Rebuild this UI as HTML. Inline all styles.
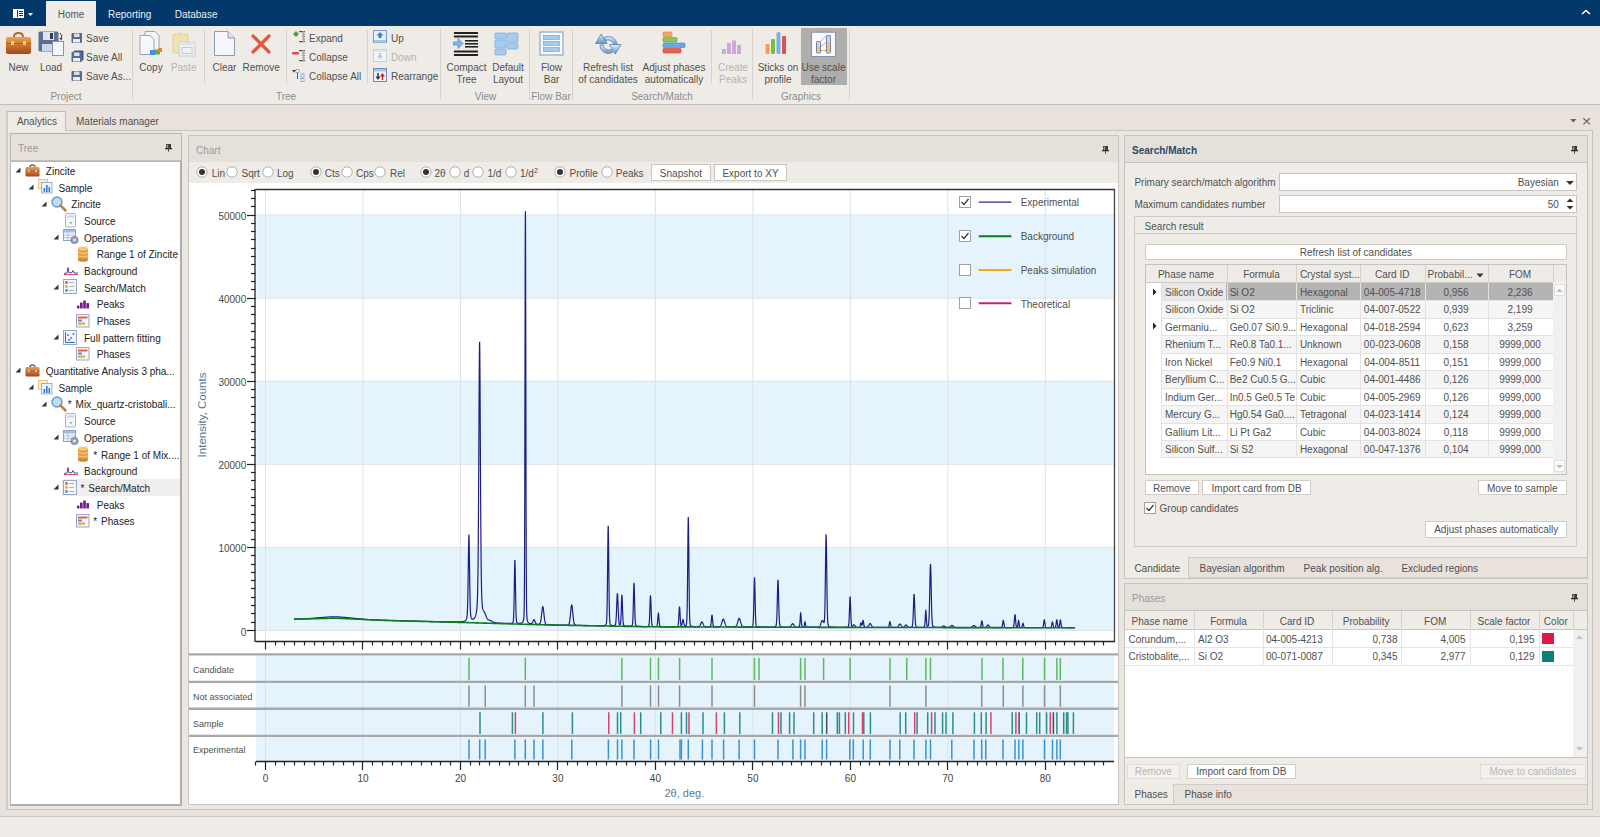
<!DOCTYPE html><html><head><meta charset="utf-8"><style>
*{margin:0;padding:0;box-sizing:border-box}
html,body{width:1600px;height:837px;overflow:hidden;background:#efece7;font-family:"Liberation Sans",sans-serif;font-size:10px;}
.r{position:absolute}
.t{position:absolute;white-space:nowrap;line-height:12px}
</style></head><body>
<div class="r" style="left:0px;top:0px;width:1600px;height:26px;background:#02386a"></div>
<svg class="r" style="left:12px;top:8px;" width="22" height="12" viewBox="0 0 22 12"><rect x="1" y="1" width="11" height="9" fill="#fff"/><rect x="5" y="2" width="1" height="7" fill="#02386a"/><rect x="7" y="3" width="4" height="1" fill="#02386a"/><rect x="7" y="5" width="4" height="1" fill="#02386a"/><rect x="7" y="7" width="4" height="1" fill="#02386a"/><path d="M16 5 L21 5 L18.5 8 Z" fill="#fff"/></svg>
<div class="r" style="left:46px;top:1px;width:50px;height:25px;background:#efece7"></div>
<div class="t" style="left:57.7px;top:9.43px;color:#4e5866;font-size:10px;">Home</div>
<div class="t" style="left:108.0px;top:9.43px;color:#e8eef4;font-size:10px;">Reporting</div>
<div class="t" style="left:174.7px;top:9.43px;color:#e8eef4;font-size:10px;">Database</div>
<svg class="r" style="left:1580px;top:8px;" width="12" height="8" viewBox="0 0 12 8"><path d="M2 6 L6 2.5 L10 6" stroke="#fff" stroke-width="1.6" fill="none"/></svg>
<div class="r" style="left:0px;top:26px;width:1600px;height:78px;background:#efece7"></div>
<div class="r" style="left:0px;top:104px;width:1600px;height:1px;background:#c2c0bc"></div>
<div class="r" style="left:132px;top:30px;width:1px;height:70px;background:#d6d2cd"></div>
<div class="r" style="left:204px;top:30px;width:1px;height:54px;background:#d6d2cd"></div>
<div class="r" style="left:286px;top:30px;width:1px;height:54px;background:#d6d2cd"></div>
<div class="r" style="left:367px;top:30px;width:1px;height:54px;background:#d6d2cd"></div>
<div class="r" style="left:440px;top:29px;width:1px;height:71px;background:#d6d2cd"></div>
<div class="r" style="left:529px;top:29px;width:1px;height:71px;background:#d6d2cd"></div>
<div class="r" style="left:572px;top:29px;width:1px;height:71px;background:#d6d2cd"></div>
<div class="r" style="left:711px;top:30px;width:1px;height:54px;background:#d6d2cd"></div>
<div class="r" style="left:752px;top:29px;width:1px;height:71px;background:#d6d2cd"></div>
<div class="r" style="left:849px;top:29px;width:1px;height:71px;background:#d6d2cd"></div>
<div class="t" style="left:-34.0px;width:200px;text-align:center;top:91.44px;color:#8c8c8c;font-size:10px;">Project</div>
<div class="t" style="left:186.0px;width:200px;text-align:center;top:91.44px;color:#8c8c8c;font-size:10px;">Tree</div>
<div class="t" style="left:385.5px;width:200px;text-align:center;top:91.44px;color:#8c8c8c;font-size:10px;">View</div>
<div class="t" style="left:451.0px;width:200px;text-align:center;top:91.44px;color:#8c8c8c;font-size:10px;">Flow Bar</div>
<div class="t" style="left:562.0px;width:200px;text-align:center;top:91.44px;color:#8c8c8c;font-size:10px;">Search/Match</div>
<div class="t" style="left:701.0px;width:200px;text-align:center;top:91.44px;color:#8c8c8c;font-size:10px;">Graphics</div>
<div class="t" style="left:-81.5px;width:200px;text-align:center;top:62.44px;color:#505050;font-size:10px;">New</div>
<div class="t" style="left:-49.0px;width:200px;text-align:center;top:62.44px;color:#505050;font-size:10px;">Load</div>
<div class="t" style="left:51.0px;width:200px;text-align:center;top:62.44px;color:#505050;font-size:10px;">Copy</div>
<div class="t" style="left:83.7px;width:200px;text-align:center;top:62.44px;color:#b5b3b0;font-size:10px;">Paste</div>
<div class="t" style="left:124.5px;width:200px;text-align:center;top:62.44px;color:#505050;font-size:10px;">Clear</div>
<div class="t" style="left:161.2px;width:200px;text-align:center;top:62.44px;color:#505050;font-size:10px;">Remove</div>
<div class="t" style="left:366.5px;width:200px;text-align:center;top:62.44px;color:#505050;font-size:10px;">Compact</div><div class="t" style="left:366.5px;width:200px;text-align:center;top:74.44px;color:#505050;font-size:10px;">Tree</div>
<div class="t" style="left:408.0px;width:200px;text-align:center;top:62.44px;color:#505050;font-size:10px;">Default</div><div class="t" style="left:408.0px;width:200px;text-align:center;top:74.44px;color:#505050;font-size:10px;">Layout</div>
<div class="t" style="left:451.5px;width:200px;text-align:center;top:62.44px;color:#505050;font-size:10px;">Flow</div><div class="t" style="left:451.5px;width:200px;text-align:center;top:74.44px;color:#505050;font-size:10px;">Bar</div>
<div class="t" style="left:508.0px;width:200px;text-align:center;top:62.44px;color:#505050;font-size:10px;">Refresh list</div><div class="t" style="left:508.0px;width:200px;text-align:center;top:74.44px;color:#505050;font-size:10px;">of candidates</div>
<div class="t" style="left:574.0px;width:200px;text-align:center;top:62.44px;color:#505050;font-size:10px;">Adjust phases</div><div class="t" style="left:574.0px;width:200px;text-align:center;top:74.44px;color:#505050;font-size:10px;">automatically</div>
<div class="r" style="left:801px;top:28px;width:46px;height:57px;background:#afaeac"></div>
<div class="t" style="left:633.0px;width:200px;text-align:center;top:62.44px;color:#b5b3b0;font-size:10px;">Create</div><div class="t" style="left:633.0px;width:200px;text-align:center;top:74.44px;color:#b5b3b0;font-size:10px;">Peaks</div>
<div class="t" style="left:678.0px;width:200px;text-align:center;top:62.44px;color:#505050;font-size:10px;">Sticks on</div><div class="t" style="left:678.0px;width:200px;text-align:center;top:74.44px;color:#505050;font-size:10px;">profile</div>
<div class="t" style="left:723.5px;width:200px;text-align:center;top:62.44px;color:#505050;font-size:10px;">Use scale</div><div class="t" style="left:723.5px;width:200px;text-align:center;top:74.44px;color:#505050;font-size:10px;">factor</div>
<div class="t" style="left:86.0px;top:33.14px;color:#505050;font-size:10px;">Save</div>
<div class="t" style="left:86.0px;top:52.23px;color:#505050;font-size:10px;">Save All</div>
<div class="t" style="left:86.0px;top:70.94px;color:#505050;font-size:10px;">Save As...</div>
<div class="t" style="left:309.0px;top:32.94px;color:#505050;font-size:10px;">Expand</div>
<div class="t" style="left:309.0px;top:52.44px;color:#505050;font-size:10px;">Collapse</div>
<div class="t" style="left:309.0px;top:71.44px;color:#505050;font-size:10px;">Collapse All</div>
<div class="t" style="left:391.0px;top:32.94px;color:#505050;font-size:10px;">Up</div>
<div class="t" style="left:391.0px;top:52.44px;color:#b5b3b0;font-size:10px;">Down</div>
<div class="t" style="left:391.0px;top:71.44px;color:#505050;font-size:10px;">Rearrange</div>
<svg class="r" style="left:5px;top:31px;" width="27" height="25" viewBox="0 0 27 25"><defs><linearGradient id="bc" x1="0" y1="0" x2="0" y2="1"><stop offset="0" stop-color="#f0a050"/><stop offset="1" stop-color="#a04818"/></linearGradient></defs>
<path d="M9 6 Q9 2 13.5 2 Q18 2 18 6" stroke="#b06a30" stroke-width="2" fill="none"/>
<rect x="1" y="6" width="25" height="17" rx="2" fill="url(#bc)"/>
<rect x="1" y="12" width="25" height="1" fill="#8a4010" opacity="0.5"/>
<rect x="6" y="10" width="3" height="4" fill="#ffd060"/><rect x="18" y="10" width="3" height="4" fill="#ffd060"/></svg>
<svg class="r" style="left:38px;top:31px;" width="26" height="25" viewBox="0 0 26 25"><rect x="0.5" y="0.5" width="20" height="20" rx="1.5" fill="#5c6e94"/>
<rect x="5" y="1" width="11" height="8" fill="#dfe6f0"/><rect x="12" y="2" width="3" height="6" fill="#2c3a5a"/>
<rect x="4" y="13" width="13" height="7" fill="#c8d8ec"/>
<path d="M22 2 Q25 4 23 8" stroke="#333" stroke-width="1" fill="none"/><path d="M21.5 7 L24.5 7 L23 9.5Z" fill="#333"/>
<rect x="14.5" y="10.5" width="11" height="14" fill="#f4f6fa" stroke="#8a96b0" stroke-width="1"/></svg>
<svg class="r" style="left:71px;top:31px;" width="13" height="13" viewBox="0 0 13 13"><rect x="0.5" y="2" width="10.5" height="10" rx="1" fill="#5a6a8e"/><rect x="3" y="2.5" width="5.5" height="3.5" fill="#d8e0ec"/><rect x="2" y="8" width="7" height="3.5" fill="#e8eef6"/></svg>
<svg class="r" style="left:71px;top:50px;" width="13" height="13" viewBox="0 0 13 13"><rect x="2.5" y="0.5" width="10" height="10" rx="1" fill="#48587a"/><rect x="0.5" y="2" width="10.5" height="10" rx="1" fill="#5a6a8e"/><rect x="3" y="2.5" width="5.5" height="3.5" fill="#d8e0ec"/><rect x="2" y="8" width="7" height="3.5" fill="#e8eef6"/></svg>
<svg class="r" style="left:71px;top:69px;" width="13" height="13" viewBox="0 0 13 13"><rect x="0.5" y="2" width="10.5" height="10" rx="1" fill="#5a6a8e"/><rect x="3" y="2.5" width="5.5" height="3.5" fill="#d8e0ec"/><rect x="2" y="8" width="7" height="3.5" fill="#e8eef6"/></svg>
<svg class="r" style="left:139px;top:31px;" width="24" height="26" viewBox="0 0 24 26"><path d="M6 0.5 L16 0.5 L20 4.5 L20 19.5 L6 19.5Z" fill="#f2f4f8" stroke="#9aa4b8"/>
<path d="M1 4.5 L11 4.5 L15 8.5 L15 23.5 L1 23.5Z" fill="#f6f8fb" stroke="#9aa4b8"/>
<rect x="11" y="19" width="5" height="5" fill="#4a90d8"/><rect x="16" y="18.5" width="5" height="5" fill="#58b030"/><rect x="19" y="17" width="4" height="4" fill="#e08a30"/></svg>
<svg class="r" style="left:172px;top:31px;" width="24" height="26" viewBox="0 0 24 26"><rect x="1" y="3" width="15" height="19" rx="1.5" fill="#f2e2b0" stroke="#e0d0a0"/>
<path d="M5 3 Q8.5 -1 12 3 Z" fill="#d8dce4"/>
<rect x="7" y="11" width="16" height="14" fill="#eef0f4" stroke="#c8ccd4"/><rect x="7" y="11" width="16" height="3" fill="#dfe3ea"/>
<rect x="10" y="16.5" width="10" height="6" fill="none" stroke="#c8ccd4"/></svg>
<svg class="r" style="left:213px;top:31px;" width="23" height="26" viewBox="0 0 23 26"><path d="M1.5 0.5 L15 0.5 L21.5 7 L21.5 24.5 L1.5 24.5Z" fill="#f4f6fa" stroke="#8e9ab0"/><path d="M15 0.5 L15 7 L21.5 7" fill="#e0e6f0" stroke="#8e9ab0"/></svg>
<svg class="r" style="left:251px;top:34px;" width="20" height="20" viewBox="0 0 20 20"><path d="M2 2 L18 18 M18 2 L2 18" stroke="#e05a3a" stroke-width="3.2" stroke-linecap="round"/></svg>
<svg class="r" style="left:292px;top:30px;" width="15" height="14" viewBox="0 0 15 14"><path d="M4 1 L7 4 L4 7 L1 4Z" fill="#4aa040"/><rect x="7" y="1" width="6" height="1.2" fill="#555"/><rect x="10" y="3.5" width="3" height="1" fill="#888"/><rect x="10" y="6" width="3" height="1" fill="#888"/><rect x="10" y="8.5" width="3" height="1" fill="#888"/><rect x="7" y="11" width="6" height="1.2" fill="#555"/><rect x="11" y="1" width="1.2" height="11" fill="#aaa"/></svg>
<svg class="r" style="left:292px;top:49px;" width="15" height="14" viewBox="0 0 15 14"><rect x="0" y="3" width="7" height="2.5" rx="1" fill="#e04848"/><rect x="7" y="1" width="6" height="1.2" fill="#555"/><rect x="10" y="3.5" width="3" height="1" fill="#888"/><rect x="10" y="6" width="3" height="1" fill="#888"/><rect x="10" y="8.5" width="3" height="1" fill="#888"/><rect x="7" y="11" width="6" height="1.2" fill="#555"/><rect x="11" y="1" width="1.2" height="11" fill="#aaa"/></svg>
<svg class="r" style="left:292px;top:69px;" width="15" height="14" viewBox="0 0 15 14"><path d="M0 1 L4 1 L2 3.5Z" fill="#333"/><rect x="4" y="0.5" width="3" height="3" fill="#fff" stroke="#7a9ac8" stroke-width="0.8"/><rect x="5" y="4" width="1" height="6" fill="#555"/><rect x="9" y="5" width="3" height="3" fill="#fff" stroke="#7a9ac8" stroke-width="0.8"/><rect x="9" y="9.5" width="3" height="3" fill="#fff" stroke="#7a9ac8" stroke-width="0.8"/></svg>
<svg class="r" style="left:373px;top:30px;" width="15" height="14" viewBox="0 0 15 14"><rect x="0.5" y="0.5" width="13" height="12" fill="#e8f0fa" stroke="#7a9ac8"/><rect x="1" y="10" width="12" height="2.5" fill="#a8c4e8"/><path d="M7 2 L10.5 5.5 L8.5 5.5 L8.5 8 L5.5 8 L5.5 5.5 L3.5 5.5Z" fill="#3a80d0"/></svg>
<svg class="r" style="left:373px;top:49px;" width="15" height="14" viewBox="0 0 15 14"><rect x="0.5" y="0.5" width="13" height="12" fill="#f2f4f8" stroke="#c4d0e0"/><rect x="1" y="1" width="12" height="2" fill="#dde6f2"/><path d="M7 10 L10 7 L8.3 7 L8.3 4 L5.7 4 L5.7 7 L4 7Z" fill="#b8cce4"/></svg>
<svg class="r" style="left:373px;top:68px;" width="15" height="15" viewBox="0 0 15 15"><rect x="0.5" y="0.5" width="13" height="13" fill="#eef3fa" stroke="#6a8cc0"/><rect x="1" y="1" width="12" height="2.5" fill="#a8c4e8"/><path d="M5 12 L2.5 8.5 L4.3 8.5 L4.3 5 L5.7 5 L5.7 8.5 L7.5 8.5Z" fill="#20305a"/><path d="M9.5 5 L12 8.5 L10.2 8.5 L10.2 12 L8.8 12 L8.8 8.5 L7 8.5Z" fill="#d02020"/></svg>
<svg class="r" style="left:453px;top:32px;" width="26" height="25" viewBox="0 0 26 25"><rect x="1" y="0" width="24" height="2" fill="#222"/><rect x="1" y="3.5" width="24" height="2" fill="#222"/><rect x="12" y="8" width="13" height="1.6" fill="#222"/><rect x="12" y="11" width="13" height="1.6" fill="#222"/><rect x="12" y="14" width="13" height="1.6" fill="#222"/><rect x="1" y="18.5" width="24" height="2" fill="#222"/><rect x="1" y="22" width="24" height="2" fill="#222"/><path d="M0 10 L5 10 L5 6.5 L10 11.5 L5 16.5 L5 13 L0 13Z" fill="#80b8e8" stroke="#4a88c8" stroke-width="0.7"/></svg>
<svg class="r" style="left:494px;top:32px;" width="27" height="25" viewBox="0 0 27 25"><g fill="#a6cbef" stroke="#7eaee0" stroke-width="0.8"><rect x="1" y="1" width="11" height="6" rx="1"/><rect x="1" y="8" width="11" height="8" rx="1"/><rect x="1" y="17" width="11" height="6" rx="1"/><rect x="13" y="1" width="11" height="9" rx="1"/><rect x="13" y="11" width="11" height="6" rx="1"/></g></svg>
<svg class="r" style="left:539px;top:31px;" width="25" height="26" viewBox="0 0 25 26"><rect x="1" y="1" width="23" height="23" fill="#f8fafc" stroke="#8aa8d0" stroke-width="1.2"/><g fill="#a6cbef" stroke="#7eaee0" stroke-width="0.8"><rect x="4.5" y="4.5" width="16" height="4"/><rect x="4.5" y="10.5" width="16" height="4"/><rect x="4.5" y="16.5" width="16" height="4"/></g></svg>
<svg class="r" style="left:594px;top:33px;" width="28" height="22" viewBox="0 0 28 22"><defs><linearGradient id="rf" x1="0" y1="0" x2="0" y2="1"><stop offset="0" stop-color="#d8effc"/><stop offset="1" stop-color="#5c98d6"/></linearGradient></defs>
<g fill="url(#rf)" stroke="#5a7ea8" stroke-width="0.8" stroke-linejoin="round">
<path d="M10.25 4.64 A8.5 8.5 0 0 1 23 12 L19.5 12 A5 5 0 0 0 12 7.67 Z"/>
<path d="M15.5 11.5 L27 11.5 L21.25 21 Z"/>
<path d="M6 12 A8.5 8.5 0 0 0 18.75 19.36 L17 16.33 A5 5 0 0 1 9.5 12 Z"/>
<path d="M1.5 10.5 L13 10.5 L7.25 1 Z"/>
</g></svg>
<svg class="r" style="left:662px;top:31px;" width="24" height="26" viewBox="0 0 24 26"><rect x="1" y="1" width="9" height="4.5" rx="1" fill="#f0a860" stroke="#d08840" stroke-width="0.6"/><rect x="1" y="6.5" width="14" height="4.5" rx="1" fill="#8cc850" stroke="#60a030" stroke-width="0.6"/><rect x="1" y="12" width="22" height="4.5" rx="1" fill="#6aa8e8" stroke="#3a80d0" stroke-width="0.6"/><rect x="1" y="17.5" width="18" height="4.5" rx="1" fill="#e86050" stroke="#c03a30" stroke-width="0.6"/></svg>
<svg class="r" style="left:721px;top:40px;" width="24" height="15" viewBox="0 0 24 15"><g fill="#cda8d8"><rect x="1" y="9" width="4" height="5"/><rect x="6" y="3" width="4" height="11"/><rect x="11" y="0.5" width="4" height="13.5"/><rect x="16" y="5" width="4" height="9"/></g></svg>
<svg class="r" style="left:764px;top:31px;" width="26" height="24" viewBox="0 0 26 24"><rect x="1.5" y="13" width="4" height="10" rx="1" fill="#f0a050"/><rect x="7" y="8" width="4" height="15" rx="1" fill="#78c040"/><rect x="12.5" y="1" width="4" height="22" rx="1.5" fill="#7ab0e8"/><rect x="18" y="5" width="4" height="18" rx="1" fill="#e05050"/></svg>
<svg class="r" style="left:810px;top:31px;" width="27" height="27" viewBox="0 0 27 27"><rect x="1.5" y="1.2" width="24" height="24.3" fill="#f8f9fc" stroke="#8890a8" stroke-width="1"/>
<path d="M10.5 10.5 L16.5 4.5 M10.5 16 L16.5 11 M10.5 19.5 L16.5 19.5" stroke="#e0a060" stroke-width="0.9"/>
<rect x="6.5" y="10.5" width="4" height="11.5" rx="0.8" fill="#c8d4ec" stroke="#7880a0" stroke-width="1"/>
<rect x="7" y="15.5" width="3" height="4.5" fill="#f4c070"/>
<rect x="16.5" y="4.5" width="4" height="17.5" rx="0.8" fill="#c8d4ec" stroke="#7880a0" stroke-width="1"/>
<rect x="17" y="11.5" width="3" height="8.5" fill="#f4c070"/></svg>
<div class="r" style="left:0px;top:105px;width:1600px;height:711px;background:#e8e1dc"></div>
<div class="r" style="left:0px;top:105px;width:1600px;height:1px;background:#e2dfdb"></div>
<div class="r" style="left:6px;top:111px;width:60px;height:20px;background:#efece7;border:1px solid #c0bcb7;border-left:2px solid #cdc9c4;border-bottom:none"></div>
<div class="t" style="left:16.9px;top:116.44px;color:#505050;font-size:10px;">Analytics</div>
<div class="t" style="left:76.0px;top:116.44px;color:#505050;font-size:10px;">Materials manager</div>
<svg class="r" style="left:1567px;top:117px;" width="12" height="8" viewBox="0 0 12 8"><path d="M3 2 L9.5 2 L6.25 5.5Z" fill="#666"/></svg>
<svg class="r" style="left:1580px;top:115px;" width="12" height="12" viewBox="0 0 12 12"><path d="M3.4 3.2 L9.9 9.4 M9.9 3.2 L3.4 9.4" stroke="#666" stroke-width="1.2"/></svg>
<div class="r" style="left:6px;top:130px;width:1587px;height:680px;background:#eae6e1;border:1px solid #c6c2bd;border-left:2px solid #cdc9c4"></div>
<div class="r" style="left:8px;top:130px;width:57px;height:2px;background:#efece7"></div>
<div class="r" style="left:0px;top:810px;width:1600px;height:6px;background:#e8e1dc"></div>
<div class="r" style="left:0px;top:816px;width:1600px;height:1px;background:#c9c5c0"></div>
<div class="r" style="left:0px;top:817px;width:1600px;height:20px;background:#efece7"></div>
<div class="r" style="left:10px;top:133px;width:172px;height:673px;background:#efece7;border:1px solid #b9b6b2"></div><div class="r" style="left:11px;top:134px;width:170px;height:27px;background:#e6e0db;border-bottom:1px solid #c4c0bb"></div><div class="t" style="left:18.0px;top:142.94px;color:#9a9a9a;font-size:10px;">Tree</div><svg class="r" style="left:164.5px;top:144px;" width="7" height="9" viewBox="0 0 7 9"><rect x="1" y="0" width="5" height="4.2" fill="#3a3a3a"/><rect x="1.6" y="0.6" width="1.6" height="3.4" fill="#999"/><rect x="0" y="4" width="7" height="1.3" fill="#333"/><rect x="3" y="5" width="1" height="2.6" fill="#444"/></svg>
<div class="r" style="left:11px;top:161px;width:169px;height:644px;background:#fff;border-top:1px solid #b8b4b0"></div>
<div class="r" style="left:180px;top:161px;width:2px;height:645px;background:#b0aeac"></div>
<div class="r" style="left:10px;top:804px;width:172px;height:2px;background:#b0aeac"></div>
<svg class="r" style="left:15.2px;top:167.2px;" width="6" height="6" viewBox="0 0 6 6"><path d="M5.5 0.5 L5.5 5.5 L0.5 5.5Z" fill="#333"/></svg>
<svg class="r" style="left:25px;top:164px;" width="15" height="13" viewBox="0 0 15 13"><defs><linearGradient id="tb" x1="0" y1="0" x2="0" y2="1"><stop offset="0" stop-color="#e8a060"/><stop offset="1" stop-color="#a04a1c"/></linearGradient></defs><path d="M5 3 Q5 0.8 7.5 0.8 Q10 0.8 10 3" stroke="#8a5028" stroke-width="1.3" fill="none"/><rect x="0.5" y="3" width="14" height="9.5" rx="1.2" fill="url(#tb)"/><rect x="0.5" y="6.6" width="14" height="0.8" fill="#7a3a10" opacity="0.5"/><rect x="3" y="6" width="1.6" height="2" fill="#ffd070"/><rect x="10.4" y="6" width="1.6" height="2" fill="#ffd070"/></svg>
<div class="t" style="left:45.8px;top:165.94px;color:#222;font-size:10px;">Zincite</div>
<svg class="r" style="left:27.950000000000003px;top:183.88px;" width="6" height="6" viewBox="0 0 6 6"><path d="M5.5 0.5 L5.5 5.5 L0.5 5.5Z" fill="#333"/></svg>
<svg class="r" style="left:38px;top:179px;" width="15" height="15" viewBox="0 0 15 15"><rect x="0.5" y="0.5" width="9" height="9" fill="#f8f0d8" stroke="#d8b868" stroke-width="0.8"/><rect x="3.5" y="3.5" width="10.5" height="10.5" fill="#eef4fc" stroke="#8aaad0" stroke-width="0.9"/><rect x="5.5" y="9" width="1.6" height="4" fill="#3a78c8"/><rect x="8" y="6" width="1.6" height="7" fill="#3a78c8"/><rect x="10.5" y="8" width="1.6" height="5" fill="#3a78c8"/></svg>
<div class="t" style="left:58.5px;top:182.62px;color:#222;font-size:10px;">Sample</div>
<svg class="r" style="left:40.7px;top:200.56px;" width="6" height="6" viewBox="0 0 6 6"><path d="M5.5 0.5 L5.5 5.5 L0.5 5.5Z" fill="#333"/></svg>
<svg class="r" style="left:51px;top:196px;" width="16" height="16" viewBox="0 0 16 16"><circle cx="6" cy="6" r="5" fill="#bcdcf4" stroke="#6a9ac8" stroke-width="1.4"/><path d="M9.5 9.5 L14.5 14.5" stroke="#c08040" stroke-width="2.5" stroke-linecap="round"/></svg>
<div class="t" style="left:71.3px;top:199.30px;color:#222;font-size:10px;">Zincite</div>
<svg class="r" style="left:64px;top:213px;" width="13" height="15" viewBox="0 0 13 15"><rect x="1.5" y="0.5" width="10" height="13.5" rx="1" fill="#f2f5f9" stroke="#a8b4c4"/><rect x="3" y="2.5" width="7" height="2" fill="#c8d4e4"/><rect x="6" y="9" width="1.5" height="1.5" fill="#4a9a4a"/></svg>
<div class="t" style="left:84.0px;top:215.97px;color:#222;font-size:10px;">Source</div>
<svg class="r" style="left:53.45px;top:233.92px;" width="6" height="6" viewBox="0 0 6 6"><path d="M5.5 0.5 L5.5 5.5 L0.5 5.5Z" fill="#333"/></svg>
<svg class="r" style="left:63px;top:229px;" width="16" height="15" viewBox="0 0 16 15"><rect x="0.5" y="0.5" width="12" height="11" fill="#eef3fa" stroke="#8aa4c8"/><rect x="1" y="1" width="11" height="2.5" fill="#a8c0e0"/><path d="M1 6 L12 6 M1 8.5 L12 8.5 M5 3.5 L5 11" stroke="#a8b8d0" stroke-width="0.7"/><circle cx="11.5" cy="11" r="3.6" fill="#9aa6b8" stroke="#6a7688" stroke-width="0.8"/><circle cx="11.5" cy="11" r="1.3" fill="#e8ecf2"/></svg>
<div class="t" style="left:84.0px;top:232.66px;color:#222;font-size:10px;">Operations</div>
<svg class="r" style="left:77px;top:246px;" width="12" height="16" viewBox="0 0 12 16"><rect x="1" y="2" width="10" height="12" fill="#e8a040"/><ellipse cx="6" cy="2.5" rx="5" ry="2" fill="#f8c870"/><ellipse cx="6" cy="14" rx="5" ry="1.8" fill="#d08830"/><path d="M1 6.5 Q6 8.5 11 6.5 M1 10 Q6 12 11 10" stroke="#f8d090" stroke-width="0.9" fill="none"/></svg>
<div class="t" style="left:96.8px;top:249.33px;color:#222;font-size:10px;">Range 1 of Zincite</div>
<svg class="r" style="left:63px;top:266px;" width="16" height="10" viewBox="0 0 16 10"><path d="M1 8.5 L15 8.5" stroke="#d04060" stroke-width="0.9"/><path d="M1 7.5 L4 7 L5 1.5 L6 7 L9 6.5 L10 4.5 L11 7 L15 7" stroke="#3a3a8a" stroke-width="0.9" fill="none"/></svg>
<div class="t" style="left:84.0px;top:266.01px;color:#222;font-size:10px;">Background</div>
<svg class="r" style="left:53.45px;top:283.96px;" width="6" height="6" viewBox="0 0 6 6"><path d="M5.5 0.5 L5.5 5.5 L0.5 5.5Z" fill="#333"/></svg>
<svg class="r" style="left:63px;top:279px;" width="14" height="15" viewBox="0 0 14 15"><rect x="0.5" y="0.5" width="13" height="14" fill="#f4f6fa" stroke="#98a8c0"/><circle cx="3.5" cy="3.5" r="1.4" fill="#e06030"/><circle cx="3.5" cy="7.5" r="1.4" fill="#e0b030"/><circle cx="3.5" cy="11.5" r="1.4" fill="#5a8ad0"/><path d="M6 3.5 L11 3.5 M6 7.5 L11 7.5 M6 11.5 L11 11.5" stroke="#a0aabb" stroke-width="0.9"/></svg>
<div class="t" style="left:84.0px;top:282.69px;color:#222;font-size:10px;">Search/Match</div>
<svg class="r" style="left:76px;top:300px;" width="15" height="9" viewBox="0 0 15 9"><g fill="#6a1a8a"><rect x="1" y="5.5" width="2.4" height="3" rx="0.5"/><rect x="4" y="2.5" width="2.6" height="6" rx="0.5"/><rect x="7.2" y="0.5" width="2.6" height="8" rx="0.5"/><rect x="10.4" y="3" width="2.6" height="5.5" rx="0.5"/></g></svg>
<div class="t" style="left:96.8px;top:299.38px;color:#222;font-size:10px;">Peaks</div>
<svg class="r" style="left:76px;top:314px;" width="14" height="14" viewBox="0 0 14 14"><rect x="0.5" y="0.5" width="12.5" height="12.5" fill="#f4f6fa" stroke="#98a8c0"/><rect x="2" y="2.5" width="9.5" height="2" fill="#e86040"/><rect x="2" y="5.5" width="4" height="2" fill="#5a8ad0"/><rect x="2" y="8.5" width="7" height="2.2" fill="#e8a850"/></svg>
<div class="t" style="left:96.8px;top:316.06px;color:#222;font-size:10px;">Phases</div>
<svg class="r" style="left:53.45px;top:334.0px;" width="6" height="6" viewBox="0 0 6 6"><path d="M5.5 0.5 L5.5 5.5 L0.5 5.5Z" fill="#333"/></svg>
<svg class="r" style="left:63px;top:330px;" width="14" height="15" viewBox="0 0 14 15"><rect x="0.5" y="0.5" width="13" height="14" fill="#f4f6fa" stroke="#98a8c0"/><path d="M2.5 2 L2.5 12.5 L12 12.5" stroke="#3a6ac0" stroke-width="1" fill="none"/><circle cx="5" cy="5" r="0.9" fill="#3a6ac0"/><circle cx="8" cy="8" r="0.9" fill="#3a6ac0"/><circle cx="10.5" cy="4" r="0.9" fill="#3a6ac0"/><circle cx="6" cy="10" r="0.9" fill="#3a6ac0"/></svg>
<div class="t" style="left:84.0px;top:332.74px;color:#222;font-size:10px;">Full pattern fitting</div>
<svg class="r" style="left:76px;top:347px;" width="14" height="14" viewBox="0 0 14 14"><rect x="0.5" y="0.5" width="12.5" height="12.5" fill="#f4f6fa" stroke="#98a8c0"/><rect x="2" y="2.5" width="9.5" height="2" fill="#e86040"/><rect x="2" y="5.5" width="4" height="2" fill="#5a8ad0"/><rect x="2" y="8.5" width="7" height="2.2" fill="#e8a850"/></svg>
<div class="t" style="left:96.8px;top:349.41px;color:#222;font-size:10px;">Phases</div>
<svg class="r" style="left:15.2px;top:367.36px;" width="6" height="6" viewBox="0 0 6 6"><path d="M5.5 0.5 L5.5 5.5 L0.5 5.5Z" fill="#333"/></svg>
<svg class="r" style="left:25px;top:364px;" width="15" height="13" viewBox="0 0 15 13"><defs><linearGradient id="tb" x1="0" y1="0" x2="0" y2="1"><stop offset="0" stop-color="#e8a060"/><stop offset="1" stop-color="#a04a1c"/></linearGradient></defs><path d="M5 3 Q5 0.8 7.5 0.8 Q10 0.8 10 3" stroke="#8a5028" stroke-width="1.3" fill="none"/><rect x="0.5" y="3" width="14" height="9.5" rx="1.2" fill="url(#tb)"/><rect x="0.5" y="6.6" width="14" height="0.8" fill="#7a3a10" opacity="0.5"/><rect x="3" y="6" width="1.6" height="2" fill="#ffd070"/><rect x="10.4" y="6" width="1.6" height="2" fill="#ffd070"/></svg>
<div class="t" style="left:45.8px;top:366.10px;color:#222;font-size:10px;">Quantitative Analysis 3 pha...</div>
<svg class="r" style="left:27.950000000000003px;top:384.03999999999996px;" width="6" height="6" viewBox="0 0 6 6"><path d="M5.5 0.5 L5.5 5.5 L0.5 5.5Z" fill="#333"/></svg>
<svg class="r" style="left:38px;top:380px;" width="15" height="15" viewBox="0 0 15 15"><rect x="0.5" y="0.5" width="9" height="9" fill="#f8f0d8" stroke="#d8b868" stroke-width="0.8"/><rect x="3.5" y="3.5" width="10.5" height="10.5" fill="#eef4fc" stroke="#8aaad0" stroke-width="0.9"/><rect x="5.5" y="9" width="1.6" height="4" fill="#3a78c8"/><rect x="8" y="6" width="1.6" height="7" fill="#3a78c8"/><rect x="10.5" y="8" width="1.6" height="5" fill="#3a78c8"/></svg>
<div class="t" style="left:58.5px;top:382.77px;color:#222;font-size:10px;">Sample</div>
<svg class="r" style="left:40.7px;top:400.71999999999997px;" width="6" height="6" viewBox="0 0 6 6"><path d="M5.5 0.5 L5.5 5.5 L0.5 5.5Z" fill="#333"/></svg>
<svg class="r" style="left:51px;top:396px;" width="16" height="16" viewBox="0 0 16 16"><circle cx="6" cy="6" r="5" fill="#bcdcf4" stroke="#6a9ac8" stroke-width="1.4"/><path d="M9.5 9.5 L14.5 14.5" stroke="#c08040" stroke-width="2.5" stroke-linecap="round"/></svg>
<div class="t" style="left:67.8px;top:399.45px;color:#222;font-size:10px;">*</div>
<div class="t" style="left:75.6px;top:399.45px;color:#222;font-size:10px;">Mix_quartz-cristobali...</div>
<svg class="r" style="left:64px;top:413px;" width="13" height="15" viewBox="0 0 13 15"><rect x="1.5" y="0.5" width="10" height="13.5" rx="1" fill="#f2f5f9" stroke="#a8b4c4"/><rect x="3" y="2.5" width="7" height="2" fill="#c8d4e4"/><rect x="6" y="9" width="1.5" height="1.5" fill="#4a9a4a"/></svg>
<div class="t" style="left:84.0px;top:416.13px;color:#222;font-size:10px;">Source</div>
<svg class="r" style="left:53.45px;top:434.08px;" width="6" height="6" viewBox="0 0 6 6"><path d="M5.5 0.5 L5.5 5.5 L0.5 5.5Z" fill="#333"/></svg>
<svg class="r" style="left:63px;top:430px;" width="16" height="15" viewBox="0 0 16 15"><rect x="0.5" y="0.5" width="12" height="11" fill="#eef3fa" stroke="#8aa4c8"/><rect x="1" y="1" width="11" height="2.5" fill="#a8c0e0"/><path d="M1 6 L12 6 M1 8.5 L12 8.5 M5 3.5 L5 11" stroke="#a8b8d0" stroke-width="0.7"/><circle cx="11.5" cy="11" r="3.6" fill="#9aa6b8" stroke="#6a7688" stroke-width="0.8"/><circle cx="11.5" cy="11" r="1.3" fill="#e8ecf2"/></svg>
<div class="t" style="left:84.0px;top:432.81px;color:#222;font-size:10px;">Operations</div>
<svg class="r" style="left:77px;top:446px;" width="12" height="16" viewBox="0 0 12 16"><rect x="1" y="2" width="10" height="12" fill="#e8a040"/><ellipse cx="6" cy="2.5" rx="5" ry="2" fill="#f8c870"/><ellipse cx="6" cy="14" rx="5" ry="1.8" fill="#d08830"/><path d="M1 6.5 Q6 8.5 11 6.5 M1 10 Q6 12 11 10" stroke="#f8d090" stroke-width="0.9" fill="none"/></svg>
<div class="t" style="left:93.3px;top:449.50px;color:#222;font-size:10px;">*</div>
<div class="t" style="left:101.1px;top:449.50px;color:#222;font-size:10px;">Range 1 of Mix....</div>
<svg class="r" style="left:63px;top:466px;" width="16" height="10" viewBox="0 0 16 10"><path d="M1 8.5 L15 8.5" stroke="#d04060" stroke-width="0.9"/><path d="M1 7.5 L4 7 L5 1.5 L6 7 L9 6.5 L10 4.5 L11 7 L15 7" stroke="#3a3a8a" stroke-width="0.9" fill="none"/></svg>
<div class="t" style="left:84.0px;top:466.18px;color:#222;font-size:10px;">Background</div>
<div class="r" style="left:62px;top:479px;width:118px;height:17px;background:#efefef"></div>
<svg class="r" style="left:53.45px;top:484.12px;" width="6" height="6" viewBox="0 0 6 6"><path d="M5.5 0.5 L5.5 5.5 L0.5 5.5Z" fill="#333"/></svg>
<svg class="r" style="left:63px;top:480px;" width="14" height="15" viewBox="0 0 14 15"><rect x="0.5" y="0.5" width="13" height="14" fill="#f4f6fa" stroke="#98a8c0"/><circle cx="3.5" cy="3.5" r="1.4" fill="#e06030"/><circle cx="3.5" cy="7.5" r="1.4" fill="#e0b030"/><circle cx="3.5" cy="11.5" r="1.4" fill="#5a8ad0"/><path d="M6 3.5 L11 3.5 M6 7.5 L11 7.5 M6 11.5 L11 11.5" stroke="#a0aabb" stroke-width="0.9"/></svg>
<div class="t" style="left:80.5px;top:482.86px;color:#222;font-size:10px;">*</div>
<div class="t" style="left:88.3px;top:482.86px;color:#222;font-size:10px;">Search/Match</div>
<svg class="r" style="left:76px;top:500px;" width="15" height="9" viewBox="0 0 15 9"><g fill="#6a1a8a"><rect x="1" y="5.5" width="2.4" height="3" rx="0.5"/><rect x="4" y="2.5" width="2.6" height="6" rx="0.5"/><rect x="7.2" y="0.5" width="2.6" height="8" rx="0.5"/><rect x="10.4" y="3" width="2.6" height="5.5" rx="0.5"/></g></svg>
<div class="t" style="left:96.8px;top:499.54px;color:#222;font-size:10px;">Peaks</div>
<svg class="r" style="left:76px;top:514px;" width="14" height="14" viewBox="0 0 14 14"><rect x="0.5" y="0.5" width="12.5" height="12.5" fill="#f4f6fa" stroke="#98a8c0"/><rect x="2" y="2.5" width="9.5" height="2" fill="#e86040"/><rect x="2" y="5.5" width="4" height="2" fill="#5a8ad0"/><rect x="2" y="8.5" width="7" height="2.2" fill="#e8a850"/></svg>
<div class="t" style="left:93.3px;top:516.21px;color:#222;font-size:10px;">*</div>
<div class="t" style="left:101.1px;top:516.21px;color:#222;font-size:10px;">Phases</div>
<div class="r" style="left:188px;top:135px;width:931px;height:670px;background:#efece7;border:1px solid #c8c5c0"></div><div class="r" style="left:189px;top:136px;width:929px;height:27px;background:#e6e0db;border-bottom:1px solid #c4c0bb"></div><div class="t" style="left:196.0px;top:144.94px;color:#9a9a9a;font-size:10px;">Chart</div><svg class="r" style="left:1101.5px;top:146px;" width="7" height="9" viewBox="0 0 7 9"><rect x="1" y="0" width="5" height="4.2" fill="#3a3a3a"/><rect x="1.6" y="0.6" width="1.6" height="3.4" fill="#999"/><rect x="0" y="4" width="7" height="1.3" fill="#333"/><rect x="3" y="5" width="1" height="2.6" fill="#444"/></svg>
<div class="r" style="left:189px;top:162px;width:929px;height:21px;background:#efece7"></div>
<div class="r" style="left:189px;top:183px;width:929px;height:621px;background:#fff"></div>
<svg class="r" style="left:196px;top:166px;" width="12" height="12" viewBox="0 0 12 12"><circle cx="6" cy="6" r="5.2" fill="#fff" stroke="#a8a8a8" stroke-width="0.9"/><circle cx="6" cy="6" r="3" fill="#333"/></svg>
<div class="t" style="left:211.7px;top:168.03px;color:#505050;font-size:10px;">Lin</div>
<svg class="r" style="left:226px;top:166px;" width="12" height="12" viewBox="0 0 12 12"><circle cx="6" cy="6" r="5.2" fill="#fff" stroke="#a8a8a8" stroke-width="0.9"/></svg>
<div class="t" style="left:241.5px;top:168.03px;color:#505050;font-size:10px;">Sqrt</div>
<svg class="r" style="left:262px;top:166px;" width="12" height="12" viewBox="0 0 12 12"><circle cx="6" cy="6" r="5.2" fill="#fff" stroke="#a8a8a8" stroke-width="0.9"/></svg>
<div class="t" style="left:277.0px;top:168.03px;color:#505050;font-size:10px;">Log</div>
<svg class="r" style="left:310px;top:166px;" width="12" height="12" viewBox="0 0 12 12"><circle cx="6" cy="6" r="5.2" fill="#fff" stroke="#a8a8a8" stroke-width="0.9"/><circle cx="6" cy="6" r="3" fill="#333"/></svg>
<div class="t" style="left:324.8px;top:168.03px;color:#505050;font-size:10px;">Cts</div>
<svg class="r" style="left:341px;top:166px;" width="12" height="12" viewBox="0 0 12 12"><circle cx="6" cy="6" r="5.2" fill="#fff" stroke="#a8a8a8" stroke-width="0.9"/></svg>
<div class="t" style="left:356.0px;top:168.03px;color:#505050;font-size:10px;">Cps</div>
<svg class="r" style="left:374px;top:166px;" width="12" height="12" viewBox="0 0 12 12"><circle cx="6" cy="6" r="5.2" fill="#fff" stroke="#a8a8a8" stroke-width="0.9"/></svg>
<div class="t" style="left:390.0px;top:168.03px;color:#505050;font-size:10px;">Rel</div>
<svg class="r" style="left:420px;top:166px;" width="12" height="12" viewBox="0 0 12 12"><circle cx="6" cy="6" r="5.2" fill="#fff" stroke="#a8a8a8" stroke-width="0.9"/><circle cx="6" cy="6" r="3" fill="#333"/></svg>
<div class="t" style="left:434.5px;top:168.03px;color:#505050;font-size:10px;">2θ</div>
<svg class="r" style="left:449px;top:166px;" width="12" height="12" viewBox="0 0 12 12"><circle cx="6" cy="6" r="5.2" fill="#fff" stroke="#a8a8a8" stroke-width="0.9"/></svg>
<div class="t" style="left:463.8px;top:168.03px;color:#505050;font-size:10px;">d</div>
<svg class="r" style="left:472px;top:166px;" width="12" height="12" viewBox="0 0 12 12"><circle cx="6" cy="6" r="5.2" fill="#fff" stroke="#a8a8a8" stroke-width="0.9"/></svg>
<div class="t" style="left:487.5px;top:168.03px;color:#505050;font-size:10px;">1/d</div>
<svg class="r" style="left:505px;top:166px;" width="12" height="12" viewBox="0 0 12 12"><circle cx="6" cy="6" r="5.2" fill="#fff" stroke="#a8a8a8" stroke-width="0.9"/></svg>
<div class="t" style="left:520.0px;top:168.03px;color:#505050;font-size:10px;">1/d<span style="font-size:7px;position:relative;top:-4px">2</span></div>
<svg class="r" style="left:554px;top:166px;" width="12" height="12" viewBox="0 0 12 12"><circle cx="6" cy="6" r="5.2" fill="#fff" stroke="#a8a8a8" stroke-width="0.9"/><circle cx="6" cy="6" r="3" fill="#333"/></svg>
<div class="t" style="left:569.5px;top:168.03px;color:#505050;font-size:10px;">Profile</div>
<svg class="r" style="left:601px;top:166px;" width="12" height="12" viewBox="0 0 12 12"><circle cx="6" cy="6" r="5.2" fill="#fff" stroke="#a8a8a8" stroke-width="0.9"/></svg>
<div class="t" style="left:615.8px;top:168.03px;color:#505050;font-size:10px;">Peaks</div>
<div class="r" style="left:651px;top:164px;width:60px;height:17px;background:#fff;border:1px solid #c9c6c2"></div><div class="t" style="left:581.0px;width:200px;text-align:center;top:167.53px;color:#505050;font-size:10px;">Snapshot</div>
<div class="r" style="left:714px;top:164px;width:73px;height:17px;background:#fff;border:1px solid #c9c6c2"></div><div class="t" style="left:650.5px;width:200px;text-align:center;top:167.53px;color:#505050;font-size:10px;">Export to XY</div>
<svg class="r" style="left:189px;top:183px" width="929" height="621" viewBox="0 0 929 621"><rect x="67.50" y="364.40" width="858.00" height="83.10" fill="#e5f3fd"/><rect x="67.50" y="198.20" width="858.00" height="83.10" fill="#e5f3fd"/><rect x="67.50" y="32.00" width="858.00" height="83.10" fill="#e5f3fd"/><line x1="66.50" y1="447.50" x2="925.50" y2="447.50" stroke="#dde3e8" stroke-width="1"/><line x1="66.50" y1="364.40" x2="925.50" y2="364.40" stroke="#dde3e8" stroke-width="1"/><line x1="66.50" y1="281.30" x2="925.50" y2="281.30" stroke="#dde3e8" stroke-width="1"/><line x1="66.50" y1="198.20" x2="925.50" y2="198.20" stroke="#dde3e8" stroke-width="1"/><line x1="66.50" y1="115.10" x2="925.50" y2="115.10" stroke="#dde3e8" stroke-width="1"/><line x1="66.50" y1="32.00" x2="925.50" y2="32.00" stroke="#dde3e8" stroke-width="1"/><line x1="76.50" y1="7.00" x2="76.50" y2="458.50" stroke="#dfe2e5" stroke-width="1"/><line x1="173.98" y1="7.00" x2="173.98" y2="458.50" stroke="#dfe2e5" stroke-width="1"/><line x1="271.45" y1="7.00" x2="271.45" y2="458.50" stroke="#dfe2e5" stroke-width="1"/><line x1="368.92" y1="7.00" x2="368.92" y2="458.50" stroke="#dfe2e5" stroke-width="1"/><line x1="466.40" y1="7.00" x2="466.40" y2="458.50" stroke="#dfe2e5" stroke-width="1"/><line x1="563.88" y1="7.00" x2="563.88" y2="458.50" stroke="#dfe2e5" stroke-width="1"/><line x1="661.35" y1="7.00" x2="661.35" y2="458.50" stroke="#dfe2e5" stroke-width="1"/><line x1="758.83" y1="7.00" x2="758.83" y2="458.50" stroke="#dfe2e5" stroke-width="1"/><line x1="856.30" y1="7.00" x2="856.30" y2="458.50" stroke="#dfe2e5" stroke-width="1"/><polyline points="105.00,436.06 105.25,436.06 105.50,436.06 105.75,436.05 106.00,436.05 106.25,436.05 106.50,436.05 106.75,436.04 107.00,436.04 107.25,436.03 107.50,436.03 107.75,436.03 108.00,436.02 108.25,436.02 108.50,436.01 108.75,436.01 109.00,436.00 109.25,436.00 109.50,435.99 109.75,435.98 110.00,435.98 110.25,435.97 110.50,435.97 110.75,435.96 111.00,435.95 111.25,435.95 111.50,435.94 111.75,435.93 112.00,435.92 112.25,435.91 112.50,435.91 112.75,435.90 113.00,435.89 113.25,435.88 113.50,435.87 113.75,435.86 114.00,435.85 114.25,435.84 114.50,435.83 114.75,435.82 115.00,435.81 115.25,435.80 115.50,435.79 115.75,435.78 116.00,435.76 116.25,435.75 116.50,435.74 116.75,435.73 117.00,435.71 117.25,435.70 117.50,435.69 117.75,435.67 118.00,435.66 118.25,435.65 118.50,435.63 118.75,435.62 119.00,435.60 119.25,435.59 119.50,435.57 119.75,435.55 120.00,435.54 120.25,435.52 120.50,435.50 120.75,435.49 121.00,435.47 121.25,435.45 121.50,435.43 121.75,435.42 122.00,435.40 122.25,435.38 122.50,435.36 122.75,435.34 123.00,435.32 123.25,435.30 123.50,435.28 123.75,435.26 124.00,435.24 124.25,435.22 124.50,435.20 124.75,435.18 125.00,435.16 125.25,435.14 125.50,435.12 125.75,435.10 126.00,435.08 126.25,435.06 126.50,435.03 126.75,435.01 127.00,434.99 127.25,434.97 127.50,434.95 127.75,434.92 128.00,434.90 128.25,434.88 128.50,434.86 128.75,434.84 129.00,434.81 129.25,434.79 129.50,434.77 129.75,434.75 130.00,434.72 130.25,434.70 130.50,434.68 130.75,434.66 131.00,434.63 131.25,434.61 131.50,434.59 131.75,434.57 132.00,434.54 132.25,434.52 132.50,434.50 132.75,434.48 133.00,434.46 133.25,434.44 133.50,434.41 133.75,434.39 134.00,434.37 134.25,434.35 134.50,434.33 134.75,434.31 135.00,434.29 135.25,434.27 135.50,434.25 135.75,434.23 136.00,434.22 136.25,434.20 136.50,434.18 136.75,434.16 137.00,434.14 137.25,434.13 137.50,434.11 137.75,434.10 138.00,434.08 138.25,434.06 138.50,434.05 138.75,434.04 139.00,434.02 139.25,434.01 139.50,433.99 139.75,433.98 140.00,433.97 140.25,433.96 140.50,433.95 140.75,433.94 141.00,433.93 141.25,433.92 141.50,433.91 141.75,433.90 142.00,433.89 142.25,433.89 142.50,433.88 142.75,433.87 143.00,433.87 143.25,433.86 143.50,433.86 143.75,433.85 144.00,433.85 144.25,433.85 144.50,433.85 144.75,433.85 145.00,433.84 145.25,433.84 145.50,433.85 145.75,433.85 146.00,433.85 146.25,433.85 146.50,433.85 146.75,433.86 147.00,433.86 147.25,433.87 147.50,433.87 147.75,433.88 148.00,433.89 148.25,433.89 148.50,433.90 148.75,433.91 149.00,433.92 149.25,433.93 149.50,433.94 149.75,433.95 150.00,433.96 150.25,433.97 150.50,433.99 150.75,434.00 151.00,434.01 151.25,434.03 151.50,434.04 151.75,434.06 152.00,434.07 152.25,434.09 152.50,434.11 152.75,434.12 153.00,434.14 153.25,434.16 153.50,434.18 153.75,434.20 154.00,434.22 154.25,434.24 154.50,434.26 154.75,434.28 155.00,434.30 155.25,434.32 155.50,434.34 155.75,434.37 156.00,434.39 156.25,434.41 156.50,434.43 156.75,434.46 157.00,434.48 157.25,434.51 157.50,434.53 157.75,434.55 158.00,434.58 158.25,434.60 158.50,434.63 158.75,434.65 159.00,434.68 159.25,434.71 159.50,434.73 159.75,434.76 160.00,434.78 160.25,434.81 160.50,434.84 160.75,434.86 161.00,434.89 161.25,434.92 161.50,434.94 161.75,434.97 162.00,435.00 162.25,435.02 162.50,435.05 162.75,435.08 163.00,435.10 163.25,435.13 163.50,435.16 163.75,435.19 164.00,435.21 164.25,435.24 164.50,435.26 164.75,435.29 165.00,435.32 165.25,435.34 165.50,435.37 165.75,435.40 166.00,435.42 166.25,435.45 166.50,435.47 166.75,435.50 167.00,435.52 167.25,435.55 167.50,435.57 167.75,435.60 168.00,435.62 168.25,435.65 168.50,435.67 168.75,435.69 169.00,435.72 169.25,435.74 169.50,435.76 169.75,435.79 170.00,435.81 170.25,435.83 170.50,435.86 170.75,435.88 171.00,435.90 171.25,435.92 171.50,435.94 171.75,435.96 172.00,435.98 172.25,436.00 172.50,436.02 172.75,436.04 173.00,436.06 173.25,436.08 173.50,436.10 173.75,436.12 174.00,436.14 174.25,436.16 174.50,436.19 174.75,436.21 175.00,436.23 175.25,436.25 175.50,436.27 175.75,436.29 176.00,436.31 176.25,436.34 176.50,436.36 176.75,436.38 177.00,436.40 177.25,436.42 177.50,436.43 177.75,436.45 178.00,436.47 178.25,436.49 178.50,436.51 178.75,436.53 179.00,436.55 179.25,436.56 179.50,436.58 179.75,436.60 180.00,436.61 180.25,436.63 180.50,436.65 180.75,436.66 181.00,436.68 181.25,436.70 181.50,436.71 181.75,436.73 182.00,436.74 182.25,436.76 182.50,436.77 182.75,436.78 183.00,436.80 183.25,436.81 183.50,436.83 183.75,436.84 184.00,436.85 184.25,436.87 184.50,436.88 184.75,436.89 185.00,436.91 185.25,436.92 185.50,436.93 185.75,436.94 186.00,436.95 186.25,436.97 186.50,436.98 186.75,436.99 187.00,437.00 187.25,437.01 187.50,437.02 187.75,437.03 188.00,437.05 188.25,437.06 188.50,437.07 188.75,437.08 189.00,437.09 189.25,437.10 189.50,437.11 189.75,437.12 190.00,437.13 190.25,437.14 190.50,437.15 190.75,437.16 191.00,437.17 191.25,437.18 191.50,437.19 191.75,437.19 192.00,437.20 192.25,437.21 192.50,437.22 192.75,437.23 193.00,437.24 193.25,437.25 193.50,437.26 193.75,437.27 194.00,437.27 194.25,437.28 194.50,437.29 194.75,437.30 195.00,437.31 195.25,437.32 195.50,437.32 195.75,437.33 196.00,437.34 196.25,437.35 196.50,437.36 196.75,437.36 197.00,437.37 197.25,437.38 197.50,437.39 197.75,437.39 198.00,437.40 198.25,437.41 198.50,437.42 198.75,437.42 199.00,437.43 199.25,437.44 199.50,437.45 199.75,437.45 200.00,437.46 200.25,437.47 200.50,437.48 200.75,437.48 201.00,437.49 201.25,437.50 201.50,437.50 201.75,437.51 202.00,437.52 202.25,437.53 202.50,437.53 202.75,437.54 203.00,437.55 203.25,437.55 203.50,437.56 203.75,437.57 204.00,437.58 204.25,437.58 204.50,437.59 204.75,437.60 205.00,437.60 205.25,437.61 205.50,437.62 205.75,437.62 206.00,437.63 206.25,437.64 206.50,437.64 206.75,437.65 207.00,437.66 207.25,437.66 207.50,437.67 207.75,437.68 208.00,437.68 208.25,437.69 208.50,437.70 208.75,437.70 209.00,437.71 209.25,437.72 209.50,437.72 209.75,437.73 210.00,437.74 210.25,437.74 210.50,437.75 210.75,437.76 211.00,437.76 211.25,437.77 211.50,437.78 211.75,437.78 212.00,437.79 212.25,437.80 212.50,437.80 212.75,437.81 213.00,437.82 213.25,437.82 213.50,437.83 213.75,437.84 214.00,437.84 214.25,437.85 214.50,437.86 214.75,437.86 215.00,437.87 215.25,437.88 215.50,437.88 215.75,437.89 216.00,437.90 216.25,437.90 216.50,437.91 216.75,437.92 217.00,437.92 217.25,437.93 217.50,437.94 217.75,437.94 218.00,437.95 218.25,437.96 218.50,437.96 218.75,437.97 219.00,437.97 219.25,437.98 219.50,437.99 219.75,437.99 220.00,438.00 220.25,438.01 220.50,438.01 220.75,438.02 221.00,438.03 221.25,438.03 221.50,438.04 221.75,438.05 222.00,438.05 222.25,438.06 222.50,438.07 222.75,438.07 223.00,438.08 223.25,438.08 223.50,438.09 223.75,438.10 224.00,438.10 224.25,438.11 224.50,438.12 224.75,438.12 225.00,438.13 225.25,438.14 225.50,438.14 225.75,438.15 226.00,438.16 226.25,438.16 226.50,438.17 226.75,438.17 227.00,438.18 227.25,438.19 227.50,438.19 227.75,438.20 228.00,438.21 228.25,438.21 228.50,438.22 228.75,438.23 229.00,438.23 229.25,438.24 229.50,438.25 229.75,438.25 230.00,438.26 230.25,438.26 230.50,438.27 230.75,438.28 231.00,438.28 231.25,438.29 231.50,438.30 231.75,438.30 232.00,438.31 232.25,438.31 232.50,438.32 232.75,438.33 233.00,438.33 233.25,438.34 233.50,438.35 233.75,438.35 234.00,438.36 234.25,438.37 234.50,438.37 234.75,438.38 235.00,438.38 235.25,438.39 235.50,438.40 235.75,438.40 236.00,438.41 236.25,438.41 236.50,438.42 236.75,438.43 237.00,438.43 237.25,438.44 237.50,438.45 237.75,438.45 238.00,438.46 238.25,438.46 238.50,438.47 238.75,438.48 239.00,438.48 239.25,438.49 239.50,438.49 239.75,438.50 240.00,438.51 240.25,438.51 240.50,438.52 240.75,438.53 241.00,438.53 241.25,438.54 241.50,438.54 241.75,438.55 242.00,438.56 242.25,438.56 242.50,438.57 242.75,438.57 243.00,438.58 243.25,438.59 243.50,438.59 243.75,438.60 244.00,438.60 244.25,438.61 244.50,438.61 244.75,438.62 245.00,438.63 245.25,438.63 245.50,438.64 245.75,438.64 246.00,438.65 246.25,438.66 246.50,438.66 246.75,438.67 247.00,438.67 247.25,438.68 247.50,438.68 247.75,438.69 248.00,438.70 248.25,438.70 248.50,438.71 248.75,438.71 249.00,438.72 249.25,438.72 249.50,438.73 249.75,438.73 250.00,438.74 250.25,438.75 250.50,438.75 250.75,438.76 251.00,438.76 251.25,438.77 251.50,438.77 251.75,438.78 252.00,438.78 252.25,438.79 252.50,438.79 252.75,438.80 253.00,438.80 253.25,438.81 253.50,438.81 253.75,438.82 254.00,438.82 254.25,438.83 254.50,438.83 254.75,438.84 255.00,438.84 255.25,438.85 255.50,438.85 255.75,438.86 256.00,438.86 256.25,438.87 256.50,438.87 256.75,438.88 257.00,438.88 257.25,438.88 257.50,438.89 257.75,438.89 258.00,438.90 258.25,438.90 258.50,438.90 258.75,438.91 259.00,438.91 259.25,438.92 259.50,438.92 259.75,438.92 260.00,438.93 260.25,438.93 260.50,438.93 260.75,438.94 261.00,438.94 261.25,438.94 261.50,438.95 261.75,438.95 262.00,438.95 262.25,438.95 262.50,438.96 262.75,438.96 263.00,438.96 263.25,438.96 263.50,438.96 263.75,438.97 264.00,438.97 264.25,438.97 264.50,438.97 264.75,438.97 265.00,438.97 265.25,438.97 265.50,438.97 265.75,438.97 266.00,438.97 266.25,438.97 266.50,438.97 266.75,438.97 267.00,438.96 267.25,438.96 267.50,438.96 267.75,438.96 268.00,438.95 268.25,438.95 268.50,438.94 268.75,438.94 269.00,438.93 269.25,438.93 269.50,438.92 269.75,438.91 270.00,438.90 270.25,438.89 270.50,438.88 270.75,438.87 271.00,438.86 271.25,438.84 271.50,438.83 271.75,438.81 272.00,438.79 272.25,438.77 272.50,438.75 272.75,438.72 273.00,438.69 273.25,438.66 273.50,438.62 273.75,438.58 274.00,438.53 274.25,438.48 274.50,438.42 274.75,438.36 275.00,438.28 275.25,438.19 275.50,438.09 275.75,437.97 276.00,437.82 276.25,437.65 276.50,437.45 276.75,437.20 277.00,436.89 277.25,436.49 277.50,435.95 277.75,435.13 278.00,433.72 278.25,431.09 278.50,426.15 278.75,417.51 279.00,404.17 279.25,386.58 279.50,367.83 279.75,354.19 279.90,351.58 280.00,352.73 280.25,364.34 280.50,382.58 280.75,400.66 281.00,414.88 281.25,424.32 281.50,429.80 281.75,432.70 282.00,434.19 282.25,434.99 282.50,435.46 282.75,435.76 283.00,435.96 283.25,436.08 283.50,436.14 283.75,436.14 284.00,436.11 284.25,436.02 284.50,435.90 284.75,435.73 285.00,435.52 285.25,435.26 285.50,434.95 285.75,434.57 286.00,434.11 286.25,433.57 286.50,432.92 286.75,432.14 287.00,431.19 287.25,430.03 287.50,428.55 287.75,426.62 288.00,423.93 288.25,419.89 288.50,413.49 288.75,403.10 289.00,386.57 289.25,361.61 289.50,326.74 289.75,282.60 290.00,233.36 290.25,188.28 290.50,161.41 290.60,158.79 290.75,164.59 291.00,196.22 291.25,243.06 291.50,291.73 291.75,334.08 292.00,366.76 292.25,389.66 292.50,404.51 292.75,413.62 293.00,419.07 293.25,422.35 293.50,424.39 293.75,425.73 294.00,426.63 294.25,427.27 294.50,427.74 294.75,428.11 295.00,428.46 295.25,428.82 295.50,429.23 295.75,429.70 296.00,430.25 296.25,430.86 296.50,431.53 296.75,432.21 297.00,432.90 297.25,433.56 297.50,434.19 297.75,434.76 298.00,435.26 298.25,435.69 298.50,436.05 298.75,436.33 299.00,436.56 299.25,436.72 299.50,436.85 299.75,436.94 300.00,437.00 300.25,437.06 300.50,437.12 300.75,437.18 301.00,437.25 301.25,437.34 301.50,437.44 301.75,437.56 302.00,437.70 302.25,437.85 302.50,438.01 302.75,438.17 303.00,438.33 303.25,438.49 303.50,438.65 303.75,438.80 304.00,438.94 304.25,439.08 304.50,439.20 304.75,439.30 305.00,439.40 305.25,439.49 305.50,439.56 305.75,439.63 306.00,439.69 306.25,439.74 306.50,439.78 306.75,439.82 307.00,439.86 307.25,439.89 307.50,439.92 307.75,439.94 308.00,439.97 308.25,439.99 308.50,440.01 308.75,440.03 309.00,440.05 309.25,440.07 309.50,440.09 309.75,440.10 310.00,440.12 310.25,440.13 310.50,440.15 310.75,440.16 311.00,440.18 311.25,440.19 311.50,440.21 311.75,440.22 312.00,440.23 312.25,440.25 312.50,440.26 312.75,440.27 313.00,440.28 313.25,440.29 313.50,440.31 313.75,440.32 314.00,440.33 314.25,440.34 314.50,440.35 314.75,440.36 315.00,440.37 315.25,440.38 315.50,440.38 315.75,440.39 316.00,440.40 316.25,440.41 316.50,440.42 316.75,440.42 317.00,440.43 317.25,440.44 317.50,440.44 317.75,440.45 318.00,440.45 318.25,440.46 318.50,440.46 318.75,440.46 319.00,440.47 319.25,440.47 319.50,440.47 319.75,440.47 320.00,440.46 320.25,440.46 320.50,440.45 320.75,440.45 321.00,440.44 321.25,440.42 321.50,440.41 321.75,440.39 322.00,440.36 322.25,440.33 322.50,440.28 322.75,440.23 323.00,440.16 323.25,440.07 323.50,439.95 323.75,439.75 324.00,439.34 324.25,438.38 324.50,436.00 324.75,430.78 325.00,421.17 325.25,406.96 325.50,390.95 325.75,379.17 325.90,376.94 326.00,377.95 326.25,388.03 326.50,403.75 326.75,418.67 327.00,429.26 327.25,435.26 327.50,438.07 327.75,439.23 328.00,439.71 328.25,439.93 328.50,440.07 328.75,440.16 329.00,440.23 329.25,440.28 329.50,440.32 329.75,440.34 330.00,440.35 330.25,440.36 330.50,440.36 330.75,440.34 331.00,440.32 331.25,440.30 331.50,440.26 331.75,440.20 332.00,440.14 332.25,440.06 332.50,439.96 332.75,439.83 333.00,439.67 333.25,439.47 333.50,439.21 333.75,438.88 334.00,438.44 334.25,437.84 334.50,436.99 334.75,435.64 335.00,432.63 335.25,422.86 335.50,390.99 335.75,311.88 336.00,180.08 336.25,54.88 336.40,28.16 336.50,40.32 336.75,151.31 337.00,289.01 337.25,379.78 337.50,419.06 337.75,431.61 338.00,435.36 338.25,436.90 338.50,437.84 338.75,438.50 339.00,438.98 339.25,439.35 339.50,439.64 339.75,439.87 340.00,440.05 340.25,440.21 340.50,440.33 340.75,440.43 341.00,440.52 341.25,440.59 341.50,440.64 341.75,440.68 342.00,440.70 342.25,440.68 342.50,440.61 342.75,440.48 343.00,440.26 343.25,439.93 343.50,439.49 343.75,438.94 344.00,438.33 344.25,437.70 344.50,437.16 344.75,436.79 345.00,436.66 345.25,436.82 345.50,437.23 345.75,437.81 346.00,438.46 346.25,439.12 346.50,439.70 346.75,440.18 347.00,440.55 347.25,440.81 347.50,440.98 347.75,441.10 348.00,441.17 348.25,441.21 348.50,441.23 348.75,441.24 349.00,441.24 349.25,441.24 349.50,441.23 349.75,441.21 350.00,441.17 350.25,441.10 350.50,440.98 350.75,440.77 351.00,440.44 351.25,439.92 351.50,439.14 351.75,438.04 352.00,436.57 352.25,434.72 352.50,432.54 352.75,430.18 353.00,427.82 353.25,425.75 353.50,424.26 353.75,423.60 353.80,423.58 354.00,423.90 354.25,425.11 354.50,427.00 354.75,429.29 355.00,431.70 355.25,433.99 355.50,436.00 355.75,437.65 356.00,438.92 356.25,439.83 356.50,440.47 356.75,440.89 357.00,441.16 357.25,441.33 357.50,441.44 357.75,441.52 358.00,441.57 358.25,441.61 358.50,441.64 358.75,441.67 359.00,441.69 359.25,441.71 359.50,441.74 359.75,441.75 360.00,441.77 360.25,441.79 360.50,441.80 360.75,441.82 361.00,441.83 361.25,441.84 361.50,441.85 361.75,441.86 362.00,441.87 362.25,441.88 362.50,441.89 362.75,441.90 363.00,441.91 363.25,441.91 363.50,441.92 363.75,441.93 364.00,441.94 364.25,441.94 364.50,441.95 364.75,441.96 365.00,441.96 365.25,441.97 365.50,441.97 365.75,441.98 366.00,441.99 366.25,441.99 366.50,442.00 366.75,442.00 367.00,442.01 367.25,442.01 367.50,442.02 367.75,442.02 368.00,442.03 368.25,442.03 368.50,442.04 368.75,442.04 369.00,442.05 369.25,442.05 369.50,442.06 369.75,442.06 370.00,442.06 370.25,442.07 370.50,442.07 370.75,442.08 371.00,442.08 371.25,442.08 371.50,442.09 371.75,442.09 372.00,442.09 372.25,442.10 372.50,442.10 372.75,442.10 373.00,442.10 373.25,442.11 373.50,442.11 373.75,442.11 374.00,442.11 374.25,442.11 374.50,442.11 374.75,442.11 375.00,442.11 375.25,442.11 375.50,442.11 375.75,442.11 376.00,442.11 376.25,442.10 376.50,442.10 376.75,442.09 377.00,442.08 377.25,442.07 377.50,442.06 377.75,442.05 378.00,442.03 378.25,442.01 378.50,441.98 378.75,441.93 379.00,441.87 379.25,441.76 379.50,441.58 379.75,441.29 380.00,440.83 380.25,440.13 380.50,439.10 380.75,437.69 381.00,435.85 381.25,433.60 381.50,431.03 381.75,428.33 382.00,425.76 382.25,423.64 382.50,422.30 382.70,421.96 382.75,421.98 383.00,422.74 383.25,424.44 383.50,426.78 383.75,429.45 384.00,432.14 384.25,434.60 384.50,436.71 384.75,438.38 385.00,439.64 385.25,440.54 385.50,441.14 385.75,441.53 386.00,441.78 386.25,441.94 386.50,442.04 386.75,442.11 387.00,442.15 387.25,442.19 387.50,442.22 387.75,442.24 388.00,442.27 388.25,442.29 388.50,442.30 388.75,442.32 389.00,442.33 389.25,442.35 389.50,442.36 389.75,442.37 390.00,442.38 390.25,442.39 390.50,442.40 390.75,442.41 391.00,442.42 391.25,442.43 391.50,442.44 391.75,442.45 392.00,442.46 392.25,442.46 392.50,442.47 392.75,442.48 393.00,442.49 393.25,442.49 393.50,442.50 393.75,442.50 394.00,442.51 394.25,442.52 394.50,442.52 394.75,442.53 395.00,442.53 395.25,442.54 395.50,442.55 395.75,442.55 396.00,442.56 396.25,442.56 396.50,442.57 396.75,442.57 397.00,442.58 397.25,442.58 397.50,442.59 397.75,442.59 398.00,442.60 398.25,442.60 398.50,442.61 398.75,442.61 399.00,442.62 399.25,442.62 399.50,442.63 399.75,442.63 400.00,442.63 400.25,442.64 400.50,442.64 400.75,442.65 401.00,442.65 401.25,442.66 401.50,442.66 401.75,442.67 402.00,442.67 402.25,442.67 402.50,442.68 402.75,442.68 403.00,442.69 403.25,442.69 403.50,442.69 403.75,442.70 404.00,442.70 404.25,442.70 404.50,442.71 404.75,442.71 405.00,442.71 405.25,442.72 405.50,442.72 405.75,442.72 406.00,442.73 406.25,442.73 406.50,442.73 406.75,442.74 407.00,442.74 407.25,442.74 407.50,442.74 407.75,442.74 408.00,442.75 408.25,442.75 408.50,442.75 408.75,442.75 409.00,442.75 409.25,442.75 409.50,442.75 409.75,442.75 410.00,442.75 410.25,442.75 410.50,442.75 410.75,442.75 411.00,442.75 411.25,442.75 411.50,442.74 411.75,442.74 412.00,442.73 412.25,442.73 412.50,442.72 412.75,442.71 413.00,442.70 413.25,442.69 413.50,442.68 413.75,442.66 414.00,442.64 414.25,442.62 414.50,442.59 414.75,442.56 415.00,442.52 415.25,442.48 415.50,442.42 415.75,442.35 416.00,442.26 416.25,442.15 416.50,442.01 416.75,441.82 417.00,441.54 417.25,441.00 417.50,439.73 417.75,436.59 418.00,429.50 418.25,415.91 418.50,394.87 418.75,369.68 419.00,348.96 419.20,342.82 419.25,343.22 419.50,356.00 419.75,379.81 420.00,404.10 420.25,422.27 420.50,432.99 420.75,438.20 421.00,440.40 421.25,441.29 421.50,441.70 421.75,441.94 422.00,442.10 422.25,442.23 422.50,442.33 422.75,442.40 423.00,442.46 423.25,442.51 423.50,442.55 423.75,442.57 424.00,442.59 424.25,442.60 424.50,442.60 424.75,442.60 425.00,442.58 425.25,442.55 425.50,442.51 425.75,442.43 426.00,442.27 426.25,441.95 426.50,441.27 426.75,439.91 427.00,437.44 427.25,433.48 427.50,427.95 427.75,421.42 428.00,415.21 428.25,411.12 428.40,410.38 428.50,410.71 428.75,414.15 429.00,420.09 429.25,426.67 429.50,432.45 429.75,436.72 430.00,439.44 430.25,440.96 430.50,441.69 430.75,441.98 431.00,441.98 431.25,441.62 431.50,440.52 431.75,438.01 432.00,433.34 432.25,426.40 432.50,418.58 432.75,412.83 432.90,411.75 433.00,412.25 433.25,417.22 433.50,424.95 433.75,432.28 434.00,437.50 434.25,440.45 434.50,441.85 434.75,442.43 435.00,442.68 435.25,442.80 435.50,442.88 435.75,442.94 436.00,442.98 436.25,443.02 436.50,443.05 436.75,443.08 437.00,443.10 437.25,443.12 437.50,443.13 437.75,443.15 438.00,443.16 438.25,443.17 438.50,443.18 438.75,443.18 439.00,443.19 439.25,443.19 439.50,443.19 439.75,443.19 440.00,443.19 440.25,443.19 440.50,443.18 440.75,443.17 441.00,443.16 441.25,443.14 441.50,443.11 441.75,443.08 442.00,443.04 442.25,442.99 442.50,442.92 442.75,442.81 443.00,442.61 443.25,442.15 443.50,441.01 443.75,438.36 444.00,433.07 444.25,424.50 444.50,413.64 444.75,403.83 445.00,399.74 445.25,403.84 445.50,413.66 445.75,424.54 446.00,433.12 446.25,438.41 446.50,441.08 446.75,442.23 447.00,442.70 447.25,442.91 447.50,443.03 447.75,443.11 448.00,443.18 448.25,443.23 448.50,443.27 448.75,443.31 449.00,443.34 449.25,443.36 449.50,443.38 449.75,443.40 450.00,443.42 450.25,443.44 450.50,443.45 450.75,443.46 451.00,443.47 451.25,443.48 451.50,443.49 451.75,443.50 452.00,443.51 452.25,443.52 452.50,443.53 452.75,443.53 453.00,443.54 453.25,443.54 453.50,443.55 453.75,443.55 454.00,443.56 454.25,443.56 454.50,443.57 454.75,443.57 455.00,443.57 455.25,443.57 455.50,443.57 455.75,443.57 456.00,443.57 456.25,443.57 456.50,443.57 456.75,443.57 457.00,443.56 457.25,443.55 457.50,443.54 457.75,443.53 458.00,443.51 458.25,443.49 458.50,443.46 458.75,443.42 459.00,443.37 459.25,443.29 459.50,443.15 459.75,442.82 460.00,442.00 460.25,440.08 460.50,436.28 460.75,430.10 461.00,422.27 461.25,415.20 461.50,412.24 461.75,415.20 462.00,422.27 462.25,430.11 462.50,436.29 462.75,440.10 463.00,442.02 463.25,442.84 463.50,443.17 463.75,443.32 464.00,443.40 464.25,443.46 464.50,443.50 464.75,443.53 465.00,443.55 465.25,443.57 465.50,443.58 465.75,443.59 466.00,443.59 466.25,443.59 466.50,443.58 466.75,443.57 467.00,443.55 467.25,443.52 467.50,443.44 467.75,443.24 468.00,442.74 468.25,441.65 468.50,439.63 468.75,436.64 469.00,433.27 469.25,430.80 469.40,430.33 469.50,430.54 469.75,432.67 470.00,435.98 470.25,439.12 470.50,441.35 470.75,442.62 471.00,443.21 471.25,443.46 471.50,443.56 471.75,443.61 472.00,443.64 472.25,443.67 472.50,443.68 472.75,443.70 473.00,443.71 473.25,443.72 473.50,443.73 473.75,443.74 474.00,443.74 474.25,443.75 474.50,443.75 474.75,443.76 475.00,443.76 475.25,443.76 475.50,443.77 475.75,443.77 476.00,443.77 476.25,443.77 476.50,443.78 476.75,443.78 477.00,443.78 477.25,443.78 477.50,443.78 477.75,443.78 478.00,443.78 478.25,443.79 478.50,443.79 478.75,443.79 479.00,443.79 479.25,443.79 479.50,443.79 479.75,443.79 480.00,443.79 480.25,443.79 480.50,443.79 480.75,443.79 481.00,443.79 481.25,443.79 481.50,443.79 481.75,443.79 482.00,443.79 482.25,443.78 482.50,443.78 482.75,443.78 483.00,443.78 483.25,443.78 483.50,443.78 483.75,443.77 484.00,443.77 484.25,443.77 484.50,443.76 484.75,443.76 485.00,443.76 485.25,443.75 485.50,443.74 485.75,443.74 486.00,443.73 486.25,443.72 486.50,443.71 486.75,443.69 487.00,443.68 487.25,443.66 487.50,443.63 487.75,443.60 488.00,443.56 488.25,443.51 488.50,443.41 488.75,443.19 489.00,442.65 489.25,441.42 489.50,438.97 489.75,435.00 490.00,429.97 490.25,425.42 490.50,423.52 490.75,425.40 491.00,429.91 491.25,434.91 491.50,438.84 491.75,441.22 492.00,442.33 492.25,442.63 492.50,442.42 492.75,441.79 493.00,440.79 493.25,439.48 493.50,438.11 493.75,437.02 494.00,436.59 494.25,437.00 494.50,438.07 494.75,439.43 495.00,440.72 495.25,441.72 495.50,442.37 495.75,442.72 496.00,442.86 496.25,442.86 496.50,442.78 496.75,442.62 497.00,442.38 497.25,441.94 497.50,440.98 497.75,438.59 498.00,432.89 498.25,421.15 498.50,401.25 498.75,374.64 499.00,348.56 499.25,334.56 499.30,334.13 499.50,340.86 499.75,363.56 500.00,391.17 500.25,414.23 500.50,429.12 500.75,436.90 501.00,440.34 501.25,441.73 501.50,442.33 501.75,442.65 502.00,442.86 502.25,443.02 502.50,443.14 502.75,443.24 503.00,443.32 503.25,443.39 503.50,443.45 503.75,443.49 504.00,443.53 504.25,443.57 504.50,443.60 504.75,443.62 505.00,443.64 505.25,443.66 505.50,443.68 505.75,443.69 506.00,443.71 506.25,443.72 506.50,443.73 506.75,443.73 507.00,443.74 507.25,443.75 507.50,443.75 507.75,443.75 508.00,443.76 508.25,443.75 508.50,443.75 508.75,443.74 509.00,443.73 509.25,443.71 509.50,443.66 509.75,443.60 510.00,443.49 510.25,443.34 510.50,443.12 510.75,442.81 511.00,442.42 511.25,441.94 511.50,441.38 511.75,440.78 512.00,440.18 512.25,439.63 512.50,439.21 512.75,438.96 512.90,438.92 513.00,438.94 513.25,439.15 513.50,439.54 513.75,440.07 514.00,440.68 514.25,441.29 514.50,441.86 514.75,442.36 515.00,442.77 515.25,443.10 515.50,443.34 515.75,443.51 516.00,443.63 516.25,443.71 516.50,443.76 516.75,443.79 517.00,443.81 517.25,443.82 517.50,443.83 517.75,443.84 518.00,443.84 518.25,443.84 518.50,443.84 518.75,443.84 519.00,443.84 519.25,443.84 519.50,443.83 519.75,443.83 520.00,443.82 520.25,443.80 520.50,443.78 520.75,443.75 521.00,443.70 521.25,443.57 521.50,443.26 521.75,442.53 522.00,441.08 522.25,438.73 522.50,435.75 522.75,433.05 523.00,431.93 523.25,433.05 523.50,435.75 523.75,438.73 524.00,441.09 524.25,442.54 524.50,443.27 524.75,443.58 525.00,443.71 525.25,443.77 525.50,443.80 525.75,443.82 526.00,443.83 526.25,443.84 526.50,443.85 526.75,443.86 527.00,443.86 527.25,443.87 527.50,443.87 527.75,443.87 528.00,443.87 528.25,443.87 528.50,443.86 528.75,443.86 529.00,443.85 529.25,443.84 529.50,443.83 529.75,443.80 530.00,443.77 530.25,443.72 530.50,443.65 530.75,443.55 531.00,443.39 531.25,443.17 531.50,442.88 531.75,442.49 532.00,441.99 532.25,441.39 532.50,440.68 532.75,439.89 533.00,439.05 533.25,438.21 533.50,437.44 533.75,436.80 534.00,436.35 534.25,436.16 534.30,436.16 534.50,436.25 534.75,436.60 535.00,437.17 535.25,437.90 535.50,438.72 535.75,439.56 536.00,440.38 536.25,441.13 536.50,441.78 536.75,442.32 537.00,442.75 537.25,443.09 537.50,443.33 537.75,443.51 538.00,443.64 538.25,443.72 538.50,443.78 538.75,443.82 539.00,443.85 539.25,443.87 539.50,443.88 539.75,443.89 540.00,443.90 540.25,443.91 540.50,443.91 540.75,443.92 541.00,443.92 541.25,443.93 541.50,443.93 541.75,443.93 542.00,443.93 542.25,443.93 542.50,443.93 542.75,443.93 543.00,443.93 543.25,443.93 543.50,443.93 543.75,443.92 544.00,443.92 544.25,443.92 544.50,443.91 544.75,443.90 545.00,443.89 545.25,443.88 545.50,443.86 545.75,443.83 546.00,443.79 546.25,443.72 546.50,443.63 546.75,443.49 547.00,443.29 547.25,443.02 547.50,442.65 547.75,442.17 548.00,441.57 548.25,440.85 548.50,440.03 548.75,439.13 549.00,438.19 549.25,437.28 549.50,436.47 549.75,435.84 550.00,435.45 550.20,435.36 550.25,435.36 550.50,435.58 550.75,436.07 551.00,436.78 551.25,437.64 551.50,438.57 551.75,439.50 552.00,440.38 552.25,441.17 552.50,441.84 552.75,442.39 553.00,442.83 553.25,443.16 553.50,443.40 553.75,443.57 554.00,443.69 554.25,443.77 554.50,443.83 554.75,443.87 555.00,443.89 555.25,443.91 555.50,443.92 555.75,443.93 556.00,443.94 556.25,443.95 556.50,443.95 556.75,443.96 557.00,443.96 557.25,443.96 557.50,443.97 557.75,443.97 558.00,443.97 558.25,443.97 558.50,443.97 558.75,443.96 559.00,443.96 559.25,443.96 559.50,443.95 559.75,443.95 560.00,443.94 560.25,443.93 560.50,443.92 560.75,443.91 561.00,443.89 561.25,443.87 561.50,443.85 561.75,443.83 562.00,443.79 562.25,443.75 562.50,443.70 562.75,443.63 563.00,443.55 563.25,443.42 563.50,443.18 563.75,442.66 564.00,441.35 564.25,438.32 564.50,432.29 564.75,422.51 565.00,410.12 565.25,398.93 565.50,394.26 565.75,398.94 566.00,410.13 566.25,422.52 566.50,432.30 566.75,438.33 567.00,441.36 567.25,442.67 567.50,443.20 567.75,443.44 568.00,443.57 568.25,443.66 568.50,443.73 568.75,443.78 569.00,443.83 569.25,443.86 569.50,443.89 569.75,443.92 570.00,443.94 570.25,443.96 570.50,443.97 570.75,443.98 571.00,444.00 571.25,444.01 571.50,444.02 571.75,444.02 572.00,444.03 572.25,444.04 572.50,444.04 572.75,444.05 573.00,444.05 573.25,444.06 573.50,444.06 573.75,444.07 574.00,444.07 574.25,444.07 574.50,444.07 574.75,444.08 575.00,444.08 575.25,444.08 575.50,444.08 575.75,444.09 576.00,444.09 576.25,444.09 576.50,444.09 576.75,444.09 577.00,444.09 577.25,444.09 577.50,444.09 577.75,444.09 578.00,444.09 578.25,444.09 578.50,444.09 578.75,444.09 579.00,444.09 579.25,444.09 579.50,444.09 579.75,444.09 580.00,444.09 580.25,444.09 580.50,444.08 580.75,444.08 581.00,444.08 581.25,444.08 581.50,444.07 581.75,444.07 582.00,444.06 582.25,444.06 582.50,444.05 582.75,444.05 583.00,444.04 583.25,444.03 583.50,444.02 583.75,444.01 584.00,443.99 584.25,443.97 584.50,443.96 584.75,443.93 585.00,443.90 585.25,443.87 585.50,443.83 585.75,443.78 586.00,443.72 586.25,443.64 586.50,443.52 586.75,443.31 587.00,442.89 587.25,441.95 587.50,439.90 587.75,435.92 588.00,429.25 588.25,419.87 588.50,409.23 588.75,400.33 589.00,396.77 589.25,400.33 589.50,409.23 589.75,419.87 590.00,429.25 590.25,435.93 590.50,439.91 590.75,441.96 591.00,442.90 591.25,443.33 591.50,443.53 591.75,443.65 592.00,443.74 592.25,443.80 592.50,443.85 592.75,443.89 593.00,443.93 593.25,443.96 593.50,443.98 593.75,444.00 594.00,444.02 594.25,444.03 594.50,444.05 594.75,444.06 595.00,444.07 595.25,444.08 595.50,444.09 595.75,444.09 596.00,444.10 596.25,444.10 596.50,444.11 596.75,444.11 597.00,444.12 597.25,444.12 597.50,444.12 597.75,444.12 598.00,444.12 598.25,444.13 598.50,444.12 598.75,444.12 599.00,444.12 599.25,444.12 599.50,444.11 599.75,444.10 600.00,444.08 600.25,444.06 600.50,444.01 600.75,443.94 601.00,443.84 601.25,443.69 601.50,443.48 601.75,443.22 602.00,442.88 602.25,442.49 602.50,442.07 602.75,441.63 603.00,441.23 603.25,440.90 603.50,440.70 603.70,440.65 603.75,440.65 604.00,440.76 604.25,441.02 604.50,441.38 604.75,441.81 605.00,442.24 605.25,442.66 605.50,443.03 605.75,443.34 606.00,443.58 606.25,443.76 606.50,443.89 606.75,443.98 607.00,444.04 607.25,444.08 607.50,444.10 607.75,444.11 608.00,444.11 608.25,444.11 608.50,444.11 608.75,444.10 609.00,444.09 609.25,444.07 609.50,444.05 609.75,444.01 610.00,443.92 610.25,443.70 610.50,443.07 610.75,441.57 611.00,438.74 611.25,434.82 611.50,431.25 611.70,430.13 611.75,430.21 612.00,432.49 612.25,436.46 612.50,440.04 612.75,442.31 613.00,443.39 613.25,443.81 613.50,443.96 613.75,444.01 614.00,444.03 614.25,444.03 614.50,443.98 614.75,443.80 615.00,443.33 615.25,442.38 615.50,440.97 615.75,439.54 616.00,438.91 616.25,439.55 616.50,440.99 616.75,442.41 617.00,443.38 617.25,443.86 617.50,444.06 617.75,444.13 618.00,444.16 618.25,444.17 618.50,444.18 618.75,444.19 619.00,444.20 619.25,444.20 619.50,444.21 619.75,444.21 620.00,444.21 620.25,444.22 620.50,444.22 620.75,444.22 621.00,444.22 621.25,444.22 621.50,444.22 621.75,444.22 622.00,444.22 622.25,444.22 622.50,444.22 622.75,444.22 623.00,444.22 623.25,444.22 623.50,444.22 623.75,444.22 624.00,444.22 624.25,444.21 624.50,444.21 624.75,444.21 625.00,444.21 625.25,444.20 625.50,444.20 625.75,444.20 626.00,444.19 626.25,444.19 626.50,444.18 626.75,444.18 627.00,444.17 627.25,444.16 627.50,444.15 627.75,444.14 628.00,444.13 628.25,444.12 628.50,444.11 628.75,444.09 629.00,444.06 629.25,444.02 629.50,443.97 629.75,443.90 630.00,443.79 630.25,443.64 630.50,443.42 630.75,443.13 631.00,442.75 631.25,442.26 631.50,441.67 631.75,440.99 632.00,440.25 632.25,439.49 632.50,438.76 632.75,438.14 633.00,437.68 633.25,437.44 633.30,437.42 633.50,437.45 633.75,437.67 634.00,438.08 634.25,438.59 634.50,439.11 634.75,439.52 635.00,439.60 635.25,438.87 635.50,436.41 635.75,430.75 636.00,420.23 636.25,404.07 636.50,383.85 636.75,364.33 637.00,352.52 637.10,351.39 637.25,354.00 637.50,368.04 637.75,388.37 638.00,408.25 638.25,423.57 638.50,433.35 638.75,438.66 639.00,441.21 639.25,442.36 639.50,442.89 639.75,443.18 640.00,443.36 640.25,443.51 640.50,443.62 640.75,443.71 641.00,443.78 641.25,443.85 641.50,443.90 641.75,443.94 642.00,443.98 642.25,444.02 642.50,444.05 642.75,444.07 643.00,444.10 643.25,444.12 643.50,444.13 643.75,444.15 644.00,444.16 644.25,444.18 644.50,444.19 644.75,444.20 645.00,444.21 645.25,444.22 645.50,444.23 645.75,444.24 646.00,444.24 646.25,444.25 646.50,444.26 646.75,444.26 647.00,444.27 647.25,444.27 647.50,444.28 647.75,444.28 648.00,444.28 648.25,444.29 648.50,444.29 648.75,444.29 649.00,444.30 649.25,444.30 649.50,444.30 649.75,444.31 650.00,444.31 650.25,444.31 650.50,444.31 650.75,444.31 651.00,444.31 651.25,444.32 651.50,444.32 651.75,444.32 652.00,444.32 652.25,444.32 652.50,444.32 652.75,444.32 653.00,444.32 653.25,444.32 653.50,444.31 653.75,444.31 654.00,444.31 654.25,444.31 654.50,444.31 654.75,444.30 655.00,444.30 655.25,444.30 655.50,444.29 655.75,444.29 656.00,444.28 656.25,444.27 656.50,444.26 656.75,444.25 657.00,444.24 657.25,444.22 657.50,444.20 657.75,444.18 658.00,444.15 658.25,444.11 658.50,444.06 658.75,443.99 659.00,443.88 659.25,443.65 659.50,443.09 659.75,441.73 660.00,438.84 660.25,433.74 660.50,426.55 660.75,418.98 661.00,414.12 661.10,413.63 661.25,414.71 661.50,420.37 661.75,428.07 662.00,434.89 662.25,439.49 662.50,441.95 662.75,443.00 663.00,443.33 663.25,443.34 663.50,443.18 663.75,442.94 664.00,442.65 664.25,442.34 664.50,442.06 664.75,441.88 665.00,441.82 665.25,441.91 665.50,442.14 665.75,442.45 666.00,442.80 666.25,443.15 666.50,443.46 666.75,443.72 667.00,443.92 667.25,444.06 667.50,444.15 667.75,444.21 668.00,444.25 668.25,444.27 668.50,444.28 668.75,444.28 669.00,444.29 669.25,444.28 669.50,444.28 669.75,444.27 670.00,444.25 670.25,444.20 670.50,444.08 670.75,443.81 671.00,443.27 671.25,442.39 671.50,441.28 671.75,440.27 672.00,439.83 672.25,440.20 672.50,441.07 672.75,441.88 673.00,442.12 673.25,441.54 673.50,440.23 673.75,438.69 674.00,437.67 674.10,437.57 674.25,437.82 674.50,439.07 674.75,440.77 675.00,442.28 675.25,443.30 675.50,443.85 675.75,444.11 676.00,444.21 676.25,444.25 676.50,444.27 676.75,444.28 677.00,444.28 677.25,444.27 677.50,444.25 677.75,444.22 678.00,444.17 678.25,444.08 678.50,443.95 678.75,443.77 679.00,443.52 679.25,443.21 679.50,442.82 679.75,442.38 680.00,441.91 680.25,441.45 680.50,441.04 680.75,440.73 681.00,440.58 681.10,440.56 681.25,440.60 681.50,440.79 681.75,441.12 682.00,441.55 682.25,442.02 682.50,442.49 682.75,442.92 683.00,443.30 683.25,443.61 683.50,443.85 683.75,444.02 684.00,444.15 684.25,444.23 684.50,444.29 684.75,444.32 685.00,444.35 685.25,444.36 685.50,444.37 685.75,444.38 686.00,444.39 686.25,444.39 686.50,444.40 686.75,444.40 687.00,444.40 687.25,444.41 687.50,444.41 687.75,444.41 688.00,444.41 688.25,444.42 688.50,444.42 688.75,444.42 689.00,444.42 689.25,444.42 689.50,444.42 689.75,444.42 690.00,444.43 690.25,444.43 690.50,444.43 690.75,444.43 691.00,444.43 691.25,444.43 691.50,444.43 691.75,444.43 692.00,444.43 692.25,444.43 692.50,444.43 692.75,444.43 693.00,444.43 693.25,444.43 693.50,444.43 693.75,444.43 694.00,444.43 694.25,444.43 694.50,444.43 694.75,444.43 695.00,444.43 695.25,444.43 695.50,444.43 695.75,444.43 696.00,444.43 696.25,444.43 696.50,444.43 696.75,444.42 697.00,444.42 697.25,444.42 697.50,444.41 697.75,444.41 698.00,444.40 698.25,444.39 698.50,444.38 698.75,444.36 699.00,444.33 699.25,444.24 699.50,444.02 699.75,443.55 700.00,442.68 700.25,441.39 700.50,439.94 700.75,438.87 700.90,438.67 701.00,438.76 701.25,439.67 701.50,441.10 701.75,442.45 702.00,443.41 702.25,443.95 702.50,444.21 702.75,444.31 703.00,444.36 703.25,444.38 703.50,444.39 703.75,444.40 704.00,444.40 704.25,444.41 704.50,444.41 704.75,444.41 705.00,444.41 705.25,444.41 705.50,444.41 705.75,444.41 706.00,444.41 706.25,444.40 706.50,444.40 706.75,444.39 707.00,444.38 707.25,444.36 707.50,444.33 707.75,444.28 708.00,444.20 708.25,444.09 708.50,443.93 708.75,443.71 709.00,443.43 709.25,443.09 709.50,442.70 709.75,442.27 710.00,441.84 710.25,441.45 710.50,441.15 710.75,440.98 710.90,440.95 711.00,440.96 711.25,441.10 711.50,441.38 711.75,441.75 712.00,442.17 712.25,442.60 712.50,443.00 712.75,443.35 713.00,443.64 713.25,443.86 713.50,444.02 713.75,444.13 714.00,444.19 714.25,444.20 714.50,444.18 714.75,444.11 715.00,443.98 715.25,443.79 715.50,443.53 715.75,443.22 716.00,442.87 716.25,442.51 716.50,442.20 716.75,441.98 717.00,441.90 717.25,441.98 717.50,442.20 717.75,442.51 718.00,442.86 718.25,443.21 718.50,443.53 718.75,443.79 719.00,443.98 719.25,444.11 719.50,444.20 719.75,444.25 720.00,444.28 720.25,444.29 720.50,444.29 720.75,444.29 721.00,444.27 721.25,444.25 721.50,444.23 721.75,444.20 722.00,444.16 722.25,444.11 722.50,444.04 722.75,443.93 723.00,443.71 723.25,443.23 723.50,442.16 723.75,439.98 724.00,436.07 724.25,430.17 724.50,422.82 724.75,415.75 725.00,411.46 725.10,411.05 725.25,411.98 725.50,417.02 725.75,424.34 726.00,431.50 726.25,437.01 726.50,440.53 726.75,442.45 727.00,443.36 727.25,443.77 727.50,443.96 727.75,444.06 728.00,444.13 728.25,444.17 728.50,444.21 728.75,444.24 729.00,444.27 729.25,444.29 729.50,444.30 729.75,444.31 730.00,444.32 730.25,444.33 730.50,444.34 730.75,444.34 731.00,444.35 731.25,444.35 731.50,444.35 731.75,444.35 732.00,444.35 732.25,444.34 732.50,444.34 732.75,444.33 733.00,444.32 733.25,444.31 733.50,444.29 733.75,444.28 734.00,444.26 734.25,444.23 734.50,444.19 734.75,444.14 735.00,444.06 735.25,443.87 735.50,443.36 735.75,442.06 736.00,439.36 736.25,435.09 736.50,430.38 736.75,427.65 736.80,427.56 737.00,428.85 737.25,433.03 737.50,437.63 737.75,440.92 738.00,442.63 738.25,443.29 738.50,443.45 738.75,443.40 739.00,443.20 739.25,442.75 739.50,441.77 739.75,439.74 740.00,435.90 740.25,429.40 740.50,419.80 740.75,407.63 741.00,394.89 741.25,384.83 741.50,380.94 741.75,384.84 742.00,394.91 742.25,407.66 742.50,419.84 742.75,429.46 743.00,435.97 743.25,439.83 743.50,441.88 743.75,442.88 744.00,443.37 744.25,443.63 744.50,443.78 744.75,443.89 745.00,443.98 745.25,444.04 745.50,444.10 745.75,444.15 746.00,444.19 746.25,444.22 746.50,444.25 746.75,444.28 747.00,444.30 747.25,444.32 747.50,444.34 747.75,444.35 748.00,444.37 748.25,444.38 748.50,444.39 748.75,444.40 749.00,444.40 749.25,444.41 749.50,444.42 749.75,444.42 750.00,444.43 750.25,444.43 750.50,444.43 750.75,444.42 751.00,444.42 751.25,444.40 751.50,444.38 751.75,444.34 752.00,444.29 752.25,444.21 752.50,444.11 752.75,443.99 753.00,443.84 753.25,443.68 753.50,443.50 753.75,443.32 754.00,443.16 754.25,443.03 754.50,442.96 754.70,442.94 754.75,442.94 755.00,442.98 755.25,443.09 755.50,443.23 755.75,443.40 756.00,443.58 756.25,443.76 756.50,443.93 756.75,444.07 757.00,444.18 757.25,444.28 757.50,444.34 757.75,444.39 758.00,444.43 758.25,444.45 758.50,444.46 758.75,444.47 759.00,444.47 759.25,444.46 759.50,444.44 759.75,444.41 760.00,444.36 760.25,444.29 760.50,444.20 760.75,444.07 761.00,443.91 761.25,443.72 761.50,443.50 761.75,443.26 762.00,443.03 762.25,442.81 762.50,442.63 762.75,442.51 763.00,442.47 763.25,442.51 763.50,442.63 763.75,442.81 764.00,443.04 764.25,443.28 764.50,443.51 764.75,443.74 765.00,443.93 765.25,444.09 765.50,444.22 765.75,444.32 766.00,444.39 766.25,444.44 766.50,444.48 766.75,444.50 767.00,444.52 767.25,444.53 767.50,444.54 767.75,444.54 768.00,444.55 768.25,444.55 768.50,444.55 768.75,444.56 769.00,444.56 769.25,444.56 769.50,444.56 769.75,444.56 770.00,444.57 770.25,444.57 770.50,444.57 770.75,444.57 771.00,444.57 771.25,444.57 771.50,444.57 771.75,444.57 772.00,444.57 772.25,444.58 772.50,444.58 772.75,444.58 773.00,444.58 773.25,444.58 773.50,444.58 773.75,444.58 774.00,444.58 774.25,444.58 774.50,444.58 774.75,444.58 775.00,444.58 775.25,444.58 775.50,444.58 775.75,444.58 776.00,444.58 776.25,444.58 776.50,444.58 776.75,444.58 777.00,444.58 777.25,444.58 777.50,444.58 777.75,444.58 778.00,444.58 778.25,444.58 778.50,444.58 778.75,444.58 779.00,444.58 779.25,444.58 779.50,444.58 779.75,444.57 780.00,444.57 780.25,444.57 780.50,444.56 780.75,444.55 781.00,444.54 781.25,444.52 781.50,444.48 781.75,444.44 782.00,444.37 782.25,444.27 782.50,444.15 782.75,443.99 783.00,443.80 783.25,443.58 783.50,443.34 783.75,443.10 784.00,442.87 784.25,442.67 784.50,442.54 784.75,442.48 784.80,442.48 785.00,442.51 785.25,442.61 785.50,442.79 785.75,443.00 786.00,443.25 786.25,443.49 786.50,443.72 786.75,443.92 787.00,444.09 787.25,444.23 787.50,444.33 787.75,444.41 788.00,444.46 788.25,444.50 788.50,444.52 788.75,444.53 789.00,444.54 789.25,444.55 789.50,444.55 789.75,444.54 790.00,444.54 790.25,444.53 790.50,444.52 790.75,444.50 791.00,444.46 791.25,444.36 791.50,444.11 791.75,443.57 792.00,442.57 792.25,441.09 792.50,439.42 792.75,438.19 792.90,437.96 793.00,438.07 793.25,439.12 793.50,440.75 793.75,442.30 794.00,443.41 794.25,444.03 794.50,444.32 794.75,444.44 795.00,444.48 795.25,444.50 795.50,444.50 795.75,444.49 796.00,444.46 796.25,444.41 796.50,444.33 796.75,444.22 797.00,444.05 797.25,443.82 797.50,443.54 797.75,443.22 798.00,442.87 798.25,442.53 798.50,442.24 798.75,442.04 799.00,441.97 799.25,442.05 799.50,442.24 799.75,442.54 800.00,442.88 800.25,443.23 800.50,443.56 800.75,443.84 801.00,444.07 801.25,444.25 801.50,444.37 801.75,444.46 802.00,444.52 802.25,444.55 802.50,444.57 802.75,444.59 803.00,444.60 803.25,444.60 803.50,444.61 803.75,444.61 804.00,444.61 804.25,444.62 804.50,444.62 804.75,444.62 805.00,444.62 805.25,444.63 805.50,444.63 805.75,444.63 806.00,444.63 806.25,444.63 806.50,444.63 806.75,444.63 807.00,444.63 807.25,444.63 807.50,444.63 807.75,444.63 808.00,444.63 808.25,444.63 808.50,444.63 808.75,444.63 809.00,444.63 809.25,444.63 809.50,444.63 809.75,444.63 810.00,444.62 810.25,444.62 810.50,444.62 810.75,444.61 811.00,444.61 811.25,444.60 811.50,444.59 811.75,444.58 812.00,444.56 812.25,444.54 812.50,444.47 812.75,444.31 813.00,443.94 813.25,443.17 813.50,441.87 813.75,440.13 814.00,438.42 814.25,437.51 814.30,437.48 814.50,437.92 814.75,439.41 815.00,441.21 815.25,442.72 815.50,443.69 815.75,444.20 816.00,444.43 816.25,444.52 816.50,444.56 816.75,444.58 817.00,444.59 817.25,444.60 817.50,444.61 817.75,444.62 818.00,444.62 818.25,444.62 818.50,444.63 818.75,444.63 819.00,444.63 819.25,444.63 819.50,444.63 819.75,444.63 820.00,444.63 820.25,444.63 820.50,444.63 820.75,444.63 821.00,444.63 821.25,444.62 821.50,444.62 821.75,444.61 822.00,444.61 822.25,444.60 822.50,444.59 822.75,444.58 823.00,444.57 823.25,444.55 823.50,444.52 823.75,444.49 824.00,444.43 824.25,444.29 824.50,443.94 824.75,443.12 825.00,441.51 825.25,438.90 825.50,435.59 825.75,432.61 826.00,431.36 826.25,432.60 826.50,435.58 826.75,438.88 827.00,441.48 827.25,443.08 827.50,443.87 827.75,444.19 828.00,444.27 828.25,444.16 828.50,443.74 828.75,442.75 829.00,441.07 829.25,439.05 829.50,437.65 829.60,437.51 829.75,437.83 830.00,439.47 830.25,441.50 830.50,443.07 830.75,443.95 831.00,444.33 831.25,444.47 831.50,444.52 831.75,444.54 832.00,444.53 832.25,444.50 832.50,444.40 832.75,444.15 833.00,443.65 833.25,442.83 833.50,441.79 833.75,440.85 834.00,440.46 834.25,440.86 834.50,441.80 834.75,442.85 835.00,443.68 835.25,444.19 835.50,444.45 835.75,444.57 836.00,444.61 836.25,444.63 836.50,444.65 836.75,444.65 837.00,444.66 837.25,444.67 837.50,444.67 837.75,444.68 838.00,444.68 838.25,444.68 838.50,444.69 838.75,444.69 839.00,444.69 839.25,444.69 839.50,444.69 839.75,444.69 840.00,444.70 840.25,444.70 840.50,444.70 840.75,444.70 841.00,444.70 841.25,444.70 841.50,444.70 841.75,444.70 842.00,444.70 842.25,444.71 842.50,444.71 842.75,444.71 843.00,444.71 843.25,444.71 843.50,444.71 843.75,444.71 844.00,444.71 844.25,444.71 844.50,444.71 844.75,444.71 845.00,444.71 845.25,444.71 845.50,444.71 845.75,444.71 846.00,444.71 846.25,444.71 846.50,444.71 846.75,444.71 847.00,444.71 847.25,444.71 847.50,444.71 847.75,444.71 848.00,444.71 848.25,444.71 848.50,444.71 848.75,444.71 849.00,444.71 849.25,444.71 849.50,444.71 849.75,444.71 850.00,444.71 850.25,444.71 850.50,444.70 850.75,444.70 851.00,444.70 851.25,444.70 851.50,444.69 851.75,444.69 852.00,444.68 852.25,444.67 852.50,444.66 852.75,444.65 853.00,444.63 853.25,444.60 853.50,444.53 853.75,444.36 854.00,443.96 854.25,443.13 854.50,441.72 854.75,439.84 855.00,438.00 855.25,437.01 855.30,436.98 855.50,437.46 855.75,439.06 856.00,441.01 856.25,442.64 856.50,443.69 856.75,444.24 857.00,444.48 857.25,444.58 857.50,444.62 857.75,444.64 858.00,444.65 858.25,444.66 858.50,444.67 858.75,444.68 859.00,444.68 859.25,444.68 859.50,444.68 859.75,444.68 860.00,444.68 860.25,444.68 860.50,444.67 860.75,444.66 861.00,444.65 861.25,444.63 861.50,444.60 861.75,444.51 862.00,444.30 862.25,443.82 862.50,442.95 862.75,441.67 863.00,440.22 863.25,439.15 863.40,438.95 863.50,439.04 863.75,439.95 864.00,441.36 864.25,442.71 864.50,443.66 864.75,444.19 865.00,444.43 865.25,444.53 865.50,444.55 865.75,444.54 866.00,444.48 866.25,444.32 866.50,443.92 866.75,443.09 867.00,441.69 867.25,439.80 867.50,437.95 867.75,436.96 867.80,436.93 868.00,437.40 868.25,439.01 868.50,440.95 868.75,442.58 869.00,443.62 869.25,444.14 869.50,444.34 869.75,444.32 870.00,444.07 870.25,443.46 870.50,442.31 870.75,440.58 871.00,438.64 871.25,437.22 871.40,436.95 871.50,437.07 871.75,438.31 872.00,440.23 872.25,442.05 872.50,443.35 872.75,444.08 873.00,444.43 873.25,444.57 873.50,444.63 873.75,444.66 874.00,444.68 874.25,444.69 874.50,444.70 874.75,444.71 875.00,444.72 875.25,444.73 875.50,444.73 875.75,444.74 876.00,444.74 876.25,444.75 876.50,444.75 876.75,444.75 877.00,444.75 877.25,444.76 877.50,444.76 877.75,444.76 878.00,444.76 878.25,444.76 878.50,444.77 878.75,444.77 879.00,444.77 879.25,444.77 879.50,444.77 879.75,444.77 880.00,444.77 880.25,444.77 880.50,444.78 880.75,444.78 881.00,444.78 881.25,444.78 881.50,444.78 881.75,444.78 882.00,444.78 882.25,444.78 882.50,444.78 882.75,444.78 883.00,444.78 883.25,444.78 883.50,444.79 883.75,444.79 884.00,444.79 884.25,444.79 884.50,444.79 884.75,444.79 885.00,444.79 885.25,444.79 885.50,444.79 885.75,444.79 886.00,444.79 886.25,444.79" fill="none" stroke="#1c1c86" stroke-width="1.2"/><polyline points="105.00,436.11 107.00,436.10 109.00,436.09 111.00,436.07 113.00,436.04 115.00,436.01 117.00,435.97 119.00,435.92 121.00,435.86 123.00,435.80 125.00,435.73 127.00,435.66 129.00,435.59 131.00,435.52 133.00,435.45 135.00,435.39 137.00,435.34 139.00,435.29 141.00,435.26 143.00,435.25 145.00,435.25 147.00,435.27 149.00,435.30 151.00,435.35 153.00,435.42 155.00,435.49 157.00,435.58 159.00,435.68 161.00,435.78 163.00,435.89 165.00,435.99 167.00,436.10 169.00,436.20 171.00,436.30 173.00,436.39 175.00,436.49 177.00,436.60 179.00,436.71 181.00,436.80 183.00,436.90 185.00,436.98 187.00,437.06 189.00,437.13 191.00,437.20 193.00,437.27 195.00,437.33 197.00,437.40 199.00,437.46 201.00,437.51 203.00,437.57 205.00,437.63 207.00,437.68 209.00,437.74 211.00,437.79 213.00,437.84 215.00,437.90 217.00,437.95 219.00,438.01 221.00,438.06 223.00,438.11 225.00,438.17 227.00,438.22 229.00,438.27 231.00,438.33 233.00,438.38 235.00,438.44 237.00,438.49 239.00,438.54 241.00,438.60 243.00,438.65 245.00,438.70 247.00,438.76 249.00,438.81 251.00,438.86 253.00,438.92 255.00,438.97 257.00,439.02 259.00,439.08 261.00,439.13 263.00,439.19 265.00,439.24 267.00,439.29 269.00,439.35 271.00,439.40 273.00,439.46 275.00,439.52 277.00,439.57 279.00,439.63 280.75,439.68 282.75,439.74 284.75,439.80 286.75,439.86 288.75,439.91 290.60,439.97 292.50,440.02 294.50,440.08 296.50,440.14 298.50,440.19 300.50,440.25 302.50,440.31 304.50,440.37 306.50,440.43 308.50,440.48 310.50,440.54 312.50,440.60 314.50,440.66 316.50,440.71 318.50,440.77 320.50,440.83 322.50,440.89 324.50,440.95 326.25,441.00 328.25,441.05 330.25,441.11 332.25,441.17 334.25,441.23 336.25,441.28 338.00,441.34 340.00,441.39 342.00,441.45 344.00,441.51 346.00,441.57 348.00,441.62 350.00,441.68 352.00,441.74 353.80,441.79 355.75,441.85 357.75,441.91 359.75,441.96 361.75,442.01 363.75,442.05 365.75,442.09 367.75,442.12 369.75,442.16 371.75,442.19 373.75,442.23 375.75,442.27 377.75,442.30 379.75,442.34 381.75,442.37 383.50,442.40 385.50,442.44 387.50,442.48 389.50,442.51 391.50,442.55 393.50,442.59 395.50,442.62 397.50,442.66 399.50,442.69 401.50,442.73 403.50,442.76 405.50,442.80 407.50,442.84 409.50,442.87 411.50,442.91 413.50,442.94 415.50,442.98 417.50,443.02 419.25,443.05 421.25,443.08 423.25,443.12 425.25,443.16 427.25,443.19 429.00,443.22 431.00,443.26 432.90,443.29 434.75,443.33 436.75,443.36 438.75,443.40 440.75,443.44 442.75,443.47 444.75,443.51 446.75,443.54 448.75,443.58 450.75,443.62 452.75,443.65 454.75,443.69 456.75,443.72 458.75,443.76 460.75,443.80 462.75,443.81 464.75,443.81 466.75,443.82 468.75,443.82 470.50,443.83 472.50,443.84 474.50,443.84 476.50,443.85 478.50,443.86 480.50,443.86 482.50,443.87 484.50,443.87 486.50,443.88 488.50,443.89 490.50,443.89 492.50,443.90 494.50,443.91 496.50,443.91 498.50,443.92 500.25,443.92 502.25,443.93 504.25,443.94 506.25,443.94 508.25,443.95 510.25,443.96 512.25,443.96 514.00,443.97 516.00,443.97 518.00,443.98 520.00,443.99 522.00,443.99 524.00,444.00 526.00,444.01 528.00,444.01 530.00,444.02 532.00,444.02 534.00,444.03 535.75,444.04 537.75,444.04 539.75,444.05 541.75,444.05 543.75,444.06 545.75,444.07 547.75,444.07 549.75,444.08 551.50,444.09 553.50,444.09 555.50,444.10 557.50,444.10 559.50,444.11 561.50,444.12 563.50,444.12 565.50,444.13 567.50,444.14 569.50,444.14 571.50,444.15 573.50,444.16 575.50,444.16 577.50,444.17 579.50,444.17 581.50,444.18 583.50,444.19 585.50,444.19 587.50,444.20 589.50,444.21 591.50,444.21 593.50,444.22 595.50,444.22 597.50,444.23 599.50,444.24 601.50,444.24 603.50,444.25 605.25,444.26 607.25,444.26 609.25,444.27 611.25,444.27 613.00,444.28 615.00,444.29 617.00,444.29 619.00,444.30 621.00,444.31 623.00,444.31 625.00,444.32 627.00,444.32 629.00,444.33 631.00,444.34 633.00,444.34 634.75,444.35 636.75,444.36 638.50,444.36 640.50,444.37 642.50,444.37 644.50,444.38 646.50,444.39 648.50,444.39 650.50,444.40 652.50,444.40 654.50,444.41 656.50,444.41 658.50,444.41 660.50,444.42 662.25,444.42 664.25,444.42 666.25,444.43 668.25,444.43 670.25,444.43 672.25,444.44 674.10,444.44 676.00,444.44 678.00,444.45 680.00,444.45 681.75,444.45 683.75,444.46 685.75,444.46 687.75,444.46 689.75,444.47 691.75,444.47 693.75,444.47 695.75,444.48 697.75,444.48 699.75,444.48 701.50,444.49 703.50,444.49 705.50,444.49 707.50,444.50 709.50,444.50 711.25,444.50 713.25,444.51 715.25,444.51 717.25,444.51 719.25,444.52 721.25,444.52 723.25,444.52 725.10,444.53 727.00,444.53 729.00,444.53 731.00,444.54 733.00,444.54 735.00,444.54 736.80,444.55 738.75,444.55 740.75,444.55 742.75,444.56 744.75,444.56 746.75,444.56 748.75,444.57 750.75,444.57 752.75,444.57 754.70,444.58 756.50,444.58 758.50,444.58 760.50,444.59 762.50,444.59 764.50,444.59 766.50,444.60 768.50,444.60 770.50,444.60 772.50,444.61 774.50,444.61 776.50,444.61 778.50,444.62 780.50,444.62 782.50,444.62 784.50,444.63 786.25,444.63 788.25,444.63 790.25,444.64 792.25,444.64 794.00,444.64 796.00,444.65 798.00,444.65 800.00,444.65 802.00,444.66 804.00,444.66 806.00,444.66 808.00,444.67 810.00,444.67 812.00,444.67 814.00,444.68 815.75,444.68 817.75,444.68 819.75,444.69 821.75,444.69 823.75,444.69 825.75,444.70 827.75,444.70 829.60,444.70 831.50,444.71 833.50,444.71 835.50,444.71 837.50,444.72 839.50,444.72 841.50,444.72 843.50,444.73 845.50,444.73 847.50,444.73 849.50,444.74 851.50,444.74 853.50,444.74 855.30,444.75 857.25,444.75 859.25,444.75 861.25,444.76 863.25,444.76 865.00,444.76 867.00,444.77 868.75,444.77 870.75,444.77 872.50,444.78 874.50,444.78 876.50,444.78 878.50,444.79 880.50,444.79 882.50,444.79 884.50,444.80" fill="none" stroke="#0a7a1a" stroke-width="1.6"/><line x1="66.50" y1="6.50" x2="926.00" y2="6.50" stroke="#333" stroke-width="1.3"/><line x1="925.50" y1="7.00" x2="925.50" y2="458.50" stroke="#444" stroke-width="1.3"/><line x1="66.00" y1="6.00" x2="66.00" y2="459.00" stroke="#222" stroke-width="1.3"/><line x1="66.50" y1="458.50" x2="926.00" y2="458.50" stroke="#222" stroke-width="1.3"/><line x1="58.00" y1="447.50" x2="66.50" y2="447.50" stroke="#222" stroke-width="1.2"/><line x1="62.00" y1="439.50" x2="66.50" y2="439.50" stroke="#222" stroke-width="1.2"/><line x1="62.00" y1="430.50" x2="66.50" y2="430.50" stroke="#222" stroke-width="1.2"/><line x1="62.00" y1="422.50" x2="66.50" y2="422.50" stroke="#222" stroke-width="1.2"/><line x1="62.00" y1="414.50" x2="66.50" y2="414.50" stroke="#222" stroke-width="1.2"/><line x1="62.00" y1="405.50" x2="66.50" y2="405.50" stroke="#222" stroke-width="1.2"/><line x1="62.00" y1="397.50" x2="66.50" y2="397.50" stroke="#222" stroke-width="1.2"/><line x1="62.00" y1="389.50" x2="66.50" y2="389.50" stroke="#222" stroke-width="1.2"/><line x1="62.00" y1="381.50" x2="66.50" y2="381.50" stroke="#222" stroke-width="1.2"/><line x1="62.00" y1="372.50" x2="66.50" y2="372.50" stroke="#222" stroke-width="1.2"/><line x1="58.00" y1="364.50" x2="66.50" y2="364.50" stroke="#222" stroke-width="1.2"/><line x1="62.00" y1="356.50" x2="66.50" y2="356.50" stroke="#222" stroke-width="1.2"/><line x1="62.00" y1="347.50" x2="66.50" y2="347.50" stroke="#222" stroke-width="1.2"/><line x1="62.00" y1="339.50" x2="66.50" y2="339.50" stroke="#222" stroke-width="1.2"/><line x1="62.00" y1="331.50" x2="66.50" y2="331.50" stroke="#222" stroke-width="1.2"/><line x1="62.00" y1="322.50" x2="66.50" y2="322.50" stroke="#222" stroke-width="1.2"/><line x1="62.00" y1="314.50" x2="66.50" y2="314.50" stroke="#222" stroke-width="1.2"/><line x1="62.00" y1="306.50" x2="66.50" y2="306.50" stroke="#222" stroke-width="1.2"/><line x1="62.00" y1="297.50" x2="66.50" y2="297.50" stroke="#222" stroke-width="1.2"/><line x1="62.00" y1="289.50" x2="66.50" y2="289.50" stroke="#222" stroke-width="1.2"/><line x1="58.00" y1="281.50" x2="66.50" y2="281.50" stroke="#222" stroke-width="1.2"/><line x1="62.00" y1="272.50" x2="66.50" y2="272.50" stroke="#222" stroke-width="1.2"/><line x1="62.00" y1="264.50" x2="66.50" y2="264.50" stroke="#222" stroke-width="1.2"/><line x1="62.00" y1="256.50" x2="66.50" y2="256.50" stroke="#222" stroke-width="1.2"/><line x1="62.00" y1="248.50" x2="66.50" y2="248.50" stroke="#222" stroke-width="1.2"/><line x1="62.00" y1="239.50" x2="66.50" y2="239.50" stroke="#222" stroke-width="1.2"/><line x1="62.00" y1="231.50" x2="66.50" y2="231.50" stroke="#222" stroke-width="1.2"/><line x1="62.00" y1="223.50" x2="66.50" y2="223.50" stroke="#222" stroke-width="1.2"/><line x1="62.00" y1="214.50" x2="66.50" y2="214.50" stroke="#222" stroke-width="1.2"/><line x1="62.00" y1="206.50" x2="66.50" y2="206.50" stroke="#222" stroke-width="1.2"/><line x1="58.00" y1="198.50" x2="66.50" y2="198.50" stroke="#222" stroke-width="1.2"/><line x1="62.00" y1="189.50" x2="66.50" y2="189.50" stroke="#222" stroke-width="1.2"/><line x1="62.00" y1="181.50" x2="66.50" y2="181.50" stroke="#222" stroke-width="1.2"/><line x1="62.00" y1="173.50" x2="66.50" y2="173.50" stroke="#222" stroke-width="1.2"/><line x1="62.00" y1="164.50" x2="66.50" y2="164.50" stroke="#222" stroke-width="1.2"/><line x1="62.00" y1="156.50" x2="66.50" y2="156.50" stroke="#222" stroke-width="1.2"/><line x1="62.00" y1="148.50" x2="66.50" y2="148.50" stroke="#222" stroke-width="1.2"/><line x1="62.00" y1="140.50" x2="66.50" y2="140.50" stroke="#222" stroke-width="1.2"/><line x1="62.00" y1="131.50" x2="66.50" y2="131.50" stroke="#222" stroke-width="1.2"/><line x1="62.00" y1="123.50" x2="66.50" y2="123.50" stroke="#222" stroke-width="1.2"/><line x1="58.00" y1="115.50" x2="66.50" y2="115.50" stroke="#222" stroke-width="1.2"/><line x1="62.00" y1="106.50" x2="66.50" y2="106.50" stroke="#222" stroke-width="1.2"/><line x1="62.00" y1="98.50" x2="66.50" y2="98.50" stroke="#222" stroke-width="1.2"/><line x1="62.00" y1="90.50" x2="66.50" y2="90.50" stroke="#222" stroke-width="1.2"/><line x1="62.00" y1="81.50" x2="66.50" y2="81.50" stroke="#222" stroke-width="1.2"/><line x1="62.00" y1="73.50" x2="66.50" y2="73.50" stroke="#222" stroke-width="1.2"/><line x1="62.00" y1="65.50" x2="66.50" y2="65.50" stroke="#222" stroke-width="1.2"/><line x1="62.00" y1="56.50" x2="66.50" y2="56.50" stroke="#222" stroke-width="1.2"/><line x1="62.00" y1="48.50" x2="66.50" y2="48.50" stroke="#222" stroke-width="1.2"/><line x1="62.00" y1="40.50" x2="66.50" y2="40.50" stroke="#222" stroke-width="1.2"/><line x1="58.00" y1="32.50" x2="66.50" y2="32.50" stroke="#222" stroke-width="1.2"/><line x1="62.00" y1="23.50" x2="66.50" y2="23.50" stroke="#222" stroke-width="1.2"/><line x1="62.00" y1="15.50" x2="66.50" y2="15.50" stroke="#222" stroke-width="1.2"/><line x1="62.00" y1="7.50" x2="66.50" y2="7.50" stroke="#222" stroke-width="1.2"/><line x1="76.50" y1="458.50" x2="76.50" y2="466.50" stroke="#222" stroke-width="1.2"/><line x1="86.50" y1="458.50" x2="86.50" y2="462.50" stroke="#222" stroke-width="1.2"/><line x1="95.50" y1="458.50" x2="95.50" y2="462.50" stroke="#222" stroke-width="1.2"/><line x1="105.50" y1="458.50" x2="105.50" y2="462.50" stroke="#222" stroke-width="1.2"/><line x1="115.50" y1="458.50" x2="115.50" y2="462.50" stroke="#222" stroke-width="1.2"/><line x1="125.50" y1="458.50" x2="125.50" y2="462.50" stroke="#222" stroke-width="1.2"/><line x1="134.50" y1="458.50" x2="134.50" y2="462.50" stroke="#222" stroke-width="1.2"/><line x1="144.50" y1="458.50" x2="144.50" y2="462.50" stroke="#222" stroke-width="1.2"/><line x1="154.50" y1="458.50" x2="154.50" y2="462.50" stroke="#222" stroke-width="1.2"/><line x1="164.50" y1="458.50" x2="164.50" y2="462.50" stroke="#222" stroke-width="1.2"/><line x1="173.50" y1="458.50" x2="173.50" y2="466.50" stroke="#222" stroke-width="1.2"/><line x1="183.50" y1="458.50" x2="183.50" y2="462.50" stroke="#222" stroke-width="1.2"/><line x1="193.50" y1="458.50" x2="193.50" y2="462.50" stroke="#222" stroke-width="1.2"/><line x1="203.50" y1="458.50" x2="203.50" y2="462.50" stroke="#222" stroke-width="1.2"/><line x1="212.50" y1="458.50" x2="212.50" y2="462.50" stroke="#222" stroke-width="1.2"/><line x1="222.50" y1="458.50" x2="222.50" y2="462.50" stroke="#222" stroke-width="1.2"/><line x1="232.50" y1="458.50" x2="232.50" y2="462.50" stroke="#222" stroke-width="1.2"/><line x1="242.50" y1="458.50" x2="242.50" y2="462.50" stroke="#222" stroke-width="1.2"/><line x1="251.50" y1="458.50" x2="251.50" y2="462.50" stroke="#222" stroke-width="1.2"/><line x1="261.50" y1="458.50" x2="261.50" y2="462.50" stroke="#222" stroke-width="1.2"/><line x1="271.50" y1="458.50" x2="271.50" y2="466.50" stroke="#222" stroke-width="1.2"/><line x1="281.50" y1="458.50" x2="281.50" y2="462.50" stroke="#222" stroke-width="1.2"/><line x1="290.50" y1="458.50" x2="290.50" y2="462.50" stroke="#222" stroke-width="1.2"/><line x1="300.50" y1="458.50" x2="300.50" y2="462.50" stroke="#222" stroke-width="1.2"/><line x1="310.50" y1="458.50" x2="310.50" y2="462.50" stroke="#222" stroke-width="1.2"/><line x1="320.50" y1="458.50" x2="320.50" y2="462.50" stroke="#222" stroke-width="1.2"/><line x1="329.50" y1="458.50" x2="329.50" y2="462.50" stroke="#222" stroke-width="1.2"/><line x1="339.50" y1="458.50" x2="339.50" y2="462.50" stroke="#222" stroke-width="1.2"/><line x1="349.50" y1="458.50" x2="349.50" y2="462.50" stroke="#222" stroke-width="1.2"/><line x1="359.50" y1="458.50" x2="359.50" y2="462.50" stroke="#222" stroke-width="1.2"/><line x1="368.50" y1="458.50" x2="368.50" y2="466.50" stroke="#222" stroke-width="1.2"/><line x1="378.50" y1="458.50" x2="378.50" y2="462.50" stroke="#222" stroke-width="1.2"/><line x1="388.50" y1="458.50" x2="388.50" y2="462.50" stroke="#222" stroke-width="1.2"/><line x1="398.50" y1="458.50" x2="398.50" y2="462.50" stroke="#222" stroke-width="1.2"/><line x1="407.50" y1="458.50" x2="407.50" y2="462.50" stroke="#222" stroke-width="1.2"/><line x1="417.50" y1="458.50" x2="417.50" y2="462.50" stroke="#222" stroke-width="1.2"/><line x1="427.50" y1="458.50" x2="427.50" y2="462.50" stroke="#222" stroke-width="1.2"/><line x1="437.50" y1="458.50" x2="437.50" y2="462.50" stroke="#222" stroke-width="1.2"/><line x1="446.50" y1="458.50" x2="446.50" y2="462.50" stroke="#222" stroke-width="1.2"/><line x1="456.50" y1="458.50" x2="456.50" y2="462.50" stroke="#222" stroke-width="1.2"/><line x1="466.50" y1="458.50" x2="466.50" y2="466.50" stroke="#222" stroke-width="1.2"/><line x1="476.50" y1="458.50" x2="476.50" y2="462.50" stroke="#222" stroke-width="1.2"/><line x1="485.50" y1="458.50" x2="485.50" y2="462.50" stroke="#222" stroke-width="1.2"/><line x1="495.50" y1="458.50" x2="495.50" y2="462.50" stroke="#222" stroke-width="1.2"/><line x1="505.50" y1="458.50" x2="505.50" y2="462.50" stroke="#222" stroke-width="1.2"/><line x1="515.50" y1="458.50" x2="515.50" y2="462.50" stroke="#222" stroke-width="1.2"/><line x1="524.50" y1="458.50" x2="524.50" y2="462.50" stroke="#222" stroke-width="1.2"/><line x1="534.50" y1="458.50" x2="534.50" y2="462.50" stroke="#222" stroke-width="1.2"/><line x1="544.50" y1="458.50" x2="544.50" y2="462.50" stroke="#222" stroke-width="1.2"/><line x1="554.50" y1="458.50" x2="554.50" y2="462.50" stroke="#222" stroke-width="1.2"/><line x1="563.50" y1="458.50" x2="563.50" y2="466.50" stroke="#222" stroke-width="1.2"/><line x1="573.50" y1="458.50" x2="573.50" y2="462.50" stroke="#222" stroke-width="1.2"/><line x1="583.50" y1="458.50" x2="583.50" y2="462.50" stroke="#222" stroke-width="1.2"/><line x1="593.50" y1="458.50" x2="593.50" y2="462.50" stroke="#222" stroke-width="1.2"/><line x1="602.50" y1="458.50" x2="602.50" y2="462.50" stroke="#222" stroke-width="1.2"/><line x1="612.50" y1="458.50" x2="612.50" y2="462.50" stroke="#222" stroke-width="1.2"/><line x1="622.50" y1="458.50" x2="622.50" y2="462.50" stroke="#222" stroke-width="1.2"/><line x1="632.50" y1="458.50" x2="632.50" y2="462.50" stroke="#222" stroke-width="1.2"/><line x1="641.50" y1="458.50" x2="641.50" y2="462.50" stroke="#222" stroke-width="1.2"/><line x1="651.50" y1="458.50" x2="651.50" y2="462.50" stroke="#222" stroke-width="1.2"/><line x1="661.50" y1="458.50" x2="661.50" y2="466.50" stroke="#222" stroke-width="1.2"/><line x1="671.50" y1="458.50" x2="671.50" y2="462.50" stroke="#222" stroke-width="1.2"/><line x1="680.50" y1="458.50" x2="680.50" y2="462.50" stroke="#222" stroke-width="1.2"/><line x1="690.50" y1="458.50" x2="690.50" y2="462.50" stroke="#222" stroke-width="1.2"/><line x1="700.50" y1="458.50" x2="700.50" y2="462.50" stroke="#222" stroke-width="1.2"/><line x1="710.50" y1="458.50" x2="710.50" y2="462.50" stroke="#222" stroke-width="1.2"/><line x1="719.50" y1="458.50" x2="719.50" y2="462.50" stroke="#222" stroke-width="1.2"/><line x1="729.50" y1="458.50" x2="729.50" y2="462.50" stroke="#222" stroke-width="1.2"/><line x1="739.50" y1="458.50" x2="739.50" y2="462.50" stroke="#222" stroke-width="1.2"/><line x1="749.50" y1="458.50" x2="749.50" y2="462.50" stroke="#222" stroke-width="1.2"/><line x1="758.50" y1="458.50" x2="758.50" y2="466.50" stroke="#222" stroke-width="1.2"/><line x1="768.50" y1="458.50" x2="768.50" y2="462.50" stroke="#222" stroke-width="1.2"/><line x1="778.50" y1="458.50" x2="778.50" y2="462.50" stroke="#222" stroke-width="1.2"/><line x1="788.50" y1="458.50" x2="788.50" y2="462.50" stroke="#222" stroke-width="1.2"/><line x1="797.50" y1="458.50" x2="797.50" y2="462.50" stroke="#222" stroke-width="1.2"/><line x1="807.50" y1="458.50" x2="807.50" y2="462.50" stroke="#222" stroke-width="1.2"/><line x1="817.50" y1="458.50" x2="817.50" y2="462.50" stroke="#222" stroke-width="1.2"/><line x1="827.50" y1="458.50" x2="827.50" y2="462.50" stroke="#222" stroke-width="1.2"/><line x1="836.50" y1="458.50" x2="836.50" y2="462.50" stroke="#222" stroke-width="1.2"/><line x1="846.50" y1="458.50" x2="846.50" y2="462.50" stroke="#222" stroke-width="1.2"/><line x1="856.50" y1="458.50" x2="856.50" y2="466.50" stroke="#222" stroke-width="1.2"/><line x1="866.50" y1="458.50" x2="866.50" y2="462.50" stroke="#222" stroke-width="1.2"/><line x1="875.50" y1="458.50" x2="875.50" y2="462.50" stroke="#222" stroke-width="1.2"/><line x1="885.50" y1="458.50" x2="885.50" y2="462.50" stroke="#222" stroke-width="1.2"/><line x1="895.50" y1="458.50" x2="895.50" y2="462.50" stroke="#222" stroke-width="1.2"/><line x1="905.50" y1="458.50" x2="905.50" y2="462.50" stroke="#222" stroke-width="1.2"/><line x1="914.50" y1="458.50" x2="914.50" y2="462.50" stroke="#222" stroke-width="1.2"/><line x1="789.80" y1="19.20" x2="822.40" y2="19.20" stroke="#2a2a90" stroke-width="1.2"/><line x1="789.80" y1="53.20" x2="822.40" y2="53.20" stroke="#0a7a1a" stroke-width="2"/><line x1="789.80" y1="87.00" x2="822.40" y2="87.00" stroke="#f0a818" stroke-width="2"/><line x1="789.80" y1="120.30" x2="822.40" y2="120.30" stroke="#c02080" stroke-width="2"/><line x1="769.00" y1="70.80" x2="921.00" y2="70.80" stroke="#e8eef3" stroke-width="1"/><line x1="769.00" y1="104.10" x2="921.00" y2="104.10" stroke="#e8eef3" stroke-width="1"/><rect x="67.20" y="472.40" width="857.70" height="26.50" fill="#e5f3fd"/><rect x="67.20" y="499.90" width="857.70" height="25.90" fill="#e5f3fd"/><rect x="67.20" y="526.80" width="857.70" height="26.10" fill="#e5f3fd"/><rect x="67.20" y="553.90" width="857.70" height="24.60" fill="#e5f3fd"/><line x1="76.50" y1="472.00" x2="76.50" y2="578.00" stroke="#dde1e5" stroke-width="1"/><line x1="173.98" y1="472.00" x2="173.98" y2="578.00" stroke="#dde1e5" stroke-width="1"/><line x1="271.45" y1="472.00" x2="271.45" y2="578.00" stroke="#dde1e5" stroke-width="1"/><line x1="368.92" y1="472.00" x2="368.92" y2="578.00" stroke="#dde1e5" stroke-width="1"/><line x1="466.40" y1="472.00" x2="466.40" y2="578.00" stroke="#dde1e5" stroke-width="1"/><line x1="563.88" y1="472.00" x2="563.88" y2="578.00" stroke="#dde1e5" stroke-width="1"/><line x1="661.35" y1="472.00" x2="661.35" y2="578.00" stroke="#dde1e5" stroke-width="1"/><line x1="758.83" y1="472.00" x2="758.83" y2="578.00" stroke="#dde1e5" stroke-width="1"/><line x1="856.30" y1="472.00" x2="856.30" y2="578.00" stroke="#dde1e5" stroke-width="1"/><line x1="0.00" y1="471.40" x2="929.00" y2="471.40" stroke="#a8a8a8" stroke-width="2.4"/><line x1="0.00" y1="498.90" x2="929.00" y2="498.90" stroke="#a8a8a8" stroke-width="2.4"/><line x1="0.00" y1="525.80" x2="929.00" y2="525.80" stroke="#a8a8a8" stroke-width="2.4"/><line x1="0.00" y1="552.90" x2="929.00" y2="552.90" stroke="#a8a8a8" stroke-width="2.4"/><line x1="280.00" y1="474.90" x2="280.00" y2="496.90" stroke="#5cb85c" stroke-width="1.5"/><line x1="336.30" y1="474.90" x2="336.30" y2="496.90" stroke="#5cb85c" stroke-width="1.5"/><line x1="432.90" y1="474.90" x2="432.90" y2="496.90" stroke="#5cb85c" stroke-width="1.5"/><line x1="461.50" y1="474.90" x2="461.50" y2="496.90" stroke="#5cb85c" stroke-width="1.5"/><line x1="469.50" y1="474.90" x2="469.50" y2="496.90" stroke="#5cb85c" stroke-width="1.5"/><line x1="490.60" y1="474.90" x2="490.60" y2="496.90" stroke="#5cb85c" stroke-width="1.5"/><line x1="523.00" y1="474.90" x2="523.00" y2="496.90" stroke="#5cb85c" stroke-width="1.5"/><line x1="565.50" y1="474.90" x2="565.50" y2="496.90" stroke="#5cb85c" stroke-width="1.5"/><line x1="570.00" y1="474.90" x2="570.00" y2="496.90" stroke="#5cb85c" stroke-width="1.5"/><line x1="611.60" y1="474.90" x2="611.60" y2="496.90" stroke="#5cb85c" stroke-width="1.5"/><line x1="616.00" y1="474.90" x2="616.00" y2="496.90" stroke="#5cb85c" stroke-width="1.5"/><line x1="634.60" y1="474.90" x2="634.60" y2="496.90" stroke="#5cb85c" stroke-width="1.5"/><line x1="661.10" y1="474.90" x2="661.10" y2="496.90" stroke="#5cb85c" stroke-width="1.5"/><line x1="701.00" y1="474.90" x2="701.00" y2="496.90" stroke="#5cb85c" stroke-width="1.5"/><line x1="717.80" y1="474.90" x2="717.80" y2="496.90" stroke="#5cb85c" stroke-width="1.5"/><line x1="736.90" y1="474.90" x2="736.90" y2="496.90" stroke="#5cb85c" stroke-width="1.5"/><line x1="741.50" y1="474.90" x2="741.50" y2="496.90" stroke="#5cb85c" stroke-width="1.5"/><line x1="793.00" y1="474.90" x2="793.00" y2="496.90" stroke="#5cb85c" stroke-width="1.5"/><line x1="814.00" y1="474.90" x2="814.00" y2="496.90" stroke="#5cb85c" stroke-width="1.5"/><line x1="833.80" y1="474.90" x2="833.80" y2="496.90" stroke="#5cb85c" stroke-width="1.5"/><line x1="855.50" y1="474.90" x2="855.50" y2="496.90" stroke="#5cb85c" stroke-width="1.5"/><line x1="867.90" y1="474.90" x2="867.90" y2="496.90" stroke="#5cb85c" stroke-width="1.5"/><line x1="871.30" y1="474.90" x2="871.30" y2="496.90" stroke="#5cb85c" stroke-width="1.5"/><line x1="280.00" y1="502.40" x2="280.00" y2="523.80" stroke="#8c8c8c" stroke-width="1.5"/><line x1="296.20" y1="502.40" x2="296.20" y2="523.80" stroke="#8c8c8c" stroke-width="1.5"/><line x1="336.30" y1="502.40" x2="336.30" y2="523.80" stroke="#8c8c8c" stroke-width="1.5"/><line x1="345.00" y1="502.40" x2="345.00" y2="523.80" stroke="#8c8c8c" stroke-width="1.5"/><line x1="432.90" y1="502.40" x2="432.90" y2="523.80" stroke="#8c8c8c" stroke-width="1.5"/><line x1="461.50" y1="502.40" x2="461.50" y2="523.80" stroke="#8c8c8c" stroke-width="1.5"/><line x1="469.50" y1="502.40" x2="469.50" y2="523.80" stroke="#8c8c8c" stroke-width="1.5"/><line x1="490.60" y1="502.40" x2="490.60" y2="523.80" stroke="#8c8c8c" stroke-width="1.5"/><line x1="523.00" y1="502.40" x2="523.00" y2="523.80" stroke="#8c8c8c" stroke-width="1.5"/><line x1="565.50" y1="502.40" x2="565.50" y2="523.80" stroke="#8c8c8c" stroke-width="1.5"/><line x1="611.60" y1="502.40" x2="611.60" y2="523.80" stroke="#8c8c8c" stroke-width="1.5"/><line x1="616.00" y1="502.40" x2="616.00" y2="523.80" stroke="#8c8c8c" stroke-width="1.5"/><line x1="701.00" y1="502.40" x2="701.00" y2="523.80" stroke="#8c8c8c" stroke-width="1.5"/><line x1="736.90" y1="502.40" x2="736.90" y2="523.80" stroke="#8c8c8c" stroke-width="1.5"/><line x1="792.70" y1="502.40" x2="792.70" y2="523.80" stroke="#8c8c8c" stroke-width="1.5"/><line x1="814.30" y1="502.40" x2="814.30" y2="523.80" stroke="#8c8c8c" stroke-width="1.5"/><line x1="833.90" y1="502.40" x2="833.90" y2="523.80" stroke="#8c8c8c" stroke-width="1.5"/><line x1="855.50" y1="502.40" x2="855.50" y2="523.80" stroke="#8c8c8c" stroke-width="1.5"/><line x1="871.30" y1="502.40" x2="871.30" y2="523.80" stroke="#8c8c8c" stroke-width="1.5"/><line x1="291.00" y1="529.30" x2="291.00" y2="550.90" stroke="#2a8c8c" stroke-width="1.5"/><line x1="323.40" y1="529.30" x2="323.40" y2="550.90" stroke="#2a8c8c" stroke-width="1.5"/><line x1="353.90" y1="529.30" x2="353.90" y2="550.90" stroke="#2a8c8c" stroke-width="1.5"/><line x1="383.40" y1="529.30" x2="383.40" y2="550.90" stroke="#2a8c8c" stroke-width="1.5"/><line x1="428.50" y1="529.30" x2="428.50" y2="550.90" stroke="#2a8c8c" stroke-width="1.5"/><line x1="431.70" y1="529.30" x2="431.70" y2="550.90" stroke="#2a8c8c" stroke-width="1.5"/><line x1="451.70" y1="529.30" x2="451.70" y2="550.90" stroke="#2a8c8c" stroke-width="1.5"/><line x1="471.80" y1="529.30" x2="471.80" y2="550.90" stroke="#2a8c8c" stroke-width="1.5"/><line x1="492.40" y1="529.30" x2="492.40" y2="550.90" stroke="#2a8c8c" stroke-width="1.5"/><line x1="497.50" y1="529.30" x2="497.50" y2="550.90" stroke="#2a8c8c" stroke-width="1.5"/><line x1="514.00" y1="529.30" x2="514.00" y2="550.90" stroke="#2a8c8c" stroke-width="1.5"/><line x1="535.40" y1="529.30" x2="535.40" y2="550.90" stroke="#2a8c8c" stroke-width="1.5"/><line x1="550.80" y1="529.30" x2="550.80" y2="550.90" stroke="#2a8c8c" stroke-width="1.5"/><line x1="583.50" y1="529.30" x2="583.50" y2="550.90" stroke="#2a8c8c" stroke-width="1.5"/><line x1="592.00" y1="529.30" x2="592.00" y2="550.90" stroke="#2a8c8c" stroke-width="1.5"/><line x1="600.60" y1="529.30" x2="600.60" y2="550.90" stroke="#2a8c8c" stroke-width="1.5"/><line x1="605.00" y1="529.30" x2="605.00" y2="550.90" stroke="#2a8c8c" stroke-width="1.5"/><line x1="624.70" y1="529.30" x2="624.70" y2="550.90" stroke="#2a8c8c" stroke-width="1.5"/><line x1="633.20" y1="529.30" x2="633.20" y2="550.90" stroke="#2a8c8c" stroke-width="1.5"/><line x1="648.30" y1="529.30" x2="648.30" y2="550.90" stroke="#2a8c8c" stroke-width="1.5"/><line x1="650.40" y1="529.30" x2="650.40" y2="550.90" stroke="#2a8c8c" stroke-width="1.5"/><line x1="656.30" y1="529.30" x2="656.30" y2="550.90" stroke="#2a8c8c" stroke-width="1.5"/><line x1="664.50" y1="529.30" x2="664.50" y2="550.90" stroke="#2a8c8c" stroke-width="1.5"/><line x1="674.80" y1="529.30" x2="674.80" y2="550.90" stroke="#2a8c8c" stroke-width="1.5"/><line x1="681.40" y1="529.30" x2="681.40" y2="550.90" stroke="#2a8c8c" stroke-width="1.5"/><line x1="711.20" y1="529.30" x2="711.20" y2="550.90" stroke="#2a8c8c" stroke-width="1.5"/><line x1="716.70" y1="529.30" x2="716.70" y2="550.90" stroke="#2a8c8c" stroke-width="1.5"/><line x1="728.10" y1="529.30" x2="728.10" y2="550.90" stroke="#2a8c8c" stroke-width="1.5"/><line x1="738.70" y1="529.30" x2="738.70" y2="550.90" stroke="#2a8c8c" stroke-width="1.5"/><line x1="746.00" y1="529.30" x2="746.00" y2="550.90" stroke="#2a8c8c" stroke-width="1.5"/><line x1="753.60" y1="529.30" x2="753.60" y2="550.90" stroke="#2a8c8c" stroke-width="1.5"/><line x1="757.00" y1="529.30" x2="757.00" y2="550.90" stroke="#2a8c8c" stroke-width="1.5"/><line x1="763.90" y1="529.30" x2="763.90" y2="550.90" stroke="#2a8c8c" stroke-width="1.5"/><line x1="785.40" y1="529.30" x2="785.40" y2="550.90" stroke="#2a8c8c" stroke-width="1.5"/><line x1="792.30" y1="529.30" x2="792.30" y2="550.90" stroke="#2a8c8c" stroke-width="1.5"/><line x1="797.10" y1="529.30" x2="797.10" y2="550.90" stroke="#2a8c8c" stroke-width="1.5"/><line x1="823.20" y1="529.30" x2="823.20" y2="550.90" stroke="#2a8c8c" stroke-width="1.5"/><line x1="837.50" y1="529.30" x2="837.50" y2="550.90" stroke="#2a8c8c" stroke-width="1.5"/><line x1="847.70" y1="529.30" x2="847.70" y2="550.90" stroke="#2a8c8c" stroke-width="1.5"/><line x1="850.70" y1="529.30" x2="850.70" y2="550.90" stroke="#2a8c8c" stroke-width="1.5"/><line x1="857.60" y1="529.30" x2="857.60" y2="550.90" stroke="#2a8c8c" stroke-width="1.5"/><line x1="867.90" y1="529.30" x2="867.90" y2="550.90" stroke="#2a8c8c" stroke-width="1.5"/><line x1="874.70" y1="529.30" x2="874.70" y2="550.90" stroke="#2a8c8c" stroke-width="1.5"/><line x1="877.50" y1="529.30" x2="877.50" y2="550.90" stroke="#2a8c8c" stroke-width="1.5"/><line x1="878.90" y1="529.30" x2="878.90" y2="550.90" stroke="#2a8c8c" stroke-width="1.5"/><line x1="884.40" y1="529.30" x2="884.40" y2="550.90" stroke="#2a8c8c" stroke-width="1.5"/><line x1="326.40" y1="529.30" x2="326.40" y2="550.90" stroke="#d8406a" stroke-width="1.5"/><line x1="419.80" y1="529.30" x2="419.80" y2="550.90" stroke="#d8406a" stroke-width="1.5"/><line x1="445.40" y1="529.30" x2="445.40" y2="550.90" stroke="#d8406a" stroke-width="1.5"/><line x1="483.50" y1="529.30" x2="483.50" y2="550.90" stroke="#d8406a" stroke-width="1.5"/><line x1="500.00" y1="529.30" x2="500.00" y2="550.90" stroke="#d8406a" stroke-width="1.5"/><line x1="527.40" y1="529.30" x2="527.40" y2="550.90" stroke="#d8406a" stroke-width="1.5"/><line x1="589.50" y1="529.30" x2="589.50" y2="550.90" stroke="#d8406a" stroke-width="1.5"/><line x1="659.70" y1="529.30" x2="659.70" y2="550.90" stroke="#d8406a" stroke-width="1.5"/><line x1="673.50" y1="529.30" x2="673.50" y2="550.90" stroke="#d8406a" stroke-width="1.5"/><line x1="725.70" y1="529.30" x2="725.70" y2="550.90" stroke="#d8406a" stroke-width="1.5"/><line x1="742.60" y1="529.30" x2="742.60" y2="550.90" stroke="#d8406a" stroke-width="1.5"/><line x1="801.90" y1="529.30" x2="801.90" y2="550.90" stroke="#d8406a" stroke-width="1.5"/><line x1="826.90" y1="529.30" x2="826.90" y2="550.90" stroke="#d8406a" stroke-width="1.5"/><line x1="861.30" y1="529.30" x2="861.30" y2="550.90" stroke="#d8406a" stroke-width="1.5"/><line x1="637.70" y1="529.30" x2="637.70" y2="550.90" stroke="#4a4a5a" stroke-width="1.5"/><line x1="830.10" y1="529.30" x2="830.10" y2="550.90" stroke="#4a4a5a" stroke-width="1.5"/><line x1="864.40" y1="529.30" x2="864.40" y2="550.90" stroke="#4a4a5a" stroke-width="1.5"/><line x1="280.00" y1="556.40" x2="280.00" y2="576.50" stroke="#3a92d2" stroke-width="1.5"/><line x1="290.70" y1="556.40" x2="290.70" y2="576.50" stroke="#3a92d2" stroke-width="1.5"/><line x1="296.20" y1="556.40" x2="296.20" y2="576.50" stroke="#3a92d2" stroke-width="1.5"/><line x1="325.90" y1="556.40" x2="325.90" y2="576.50" stroke="#3a92d2" stroke-width="1.5"/><line x1="336.30" y1="556.40" x2="336.30" y2="576.50" stroke="#3a92d2" stroke-width="1.5"/><line x1="345.00" y1="556.40" x2="345.00" y2="576.50" stroke="#3a92d2" stroke-width="1.5"/><line x1="353.90" y1="556.40" x2="353.90" y2="576.50" stroke="#3a92d2" stroke-width="1.5"/><line x1="382.80" y1="556.40" x2="382.80" y2="576.50" stroke="#3a92d2" stroke-width="1.5"/><line x1="419.40" y1="556.40" x2="419.40" y2="576.50" stroke="#3a92d2" stroke-width="1.5"/><line x1="428.50" y1="556.40" x2="428.50" y2="576.50" stroke="#3a92d2" stroke-width="1.5"/><line x1="432.90" y1="556.40" x2="432.90" y2="576.50" stroke="#3a92d2" stroke-width="1.5"/><line x1="445.00" y1="556.40" x2="445.00" y2="576.50" stroke="#3a92d2" stroke-width="1.5"/><line x1="461.60" y1="556.40" x2="461.60" y2="576.50" stroke="#3a92d2" stroke-width="1.5"/><line x1="469.50" y1="556.40" x2="469.50" y2="576.50" stroke="#3a92d2" stroke-width="1.5"/><line x1="491.00" y1="556.40" x2="491.00" y2="576.50" stroke="#3a92d2" stroke-width="1.5"/><line x1="492.40" y1="556.40" x2="492.40" y2="576.50" stroke="#3a92d2" stroke-width="1.5"/><line x1="499.30" y1="556.40" x2="499.30" y2="576.50" stroke="#3a92d2" stroke-width="1.5"/><line x1="513.40" y1="556.40" x2="513.40" y2="576.50" stroke="#3a92d2" stroke-width="1.5"/><line x1="523.00" y1="556.40" x2="523.00" y2="576.50" stroke="#3a92d2" stroke-width="1.5"/><line x1="534.60" y1="556.40" x2="534.60" y2="576.50" stroke="#3a92d2" stroke-width="1.5"/><line x1="550.10" y1="556.40" x2="550.10" y2="576.50" stroke="#3a92d2" stroke-width="1.5"/><line x1="565.50" y1="556.40" x2="565.50" y2="576.50" stroke="#3a92d2" stroke-width="1.5"/><line x1="589.00" y1="556.40" x2="589.00" y2="576.50" stroke="#3a92d2" stroke-width="1.5"/><line x1="603.90" y1="556.40" x2="603.90" y2="576.50" stroke="#3a92d2" stroke-width="1.5"/><line x1="611.60" y1="556.40" x2="611.60" y2="576.50" stroke="#3a92d2" stroke-width="1.5"/><line x1="616.00" y1="556.40" x2="616.00" y2="576.50" stroke="#3a92d2" stroke-width="1.5"/><line x1="633.20" y1="556.40" x2="633.20" y2="576.50" stroke="#3a92d2" stroke-width="1.5"/><line x1="637.60" y1="556.40" x2="637.60" y2="576.50" stroke="#3a92d2" stroke-width="1.5"/><line x1="660.80" y1="556.40" x2="660.80" y2="576.50" stroke="#3a92d2" stroke-width="1.5"/><line x1="664.30" y1="556.40" x2="664.30" y2="576.50" stroke="#3a92d2" stroke-width="1.5"/><line x1="674.20" y1="556.40" x2="674.20" y2="576.50" stroke="#3a92d2" stroke-width="1.5"/><line x1="681.30" y1="556.40" x2="681.30" y2="576.50" stroke="#3a92d2" stroke-width="1.5"/><line x1="701.00" y1="556.40" x2="701.00" y2="576.50" stroke="#3a92d2" stroke-width="1.5"/><line x1="710.80" y1="556.40" x2="710.80" y2="576.50" stroke="#3a92d2" stroke-width="1.5"/><line x1="725.00" y1="556.40" x2="725.00" y2="576.50" stroke="#3a92d2" stroke-width="1.5"/><line x1="736.90" y1="556.40" x2="736.90" y2="576.50" stroke="#3a92d2" stroke-width="1.5"/><line x1="741.50" y1="556.40" x2="741.50" y2="576.50" stroke="#3a92d2" stroke-width="1.5"/><line x1="762.80" y1="556.40" x2="762.80" y2="576.50" stroke="#3a92d2" stroke-width="1.5"/><line x1="785.00" y1="556.40" x2="785.00" y2="576.50" stroke="#3a92d2" stroke-width="1.5"/><line x1="792.70" y1="556.40" x2="792.70" y2="576.50" stroke="#3a92d2" stroke-width="1.5"/><line x1="796.80" y1="556.40" x2="796.80" y2="576.50" stroke="#3a92d2" stroke-width="1.5"/><line x1="814.00" y1="556.40" x2="814.00" y2="576.50" stroke="#3a92d2" stroke-width="1.5"/><line x1="826.00" y1="556.40" x2="826.00" y2="576.50" stroke="#3a92d2" stroke-width="1.5"/><line x1="829.80" y1="556.40" x2="829.80" y2="576.50" stroke="#3a92d2" stroke-width="1.5"/><line x1="833.90" y1="556.40" x2="833.90" y2="576.50" stroke="#3a92d2" stroke-width="1.5"/><line x1="855.50" y1="556.40" x2="855.50" y2="576.50" stroke="#3a92d2" stroke-width="1.5"/><line x1="863.50" y1="556.40" x2="863.50" y2="576.50" stroke="#3a92d2" stroke-width="1.5"/><line x1="867.90" y1="556.40" x2="867.90" y2="576.50" stroke="#3a92d2" stroke-width="1.5"/><line x1="871.30" y1="556.40" x2="871.30" y2="576.50" stroke="#3a92d2" stroke-width="1.5"/><line x1="67.00" y1="578.50" x2="925.00" y2="578.50" stroke="#222" stroke-width="1.4"/><line x1="66.50" y1="578.50" x2="66.50" y2="582.50" stroke="#222" stroke-width="1.2"/><line x1="76.50" y1="578.50" x2="76.50" y2="587.00" stroke="#222" stroke-width="1.2"/><line x1="86.50" y1="578.50" x2="86.50" y2="582.50" stroke="#222" stroke-width="1.2"/><line x1="95.50" y1="578.50" x2="95.50" y2="582.50" stroke="#222" stroke-width="1.2"/><line x1="105.50" y1="578.50" x2="105.50" y2="582.50" stroke="#222" stroke-width="1.2"/><line x1="115.50" y1="578.50" x2="115.50" y2="582.50" stroke="#222" stroke-width="1.2"/><line x1="125.50" y1="578.50" x2="125.50" y2="582.50" stroke="#222" stroke-width="1.2"/><line x1="134.50" y1="578.50" x2="134.50" y2="582.50" stroke="#222" stroke-width="1.2"/><line x1="144.50" y1="578.50" x2="144.50" y2="582.50" stroke="#222" stroke-width="1.2"/><line x1="154.50" y1="578.50" x2="154.50" y2="582.50" stroke="#222" stroke-width="1.2"/><line x1="164.50" y1="578.50" x2="164.50" y2="582.50" stroke="#222" stroke-width="1.2"/><line x1="173.50" y1="578.50" x2="173.50" y2="587.00" stroke="#222" stroke-width="1.2"/><line x1="183.50" y1="578.50" x2="183.50" y2="582.50" stroke="#222" stroke-width="1.2"/><line x1="193.50" y1="578.50" x2="193.50" y2="582.50" stroke="#222" stroke-width="1.2"/><line x1="203.50" y1="578.50" x2="203.50" y2="582.50" stroke="#222" stroke-width="1.2"/><line x1="212.50" y1="578.50" x2="212.50" y2="582.50" stroke="#222" stroke-width="1.2"/><line x1="222.50" y1="578.50" x2="222.50" y2="582.50" stroke="#222" stroke-width="1.2"/><line x1="232.50" y1="578.50" x2="232.50" y2="582.50" stroke="#222" stroke-width="1.2"/><line x1="242.50" y1="578.50" x2="242.50" y2="582.50" stroke="#222" stroke-width="1.2"/><line x1="251.50" y1="578.50" x2="251.50" y2="582.50" stroke="#222" stroke-width="1.2"/><line x1="261.50" y1="578.50" x2="261.50" y2="582.50" stroke="#222" stroke-width="1.2"/><line x1="271.50" y1="578.50" x2="271.50" y2="587.00" stroke="#222" stroke-width="1.2"/><line x1="281.50" y1="578.50" x2="281.50" y2="582.50" stroke="#222" stroke-width="1.2"/><line x1="290.50" y1="578.50" x2="290.50" y2="582.50" stroke="#222" stroke-width="1.2"/><line x1="300.50" y1="578.50" x2="300.50" y2="582.50" stroke="#222" stroke-width="1.2"/><line x1="310.50" y1="578.50" x2="310.50" y2="582.50" stroke="#222" stroke-width="1.2"/><line x1="320.50" y1="578.50" x2="320.50" y2="582.50" stroke="#222" stroke-width="1.2"/><line x1="329.50" y1="578.50" x2="329.50" y2="582.50" stroke="#222" stroke-width="1.2"/><line x1="339.50" y1="578.50" x2="339.50" y2="582.50" stroke="#222" stroke-width="1.2"/><line x1="349.50" y1="578.50" x2="349.50" y2="582.50" stroke="#222" stroke-width="1.2"/><line x1="359.50" y1="578.50" x2="359.50" y2="582.50" stroke="#222" stroke-width="1.2"/><line x1="368.50" y1="578.50" x2="368.50" y2="587.00" stroke="#222" stroke-width="1.2"/><line x1="378.50" y1="578.50" x2="378.50" y2="582.50" stroke="#222" stroke-width="1.2"/><line x1="388.50" y1="578.50" x2="388.50" y2="582.50" stroke="#222" stroke-width="1.2"/><line x1="398.50" y1="578.50" x2="398.50" y2="582.50" stroke="#222" stroke-width="1.2"/><line x1="407.50" y1="578.50" x2="407.50" y2="582.50" stroke="#222" stroke-width="1.2"/><line x1="417.50" y1="578.50" x2="417.50" y2="582.50" stroke="#222" stroke-width="1.2"/><line x1="427.50" y1="578.50" x2="427.50" y2="582.50" stroke="#222" stroke-width="1.2"/><line x1="437.50" y1="578.50" x2="437.50" y2="582.50" stroke="#222" stroke-width="1.2"/><line x1="446.50" y1="578.50" x2="446.50" y2="582.50" stroke="#222" stroke-width="1.2"/><line x1="456.50" y1="578.50" x2="456.50" y2="582.50" stroke="#222" stroke-width="1.2"/><line x1="466.50" y1="578.50" x2="466.50" y2="587.00" stroke="#222" stroke-width="1.2"/><line x1="476.50" y1="578.50" x2="476.50" y2="582.50" stroke="#222" stroke-width="1.2"/><line x1="485.50" y1="578.50" x2="485.50" y2="582.50" stroke="#222" stroke-width="1.2"/><line x1="495.50" y1="578.50" x2="495.50" y2="582.50" stroke="#222" stroke-width="1.2"/><line x1="505.50" y1="578.50" x2="505.50" y2="582.50" stroke="#222" stroke-width="1.2"/><line x1="515.50" y1="578.50" x2="515.50" y2="582.50" stroke="#222" stroke-width="1.2"/><line x1="524.50" y1="578.50" x2="524.50" y2="582.50" stroke="#222" stroke-width="1.2"/><line x1="534.50" y1="578.50" x2="534.50" y2="582.50" stroke="#222" stroke-width="1.2"/><line x1="544.50" y1="578.50" x2="544.50" y2="582.50" stroke="#222" stroke-width="1.2"/><line x1="554.50" y1="578.50" x2="554.50" y2="582.50" stroke="#222" stroke-width="1.2"/><line x1="563.50" y1="578.50" x2="563.50" y2="587.00" stroke="#222" stroke-width="1.2"/><line x1="573.50" y1="578.50" x2="573.50" y2="582.50" stroke="#222" stroke-width="1.2"/><line x1="583.50" y1="578.50" x2="583.50" y2="582.50" stroke="#222" stroke-width="1.2"/><line x1="593.50" y1="578.50" x2="593.50" y2="582.50" stroke="#222" stroke-width="1.2"/><line x1="602.50" y1="578.50" x2="602.50" y2="582.50" stroke="#222" stroke-width="1.2"/><line x1="612.50" y1="578.50" x2="612.50" y2="582.50" stroke="#222" stroke-width="1.2"/><line x1="622.50" y1="578.50" x2="622.50" y2="582.50" stroke="#222" stroke-width="1.2"/><line x1="632.50" y1="578.50" x2="632.50" y2="582.50" stroke="#222" stroke-width="1.2"/><line x1="641.50" y1="578.50" x2="641.50" y2="582.50" stroke="#222" stroke-width="1.2"/><line x1="651.50" y1="578.50" x2="651.50" y2="582.50" stroke="#222" stroke-width="1.2"/><line x1="661.50" y1="578.50" x2="661.50" y2="587.00" stroke="#222" stroke-width="1.2"/><line x1="671.50" y1="578.50" x2="671.50" y2="582.50" stroke="#222" stroke-width="1.2"/><line x1="680.50" y1="578.50" x2="680.50" y2="582.50" stroke="#222" stroke-width="1.2"/><line x1="690.50" y1="578.50" x2="690.50" y2="582.50" stroke="#222" stroke-width="1.2"/><line x1="700.50" y1="578.50" x2="700.50" y2="582.50" stroke="#222" stroke-width="1.2"/><line x1="710.50" y1="578.50" x2="710.50" y2="582.50" stroke="#222" stroke-width="1.2"/><line x1="719.50" y1="578.50" x2="719.50" y2="582.50" stroke="#222" stroke-width="1.2"/><line x1="729.50" y1="578.50" x2="729.50" y2="582.50" stroke="#222" stroke-width="1.2"/><line x1="739.50" y1="578.50" x2="739.50" y2="582.50" stroke="#222" stroke-width="1.2"/><line x1="749.50" y1="578.50" x2="749.50" y2="582.50" stroke="#222" stroke-width="1.2"/><line x1="758.50" y1="578.50" x2="758.50" y2="587.00" stroke="#222" stroke-width="1.2"/><line x1="768.50" y1="578.50" x2="768.50" y2="582.50" stroke="#222" stroke-width="1.2"/><line x1="778.50" y1="578.50" x2="778.50" y2="582.50" stroke="#222" stroke-width="1.2"/><line x1="788.50" y1="578.50" x2="788.50" y2="582.50" stroke="#222" stroke-width="1.2"/><line x1="797.50" y1="578.50" x2="797.50" y2="582.50" stroke="#222" stroke-width="1.2"/><line x1="807.50" y1="578.50" x2="807.50" y2="582.50" stroke="#222" stroke-width="1.2"/><line x1="817.50" y1="578.50" x2="817.50" y2="582.50" stroke="#222" stroke-width="1.2"/><line x1="827.50" y1="578.50" x2="827.50" y2="582.50" stroke="#222" stroke-width="1.2"/><line x1="836.50" y1="578.50" x2="836.50" y2="582.50" stroke="#222" stroke-width="1.2"/><line x1="846.50" y1="578.50" x2="846.50" y2="582.50" stroke="#222" stroke-width="1.2"/><line x1="856.50" y1="578.50" x2="856.50" y2="587.00" stroke="#222" stroke-width="1.2"/><line x1="866.50" y1="578.50" x2="866.50" y2="582.50" stroke="#222" stroke-width="1.2"/><line x1="875.50" y1="578.50" x2="875.50" y2="582.50" stroke="#222" stroke-width="1.2"/><line x1="885.50" y1="578.50" x2="885.50" y2="582.50" stroke="#222" stroke-width="1.2"/><line x1="895.50" y1="578.50" x2="895.50" y2="582.50" stroke="#222" stroke-width="1.2"/><line x1="905.50" y1="578.50" x2="905.50" y2="582.50" stroke="#222" stroke-width="1.2"/><line x1="914.50" y1="578.50" x2="914.50" y2="582.50" stroke="#222" stroke-width="1.2"/></svg>
<div class="t" style="left:-53.8px;width:300px;text-align:right;top:626.53px;color:#4a4a4a;font-size:10px;">0</div><div class="t" style="left:-53.8px;width:300px;text-align:right;top:543.43px;color:#4a4a4a;font-size:10px;">10000</div><div class="t" style="left:-53.8px;width:300px;text-align:right;top:460.34px;color:#4a4a4a;font-size:10px;">20000</div><div class="t" style="left:-53.8px;width:300px;text-align:right;top:377.24px;color:#4a4a4a;font-size:10px;">30000</div><div class="t" style="left:-53.8px;width:300px;text-align:right;top:294.14px;color:#4a4a4a;font-size:10px;">40000</div><div class="t" style="left:-53.8px;width:300px;text-align:right;top:211.03px;color:#4a4a4a;font-size:10px;">50000</div><div class="t" style="left:165.5px;width:200px;text-align:center;top:772.73px;color:#444;font-size:10px;">0</div><div class="t" style="left:263.0px;width:200px;text-align:center;top:772.73px;color:#444;font-size:10px;">10</div><div class="t" style="left:360.5px;width:200px;text-align:center;top:772.73px;color:#444;font-size:10px;">20</div><div class="t" style="left:457.9px;width:200px;text-align:center;top:772.73px;color:#444;font-size:10px;">30</div><div class="t" style="left:555.4px;width:200px;text-align:center;top:772.73px;color:#444;font-size:10px;">40</div><div class="t" style="left:652.9px;width:200px;text-align:center;top:772.73px;color:#444;font-size:10px;">50</div><div class="t" style="left:750.4px;width:200px;text-align:center;top:772.73px;color:#444;font-size:10px;">60</div><div class="t" style="left:847.8px;width:200px;text-align:center;top:772.73px;color:#444;font-size:10px;">70</div><div class="t" style="left:945.3px;width:200px;text-align:center;top:772.73px;color:#444;font-size:10px;">80</div><div class="t" style="left:664.5px;top:786.99px;color:#5a7a90;font-size:11px;">2θ, deg.</div><div class="t" style="left:193.0px;top:663.93px;color:#505050;font-size:9px;">Candidate</div><div class="t" style="left:193.0px;top:691.13px;color:#505050;font-size:9px;">Not associated</div><div class="t" style="left:193.0px;top:718.13px;color:#505050;font-size:9px;">Sample</div><div class="t" style="left:193.0px;top:744.48px;color:#505050;font-size:9px;">Experimental</div><div class="t" style="left:142px;top:409px;width:120px;text-align:center;color:#5a7a90;font-size:11.5px;transform:rotate(-90deg)">Intensity, Counts</div>
<svg class="r" style="left:959px;top:196px;" width="12" height="12" viewBox="0 0 12 12"><rect x="0.5" y="0.5" width="11" height="11" fill="#fff" stroke="#a0a0a0"/><path d="M2.5 6 L5 8.5 L9.5 3" stroke="#333" stroke-width="1.2" fill="none"/></svg><div class="t" style="left:1020.7px;top:197.44px;color:#505050;font-size:10px;">Experimental</div><svg class="r" style="left:959px;top:230px;" width="12" height="12" viewBox="0 0 12 12"><rect x="0.5" y="0.5" width="11" height="11" fill="#fff" stroke="#a0a0a0"/><path d="M2.5 6 L5 8.5 L9.5 3" stroke="#333" stroke-width="1.2" fill="none"/></svg><div class="t" style="left:1020.7px;top:231.44px;color:#505050;font-size:10px;">Background</div><svg class="r" style="left:959px;top:264px;" width="12" height="12" viewBox="0 0 12 12"><rect x="0.5" y="0.5" width="11" height="11" fill="#fff" stroke="#a0a0a0"/></svg><div class="t" style="left:1020.7px;top:265.24px;color:#505050;font-size:10px;">Peaks simulation</div><svg class="r" style="left:959px;top:297px;" width="12" height="12" viewBox="0 0 12 12"><rect x="0.5" y="0.5" width="11" height="11" fill="#fff" stroke="#a0a0a0"/></svg><div class="t" style="left:1020.7px;top:298.54px;color:#505050;font-size:10px;">Theoretical</div>
<div class="r" style="left:1124px;top:135px;width:464px;height:444px;background:#efece7;border:1px solid #c8c5c0"></div><div class="r" style="left:1125px;top:136px;width:462px;height:27px;background:#e6e0db;border-bottom:1px solid #c4c0bb"></div><div class="t" style="left:1132.0px;top:144.94px;color:#2a4a6c;font-size:10px;font-weight:bold;">Search/Match</div><svg class="r" style="left:1570.5px;top:146px;" width="7" height="9" viewBox="0 0 7 9"><rect x="1" y="0" width="5" height="4.2" fill="#3a3a3a"/><rect x="1.6" y="0.6" width="1.6" height="3.4" fill="#999"/><rect x="0" y="4" width="7" height="1.3" fill="#333"/><rect x="3" y="5" width="1" height="2.6" fill="#444"/></svg>
<div class="t" style="left:1134.4px;top:177.44px;color:#505050;font-size:10px;">Primary search/match algorithm</div>
<div class="t" style="left:1134.4px;top:199.44px;color:#505050;font-size:10px;">Maximum candidates number</div>
<div class="r" style="left:1279px;top:173px;width:298px;height:18px;background:#fff;border:1px solid #c9c6c2"></div>
<div class="t" style="left:1258.8px;width:300px;text-align:right;top:177.44px;color:#505050;font-size:10px;">Bayesian</div>
<svg class="r" style="left:1565px;top:180px;" width="10" height="6" viewBox="0 0 10 6"><path d="M1 1 L9 1 L5 5Z" fill="#333"/></svg>
<div class="r" style="left:1279px;top:195px;width:298px;height:18px;background:#fff;border:1px solid #c9c6c2"></div>
<div class="t" style="left:1258.8px;width:300px;text-align:right;top:199.44px;color:#505050;font-size:10px;">50</div>
<svg class="r" style="left:1565px;top:197px;" width="10" height="14" viewBox="0 0 10 14"><path d="M1.5 5 L5 1.5 L8.5 5Z M1.5 9 L8.5 9 L5 12.5Z" fill="#333"/></svg>
<div class="r" style="left:1134px;top:216px;width:443px;height:331px;background:#efece7;border:1px solid #cfccc7"></div>
<div class="r" style="left:1135px;top:217px;width:441px;height:17px;background:#efece7;border-bottom:1px solid #cfccc7"></div>
<div class="t" style="left:1144.6px;top:221.44px;color:#505050;font-size:10px;">Search result</div>
<div class="r" style="left:1144.6px;top:244px;width:422.4000000000001px;height:16px;background:#fff;border:1px solid #d0cdc8"></div><div class="t" style="left:1255.8px;width:200px;text-align:center;top:247.03px;color:#505050;font-size:10px;">Refresh list of candidates</div>
<div class="r" style="left:1145px;top:264px;width:422px;height:211px;background:#fff;border:1px solid #c5c2be"></div>
<div class="r" style="left:1146px;top:265px;width:420px;height:18px;background:#efece8;border-bottom:1px solid #cfcbc6"></div>
<div class="t" style="left:1086.0px;width:200px;text-align:center;top:269.44px;color:#505050;font-size:10px;">Phase name</div>
<div class="r" style="left:1226.5px;top:265px;width:1px;height:18px;background:#d4d0cb"></div>
<div class="t" style="left:1161.5px;width:200px;text-align:center;top:269.44px;color:#505050;font-size:10px;">Formula</div>
<div class="r" style="left:1296.4px;top:265px;width:1px;height:18px;background:#d4d0cb"></div>
<div class="t" style="left:1299.9px;top:269.44px;color:#505050;font-size:10px;">Crystal syst...</div>
<div class="r" style="left:1360px;top:265px;width:1px;height:18px;background:#d4d0cb"></div>
<div class="t" style="left:1292.2px;width:200px;text-align:center;top:269.44px;color:#505050;font-size:10px;">Card ID</div>
<div class="r" style="left:1424.5px;top:265px;width:1px;height:18px;background:#d4d0cb"></div>
<div class="t" style="left:1427.5px;top:269.44px;color:#505050;font-size:10px;">Probabil...</div>
<svg class="r" style="left:1476px;top:273px;" width="8" height="5" viewBox="0 0 8 5"><path d="M0.5 0.5 L7.5 0.5 L4 4.5Z" fill="#333"/></svg>
<div class="r" style="left:1487.5px;top:265px;width:1px;height:18px;background:#d4d0cb"></div>
<div class="t" style="left:1420.0px;width:200px;text-align:center;top:269.44px;color:#505050;font-size:10px;">FOM</div>
<div class="r" style="left:1552.6px;top:265px;width:1px;height:18px;background:#d4d0cb"></div>
<div class="r" style="left:1161.4px;top:283px;width:391.1999999999998px;height:17px;background:#b4b4b4"></div>
<div class="r" style="left:1161.4px;top:283px;width:65.09999999999991px;height:17px;background:#e8e8e8"></div>
<div class="r" style="left:1161.4px;top:300px;width:391.1999999999998px;height:18px;background:#f5f5f5"></div>
<div class="r" style="left:1161.4px;top:335px;width:391.1999999999998px;height:18px;background:#f5f5f5"></div>
<div class="r" style="left:1161.4px;top:370px;width:391.1999999999998px;height:18px;background:#f5f5f5"></div>
<div class="r" style="left:1161.4px;top:405px;width:391.1999999999998px;height:18px;background:#f5f5f5"></div>
<div class="r" style="left:1161.4px;top:440px;width:391.1999999999998px;height:17px;background:#f5f5f5"></div>
<div class="r" style="left:1161.4px;top:300px;width:391.1999999999998px;height:1px;background:#e2e2e2"></div>
<div class="r" style="left:1161.4px;top:283px;width:1px;height:18px;background:#e2e2e2"></div>
<div class="r" style="left:1226.5px;top:283px;width:1px;height:18px;background:#e2e2e2"></div>
<div class="r" style="left:1296.4px;top:283px;width:1px;height:18px;background:#e2e2e2"></div>
<div class="r" style="left:1360px;top:283px;width:1px;height:18px;background:#e2e2e2"></div>
<div class="r" style="left:1424.5px;top:283px;width:1px;height:18px;background:#e2e2e2"></div>
<div class="r" style="left:1487.5px;top:283px;width:1px;height:18px;background:#e2e2e2"></div>
<div class="r" style="left:1552.6px;top:283px;width:1px;height:18px;background:#e2e2e2"></div>
<svg class="r" style="left:1152px;top:288px;" width="5" height="8" viewBox="0 0 5 8"><path d="M1 0.5 L4.5 4 L1 7.5Z" fill="#222"/></svg>
<div class="t" style="left:1165.0px;top:286.94px;color:#505050;font-size:10px;">Silicon Oxide</div>
<div class="t" style="left:1229.7px;top:286.94px;color:#505050;font-size:10px;">Si O2</div>
<div class="t" style="left:1299.9px;top:286.94px;color:#505050;font-size:10px;">Hexagonal</div>
<div class="t" style="left:1292.2px;width:200px;text-align:center;top:286.94px;color:#505050;font-size:10px;">04-005-4718</div>
<div class="t" style="left:1356.0px;width:200px;text-align:center;top:286.94px;color:#505050;font-size:10px;">0,956</div>
<div class="t" style="left:1420.0px;width:200px;text-align:center;top:286.94px;color:#505050;font-size:10px;">2,236</div>
<div class="r" style="left:1161.4px;top:318px;width:391.1999999999998px;height:1px;background:#e2e2e2"></div>
<div class="r" style="left:1161.4px;top:300px;width:1px;height:18px;background:#e2e2e2"></div>
<div class="r" style="left:1226.5px;top:300px;width:1px;height:18px;background:#e2e2e2"></div>
<div class="r" style="left:1296.4px;top:300px;width:1px;height:18px;background:#e2e2e2"></div>
<div class="r" style="left:1360px;top:300px;width:1px;height:18px;background:#e2e2e2"></div>
<div class="r" style="left:1424.5px;top:300px;width:1px;height:18px;background:#e2e2e2"></div>
<div class="r" style="left:1487.5px;top:300px;width:1px;height:18px;background:#e2e2e2"></div>
<div class="r" style="left:1552.6px;top:300px;width:1px;height:18px;background:#e2e2e2"></div>
<div class="t" style="left:1165.0px;top:304.38px;color:#505050;font-size:10px;">Silicon Oxide</div>
<div class="t" style="left:1229.7px;top:304.38px;color:#505050;font-size:10px;">Si O2</div>
<div class="t" style="left:1299.9px;top:304.38px;color:#505050;font-size:10px;">Triclinic</div>
<div class="t" style="left:1292.2px;width:200px;text-align:center;top:304.38px;color:#505050;font-size:10px;">04-007-0522</div>
<div class="t" style="left:1356.0px;width:200px;text-align:center;top:304.38px;color:#505050;font-size:10px;">0,939</div>
<div class="t" style="left:1420.0px;width:200px;text-align:center;top:304.38px;color:#505050;font-size:10px;">2,199</div>
<div class="r" style="left:1161.4px;top:335px;width:391.1999999999998px;height:1px;background:#e2e2e2"></div>
<div class="r" style="left:1161.4px;top:318px;width:1px;height:18px;background:#e2e2e2"></div>
<div class="r" style="left:1226.5px;top:318px;width:1px;height:18px;background:#e2e2e2"></div>
<div class="r" style="left:1296.4px;top:318px;width:1px;height:18px;background:#e2e2e2"></div>
<div class="r" style="left:1360px;top:318px;width:1px;height:18px;background:#e2e2e2"></div>
<div class="r" style="left:1424.5px;top:318px;width:1px;height:18px;background:#e2e2e2"></div>
<div class="r" style="left:1487.5px;top:318px;width:1px;height:18px;background:#e2e2e2"></div>
<div class="r" style="left:1552.6px;top:318px;width:1px;height:18px;background:#e2e2e2"></div>
<svg class="r" style="left:1152px;top:322px;" width="5" height="8" viewBox="0 0 5 8"><path d="M1 0.5 L4.5 4 L1 7.5Z" fill="#222"/></svg>
<div class="t" style="left:1165.0px;top:321.83px;color:#505050;font-size:10px;">Germaniu...</div>
<div class="t" style="left:1229.7px;top:321.83px;color:#505050;font-size:10px;">Ge0.07 Si0.9...</div>
<div class="t" style="left:1299.9px;top:321.83px;color:#505050;font-size:10px;">Hexagonal</div>
<div class="t" style="left:1292.2px;width:200px;text-align:center;top:321.83px;color:#505050;font-size:10px;">04-018-2594</div>
<div class="t" style="left:1356.0px;width:200px;text-align:center;top:321.83px;color:#505050;font-size:10px;">0,623</div>
<div class="t" style="left:1420.0px;width:200px;text-align:center;top:321.83px;color:#505050;font-size:10px;">3,259</div>
<div class="r" style="left:1161.4px;top:353px;width:391.1999999999998px;height:1px;background:#e2e2e2"></div>
<div class="r" style="left:1161.4px;top:335px;width:1px;height:18px;background:#e2e2e2"></div>
<div class="r" style="left:1226.5px;top:335px;width:1px;height:18px;background:#e2e2e2"></div>
<div class="r" style="left:1296.4px;top:335px;width:1px;height:18px;background:#e2e2e2"></div>
<div class="r" style="left:1360px;top:335px;width:1px;height:18px;background:#e2e2e2"></div>
<div class="r" style="left:1424.5px;top:335px;width:1px;height:18px;background:#e2e2e2"></div>
<div class="r" style="left:1487.5px;top:335px;width:1px;height:18px;background:#e2e2e2"></div>
<div class="r" style="left:1552.6px;top:335px;width:1px;height:18px;background:#e2e2e2"></div>
<div class="t" style="left:1165.0px;top:339.29px;color:#505050;font-size:10px;">Rhenium T...</div>
<div class="t" style="left:1229.7px;top:339.29px;color:#505050;font-size:10px;">Re0.8 Ta0.1...</div>
<div class="t" style="left:1299.9px;top:339.29px;color:#505050;font-size:10px;">Unknown</div>
<div class="t" style="left:1292.2px;width:200px;text-align:center;top:339.29px;color:#505050;font-size:10px;">00-023-0608</div>
<div class="t" style="left:1356.0px;width:200px;text-align:center;top:339.29px;color:#505050;font-size:10px;">0,158</div>
<div class="t" style="left:1420.0px;width:200px;text-align:center;top:339.29px;color:#505050;font-size:10px;">9999,000</div>
<div class="r" style="left:1161.4px;top:370px;width:391.1999999999998px;height:1px;background:#e2e2e2"></div>
<div class="r" style="left:1161.4px;top:353px;width:1px;height:18px;background:#e2e2e2"></div>
<div class="r" style="left:1226.5px;top:353px;width:1px;height:18px;background:#e2e2e2"></div>
<div class="r" style="left:1296.4px;top:353px;width:1px;height:18px;background:#e2e2e2"></div>
<div class="r" style="left:1360px;top:353px;width:1px;height:18px;background:#e2e2e2"></div>
<div class="r" style="left:1424.5px;top:353px;width:1px;height:18px;background:#e2e2e2"></div>
<div class="r" style="left:1487.5px;top:353px;width:1px;height:18px;background:#e2e2e2"></div>
<div class="r" style="left:1552.6px;top:353px;width:1px;height:18px;background:#e2e2e2"></div>
<div class="t" style="left:1165.0px;top:356.74px;color:#505050;font-size:10px;">Iron Nickel</div>
<div class="t" style="left:1229.7px;top:356.74px;color:#505050;font-size:10px;">Fe0.9 Ni0.1</div>
<div class="t" style="left:1299.9px;top:356.74px;color:#505050;font-size:10px;">Hexagonal</div>
<div class="t" style="left:1292.2px;width:200px;text-align:center;top:356.74px;color:#505050;font-size:10px;">04-004-8511</div>
<div class="t" style="left:1356.0px;width:200px;text-align:center;top:356.74px;color:#505050;font-size:10px;">0,151</div>
<div class="t" style="left:1420.0px;width:200px;text-align:center;top:356.74px;color:#505050;font-size:10px;">9999,000</div>
<div class="r" style="left:1161.4px;top:388px;width:391.1999999999998px;height:1px;background:#e2e2e2"></div>
<div class="r" style="left:1161.4px;top:370px;width:1px;height:18px;background:#e2e2e2"></div>
<div class="r" style="left:1226.5px;top:370px;width:1px;height:18px;background:#e2e2e2"></div>
<div class="r" style="left:1296.4px;top:370px;width:1px;height:18px;background:#e2e2e2"></div>
<div class="r" style="left:1360px;top:370px;width:1px;height:18px;background:#e2e2e2"></div>
<div class="r" style="left:1424.5px;top:370px;width:1px;height:18px;background:#e2e2e2"></div>
<div class="r" style="left:1487.5px;top:370px;width:1px;height:18px;background:#e2e2e2"></div>
<div class="r" style="left:1552.6px;top:370px;width:1px;height:18px;background:#e2e2e2"></div>
<div class="t" style="left:1165.0px;top:374.19px;color:#505050;font-size:10px;">Beryllium C...</div>
<div class="t" style="left:1229.7px;top:374.19px;color:#505050;font-size:10px;">Be2 Cu0.5 G...</div>
<div class="t" style="left:1299.9px;top:374.19px;color:#505050;font-size:10px;">Cubic</div>
<div class="t" style="left:1292.2px;width:200px;text-align:center;top:374.19px;color:#505050;font-size:10px;">04-001-4486</div>
<div class="t" style="left:1356.0px;width:200px;text-align:center;top:374.19px;color:#505050;font-size:10px;">0,126</div>
<div class="t" style="left:1420.0px;width:200px;text-align:center;top:374.19px;color:#505050;font-size:10px;">9999,000</div>
<div class="r" style="left:1161.4px;top:405px;width:391.1999999999998px;height:1px;background:#e2e2e2"></div>
<div class="r" style="left:1161.4px;top:388px;width:1px;height:18px;background:#e2e2e2"></div>
<div class="r" style="left:1226.5px;top:388px;width:1px;height:18px;background:#e2e2e2"></div>
<div class="r" style="left:1296.4px;top:388px;width:1px;height:18px;background:#e2e2e2"></div>
<div class="r" style="left:1360px;top:388px;width:1px;height:18px;background:#e2e2e2"></div>
<div class="r" style="left:1424.5px;top:388px;width:1px;height:18px;background:#e2e2e2"></div>
<div class="r" style="left:1487.5px;top:388px;width:1px;height:18px;background:#e2e2e2"></div>
<div class="r" style="left:1552.6px;top:388px;width:1px;height:18px;background:#e2e2e2"></div>
<div class="t" style="left:1165.0px;top:391.63px;color:#505050;font-size:10px;">Indium Ger...</div>
<div class="t" style="left:1229.7px;top:391.63px;color:#505050;font-size:10px;">In0.5 Ge0.5 Te</div>
<div class="t" style="left:1299.9px;top:391.63px;color:#505050;font-size:10px;">Cubic</div>
<div class="t" style="left:1292.2px;width:200px;text-align:center;top:391.63px;color:#505050;font-size:10px;">04-005-2969</div>
<div class="t" style="left:1356.0px;width:200px;text-align:center;top:391.63px;color:#505050;font-size:10px;">0,126</div>
<div class="t" style="left:1420.0px;width:200px;text-align:center;top:391.63px;color:#505050;font-size:10px;">9999,000</div>
<div class="r" style="left:1161.4px;top:423px;width:391.1999999999998px;height:1px;background:#e2e2e2"></div>
<div class="r" style="left:1161.4px;top:405px;width:1px;height:18px;background:#e2e2e2"></div>
<div class="r" style="left:1226.5px;top:405px;width:1px;height:18px;background:#e2e2e2"></div>
<div class="r" style="left:1296.4px;top:405px;width:1px;height:18px;background:#e2e2e2"></div>
<div class="r" style="left:1360px;top:405px;width:1px;height:18px;background:#e2e2e2"></div>
<div class="r" style="left:1424.5px;top:405px;width:1px;height:18px;background:#e2e2e2"></div>
<div class="r" style="left:1487.5px;top:405px;width:1px;height:18px;background:#e2e2e2"></div>
<div class="r" style="left:1552.6px;top:405px;width:1px;height:18px;background:#e2e2e2"></div>
<div class="t" style="left:1165.0px;top:409.08px;color:#505050;font-size:10px;">Mercury G...</div>
<div class="t" style="left:1229.7px;top:409.08px;color:#505050;font-size:10px;">Hg0.54 Ga0....</div>
<div class="t" style="left:1299.9px;top:409.08px;color:#505050;font-size:10px;">Tetragonal</div>
<div class="t" style="left:1292.2px;width:200px;text-align:center;top:409.08px;color:#505050;font-size:10px;">04-023-1414</div>
<div class="t" style="left:1356.0px;width:200px;text-align:center;top:409.08px;color:#505050;font-size:10px;">0,124</div>
<div class="t" style="left:1420.0px;width:200px;text-align:center;top:409.08px;color:#505050;font-size:10px;">9999,000</div>
<div class="r" style="left:1161.4px;top:440px;width:391.1999999999998px;height:1px;background:#e2e2e2"></div>
<div class="r" style="left:1161.4px;top:423px;width:1px;height:18px;background:#e2e2e2"></div>
<div class="r" style="left:1226.5px;top:423px;width:1px;height:18px;background:#e2e2e2"></div>
<div class="r" style="left:1296.4px;top:423px;width:1px;height:18px;background:#e2e2e2"></div>
<div class="r" style="left:1360px;top:423px;width:1px;height:18px;background:#e2e2e2"></div>
<div class="r" style="left:1424.5px;top:423px;width:1px;height:18px;background:#e2e2e2"></div>
<div class="r" style="left:1487.5px;top:423px;width:1px;height:18px;background:#e2e2e2"></div>
<div class="r" style="left:1552.6px;top:423px;width:1px;height:18px;background:#e2e2e2"></div>
<div class="t" style="left:1165.0px;top:426.54px;color:#505050;font-size:10px;">Gallium Lit...</div>
<div class="t" style="left:1229.7px;top:426.54px;color:#505050;font-size:10px;">Li Pt Ga2</div>
<div class="t" style="left:1299.9px;top:426.54px;color:#505050;font-size:10px;">Cubic</div>
<div class="t" style="left:1292.2px;width:200px;text-align:center;top:426.54px;color:#505050;font-size:10px;">04-003-8024</div>
<div class="t" style="left:1356.0px;width:200px;text-align:center;top:426.54px;color:#505050;font-size:10px;">0,118</div>
<div class="t" style="left:1420.0px;width:200px;text-align:center;top:426.54px;color:#505050;font-size:10px;">9999,000</div>
<div class="r" style="left:1161.4px;top:457px;width:391.1999999999998px;height:1px;background:#e2e2e2"></div>
<div class="r" style="left:1161.4px;top:440px;width:1px;height:18px;background:#e2e2e2"></div>
<div class="r" style="left:1226.5px;top:440px;width:1px;height:18px;background:#e2e2e2"></div>
<div class="r" style="left:1296.4px;top:440px;width:1px;height:18px;background:#e2e2e2"></div>
<div class="r" style="left:1360px;top:440px;width:1px;height:18px;background:#e2e2e2"></div>
<div class="r" style="left:1424.5px;top:440px;width:1px;height:18px;background:#e2e2e2"></div>
<div class="r" style="left:1487.5px;top:440px;width:1px;height:18px;background:#e2e2e2"></div>
<div class="r" style="left:1552.6px;top:440px;width:1px;height:18px;background:#e2e2e2"></div>
<div class="t" style="left:1165.0px;top:443.98px;color:#505050;font-size:10px;">Silicon Sulf...</div>
<div class="t" style="left:1229.7px;top:443.98px;color:#505050;font-size:10px;">Si S2</div>
<div class="t" style="left:1299.9px;top:443.98px;color:#505050;font-size:10px;">Hexagonal</div>
<div class="t" style="left:1292.2px;width:200px;text-align:center;top:443.98px;color:#505050;font-size:10px;">00-047-1376</div>
<div class="t" style="left:1356.0px;width:200px;text-align:center;top:443.98px;color:#505050;font-size:10px;">0,104</div>
<div class="t" style="left:1420.0px;width:200px;text-align:center;top:443.98px;color:#505050;font-size:10px;">9999,000</div>
<div class="r" style="left:1553px;top:282px;width:13px;height:192px;background:#f0f0f0"></div>
<div class="r" style="left:1554px;top:284px;width:11px;height:12px;background:#fcfcfc;border:1px solid #e0e0e0"></div>
<svg class="r" style="left:1555px;top:287px;" width="9" height="6" viewBox="0 0 9 6"><path d="M1 5 L4.5 1.5 L8 5Z" fill="#c0c0c0"/></svg>
<div class="r" style="left:1554px;top:460px;width:11px;height:12px;background:#fcfcfc;border:1px solid #e0e0e0"></div>
<svg class="r" style="left:1555px;top:464px;" width="9" height="6" viewBox="0 0 9 6"><path d="M1 1 L8 1 L4.5 4.5Z" fill="#c0c0c0"/></svg>
<div class="r" style="left:1144.6px;top:479.6px;width:54.0px;height:15.899999999999977px;background:#fff;border:1px solid #d0cdc8"></div><div class="t" style="left:1071.6px;width:200px;text-align:center;top:482.59px;color:#505050;font-size:10px;">Remove</div>
<div class="r" style="left:1202.2px;top:479.6px;width:108.79999999999995px;height:15.899999999999977px;background:#fff;border:1px solid #d0cdc8"></div><div class="t" style="left:1156.6px;width:200px;text-align:center;top:482.59px;color:#505050;font-size:10px;">Import card from DB</div>
<div class="r" style="left:1477.6px;top:479.6px;width:89.40000000000009px;height:15.899999999999977px;background:#fff;border:1px solid #d0cdc8"></div><div class="t" style="left:1422.3px;width:200px;text-align:center;top:482.59px;color:#505050;font-size:10px;">Move to sample</div>
<svg class="r" style="left:1144px;top:502px;" width="12" height="12" viewBox="0 0 12 12"><rect x="0.5" y="0.5" width="11" height="11" fill="#fff" stroke="#a0a0a0"/><path d="M2.5 6 L5 8.5 L9.5 3" stroke="#333" stroke-width="1.2" fill="none"/></svg>
<div class="t" style="left:1159.6px;top:503.44px;color:#505050;font-size:10px;">Group candidates</div>
<div class="r" style="left:1425.4px;top:521px;width:141.5999999999999px;height:16.5px;background:#fff;border:1px solid #d0cdc8"></div><div class="t" style="left:1396.2px;width:200px;text-align:center;top:524.28px;color:#505050;font-size:10px;">Adjust phases automatically</div>
<div class="r" style="left:1125px;top:557px;width:462px;height:21px;background:#e8e1dc;border-top:1px solid #cfccc7;border-bottom:1px solid #cfccc7"></div>
<div class="r" style="left:1125px;top:557px;width:64px;height:21px;background:#efece7;border-right:1px solid #cfccc7"></div>
<div class="t" style="left:1134.4px;top:562.93px;color:#505050;font-size:10px;">Candidate</div>
<div class="t" style="left:1199.5px;top:562.93px;color:#505050;font-size:10px;">Bayesian algorithm</div>
<div class="t" style="left:1303.6px;top:562.93px;color:#505050;font-size:10px;">Peak position alg.</div>
<div class="t" style="left:1401.4px;top:562.93px;color:#505050;font-size:10px;">Excluded regions</div>
<div class="r" style="left:1124px;top:583px;width:464px;height:222px;background:#efece7;border:1px solid #c8c5c0"></div><div class="r" style="left:1125px;top:584px;width:462px;height:27px;background:#e6e0db;border-bottom:1px solid #c4c0bb"></div><div class="t" style="left:1132.0px;top:592.93px;color:#9a9a9a;font-size:10px;">Phases</div><svg class="r" style="left:1570.5px;top:594px;" width="7" height="9" viewBox="0 0 7 9"><rect x="1" y="0" width="5" height="4.2" fill="#3a3a3a"/><rect x="1.6" y="0.6" width="1.6" height="3.4" fill="#999"/><rect x="0" y="4" width="7" height="1.3" fill="#333"/><rect x="3" y="5" width="1" height="2.6" fill="#444"/></svg>
<div class="r" style="left:1125px;top:611px;width:462px;height:147px;background:#fff;border-bottom:1px solid #c5c2be"></div>
<div class="r" style="left:1125px;top:611px;width:462px;height:19px;background:#efece8;border-bottom:1px solid #c9c5c0"></div>
<div class="t" style="left:1059.7px;width:200px;text-align:center;top:615.93px;color:#505050;font-size:10px;">Phase name</div>
<div class="r" style="left:1194.4px;top:611px;width:1px;height:19px;background:#d4d2cf"></div>
<div class="t" style="left:1128.5px;width:200px;text-align:center;top:615.93px;color:#505050;font-size:10px;">Formula</div>
<div class="r" style="left:1262.5px;top:611px;width:1px;height:19px;background:#d4d2cf"></div>
<div class="t" style="left:1197.0px;width:200px;text-align:center;top:615.93px;color:#505050;font-size:10px;">Card ID</div>
<div class="r" style="left:1331.5px;top:611px;width:1px;height:19px;background:#d4d2cf"></div>
<div class="t" style="left:1266.2px;width:200px;text-align:center;top:615.93px;color:#505050;font-size:10px;">Probability</div>
<div class="r" style="left:1401px;top:611px;width:1px;height:19px;background:#d4d2cf"></div>
<div class="t" style="left:1335.2px;width:200px;text-align:center;top:615.93px;color:#505050;font-size:10px;">FOM</div>
<div class="r" style="left:1469.5px;top:611px;width:1px;height:19px;background:#d4d2cf"></div>
<div class="t" style="left:1404.0px;width:200px;text-align:center;top:615.93px;color:#505050;font-size:10px;">Scale factor</div>
<div class="r" style="left:1538.5px;top:611px;width:1px;height:19px;background:#d4d2cf"></div>
<div class="t" style="left:1455.8px;width:200px;text-align:center;top:615.93px;color:#505050;font-size:10px;">Color</div>
<div class="r" style="left:1573px;top:611px;width:1px;height:19px;background:#d4d2cf"></div>
<div class="r" style="left:1125px;top:647px;width:448px;height:1px;background:#e4e4e4"></div>
<div class="r" style="left:1194.4px;top:629px;width:1px;height:18px;background:#e4e4e4"></div>
<div class="r" style="left:1262.5px;top:629px;width:1px;height:18px;background:#e4e4e4"></div>
<div class="r" style="left:1331.5px;top:629px;width:1px;height:18px;background:#e4e4e4"></div>
<div class="r" style="left:1401px;top:629px;width:1px;height:18px;background:#e4e4e4"></div>
<div class="r" style="left:1469.5px;top:629px;width:1px;height:18px;background:#e4e4e4"></div>
<div class="r" style="left:1538.5px;top:629px;width:1px;height:18px;background:#e4e4e4"></div>
<div class="r" style="left:1573px;top:629px;width:1px;height:18px;background:#e4e4e4"></div>
<div class="t" style="left:1128.5px;top:633.83px;color:#505050;font-size:10px;">Corundum,...</div>
<div class="t" style="left:1198.0px;top:633.83px;color:#505050;font-size:10px;">Al2 O3</div>
<div class="t" style="left:1266.0px;top:633.83px;color:#505050;font-size:10px;">04-005-4213</div>
<div class="t" style="left:1097.5px;width:300px;text-align:right;top:633.83px;color:#505050;font-size:10px;">0,738</div>
<div class="t" style="left:1165.5px;width:300px;text-align:right;top:633.83px;color:#505050;font-size:10px;">4,005</div>
<div class="t" style="left:1234.5px;width:300px;text-align:right;top:633.83px;color:#505050;font-size:10px;">0,195</div>
<div class="r" style="left:1542px;top:633px;width:12px;height:11px;background:#e0184a"></div>
<div class="r" style="left:1125px;top:665px;width:448px;height:1px;background:#e4e4e4"></div>
<div class="r" style="left:1194.4px;top:647px;width:1px;height:18px;background:#e4e4e4"></div>
<div class="r" style="left:1262.5px;top:647px;width:1px;height:18px;background:#e4e4e4"></div>
<div class="r" style="left:1331.5px;top:647px;width:1px;height:18px;background:#e4e4e4"></div>
<div class="r" style="left:1401px;top:647px;width:1px;height:18px;background:#e4e4e4"></div>
<div class="r" style="left:1469.5px;top:647px;width:1px;height:18px;background:#e4e4e4"></div>
<div class="r" style="left:1538.5px;top:647px;width:1px;height:18px;background:#e4e4e4"></div>
<div class="r" style="left:1573px;top:647px;width:1px;height:18px;background:#e4e4e4"></div>
<div class="t" style="left:1128.5px;top:651.43px;color:#505050;font-size:10px;">Cristobalite,...</div>
<div class="t" style="left:1198.0px;top:651.43px;color:#505050;font-size:10px;">Si O2</div>
<div class="t" style="left:1266.0px;top:651.43px;color:#505050;font-size:10px;">00-071-0087</div>
<div class="t" style="left:1097.5px;width:300px;text-align:right;top:651.43px;color:#505050;font-size:10px;">0,345</div>
<div class="t" style="left:1165.5px;width:300px;text-align:right;top:651.43px;color:#505050;font-size:10px;">2,977</div>
<div class="t" style="left:1234.5px;width:300px;text-align:right;top:651.43px;color:#505050;font-size:10px;">0,129</div>
<div class="r" style="left:1542px;top:651px;width:12px;height:11px;background:#0a8078"></div>
<div class="r" style="left:1573px;top:630px;width:14px;height:127px;background:#f0f0f0"></div>
<svg class="r" style="left:1575px;top:634px;" width="9" height="6" viewBox="0 0 9 6"><path d="M1 5 L4.5 1.5 L8 5Z" fill="#c0c0c0"/></svg>
<svg class="r" style="left:1575px;top:746px;" width="9" height="6" viewBox="0 0 9 6"><path d="M1 1 L8 1 L4.5 4.5Z" fill="#c0c0c0"/></svg>
<div class="r" style="left:1126.6px;top:763.5px;width:53.40000000000009px;height:15.899999999999977px;background:#f3f1ee;border:1px solid #e0ddd8"></div><div class="t" style="left:1053.3px;width:200px;text-align:center;top:766.49px;color:#b8b6b3;font-size:10px;">Remove</div>
<div class="r" style="left:1186.6px;top:763.5px;width:109.40000000000009px;height:15.899999999999977px;background:#fff;border:1px solid #d0cdc8"></div><div class="t" style="left:1141.3px;width:200px;text-align:center;top:766.49px;color:#505050;font-size:10px;">Import card from DB</div>
<div class="r" style="left:1480px;top:763.5px;width:105.59999999999991px;height:15.899999999999977px;background:#f3f1ee;border:1px solid #e0ddd8"></div><div class="t" style="left:1432.8px;width:200px;text-align:center;top:766.49px;color:#b8b6b3;font-size:10px;">Move to candidates</div>
<div class="r" style="left:1125px;top:784px;width:462px;height:20px;background:#e8e1dc;border-top:1px solid #cfccc7"></div>
<div class="r" style="left:1125px;top:784px;width:49px;height:20px;background:#efece7;border-right:1px solid #cfccc7"></div>
<div class="t" style="left:1134.5px;top:789.43px;color:#505050;font-size:10px;">Phases</div>
<div class="t" style="left:1184.5px;top:789.43px;color:#505050;font-size:10px;">Phase info</div>
</body></html>
